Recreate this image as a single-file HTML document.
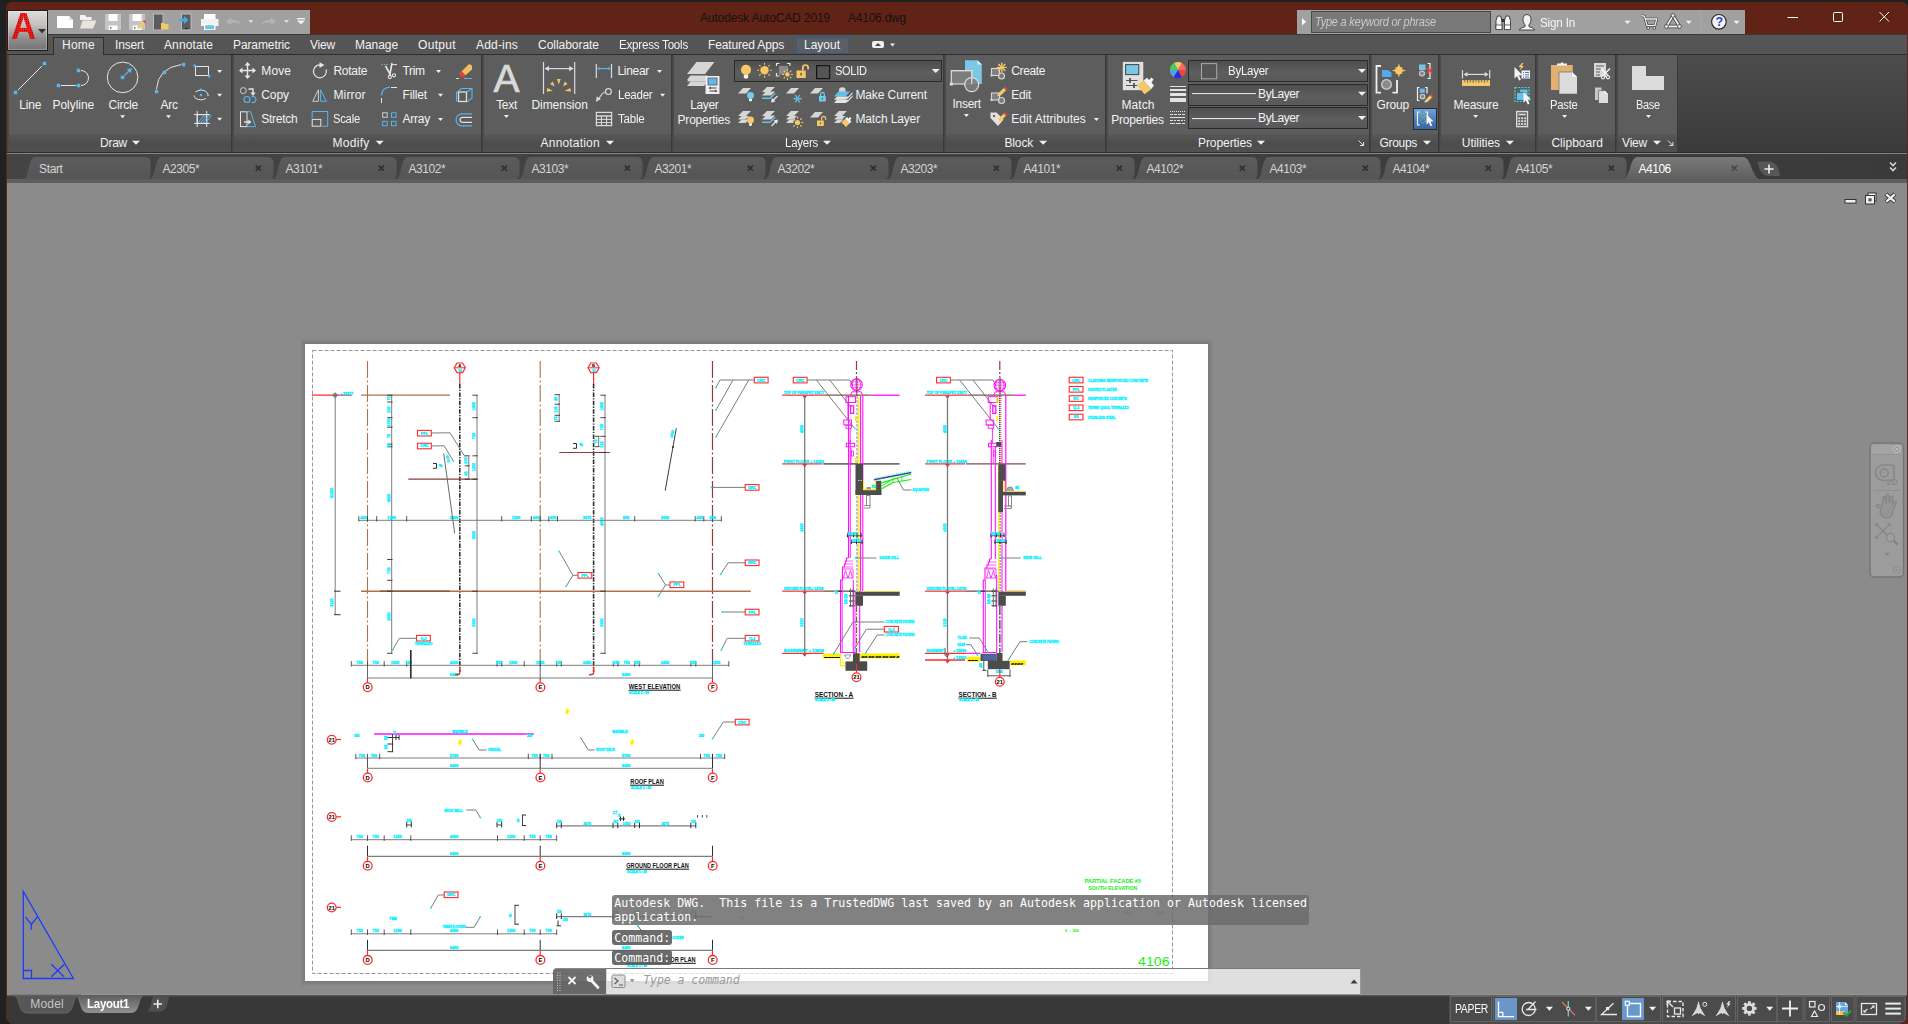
<!DOCTYPE html>
<html lang="en"><head><meta charset="utf-8"><title>Autodesk AutoCAD 2019 - A4106.dwg</title>
<style>
html,body{margin:0;padding:0;background:#1f2020;overflow:hidden}
body{width:1908px;height:1024px;position:relative;font-family:"Liberation Sans",sans-serif}
.b{position:absolute;box-sizing:border-box}
.t{position:absolute;white-space:pre;display:block}
svg{position:absolute;left:0;top:0;overflow:visible}
</style></head><body>
<div id="window" class="b" style="left:6px;top:2px;width:1902px;height:1022px;background:#622317;border-radius:6px 6px 0 0"></div>
<div class="b menurow" style="left:7px;top:34px;width:1900px;height:21px;background:#555555;border-top:1px solid #3a3a3a;"></div>
<div class="b ribbon" style="left:7px;top:54px;width:1900px;height:100px;background:#444444;border-top:1px solid #2e2e2e;border-bottom:1px solid #858585"></div>
<div class="b doctabs" style="left:7px;top:154px;width:1900px;height:25px;background:linear-gradient(90deg,#444 0%,#404040 50%,#3a3a3a 100%);"></div>
<div class="b " style="left:7px;top:179px;width:1900px;height:4px;background:#5e5e5e;"></div>
<div class="b canvas" style="left:7px;top:183px;width:1900px;height:812px;background:#8b8b8b;border-bottom:1px solid #939393"></div>
<div class="b statusbar" style="left:7px;top:995px;width:1900px;height:29px;background:#383838;"></div>
<div class="b" style="left:7px;top:10px;width:41px;height:41px;border:1px solid #1c1c1c;background:linear-gradient(#dcdcdc 0%,#c4c2c0 35%,#8e8e8e 70%,#747474 100%);box-shadow:inset 0 0 0 1px rgba(255,255,255,.25)"></div>
<div class="b qat" style="left:48px;top:10px;width:262px;height:24px;background:#a0a0a0;"></div>
<div class="b infocenter" style="left:1297px;top:10px;width:448px;height:24px;background:#a0a0a0;"></div>
<div class="b " style="left:1311px;top:11px;width:180px;height:22px;background:#787878;border:1px solid #4a4a4a"></div>
<div class="b" style="left:53px;top:37px;width:51px;height:18px;background:linear-gradient(#636363,#5d5d5d);border:1px solid #2e2e2e;border-bottom:none"></div>
<div class="b" style="left:796px;top:37px;width:53px;height:17px;background:#5a5f66;border:1px solid #3c5a80"></div>
<div class="b panel" style="left:8px;top:55px;width:224px;height:98px;background:#5d5d5d;border-left:1px solid #4c4c4c;border-right:1px solid #3a3a3a"></div>
<div class="b" style="left:9px;top:134px;width:222px;height:18px;background:linear-gradient(#585858,#4c4c4c 55%,#505050)"></div>
<div class="b panel" style="left:233px;top:55px;width:249px;height:98px;background:#5d5d5d;border-left:1px solid #4c4c4c;border-right:1px solid #3a3a3a"></div>
<div class="b" style="left:234px;top:134px;width:247px;height:18px;background:linear-gradient(#585858,#4c4c4c 55%,#505050)"></div>
<div class="b panel" style="left:483px;top:55px;width:189px;height:98px;background:#5d5d5d;border-left:1px solid #4c4c4c;border-right:1px solid #3a3a3a"></div>
<div class="b" style="left:484px;top:134px;width:187px;height:18px;background:linear-gradient(#585858,#4c4c4c 55%,#505050)"></div>
<div class="b panel" style="left:673px;top:55px;width:271px;height:98px;background:#5d5d5d;border-left:1px solid #4c4c4c;border-right:1px solid #3a3a3a"></div>
<div class="b" style="left:674px;top:134px;width:269px;height:18px;background:linear-gradient(#585858,#4c4c4c 55%,#505050)"></div>
<div class="b panel" style="left:945px;top:55px;width:161px;height:98px;background:#5d5d5d;border-left:1px solid #4c4c4c;border-right:1px solid #3a3a3a"></div>
<div class="b" style="left:946px;top:134px;width:159px;height:18px;background:linear-gradient(#585858,#4c4c4c 55%,#505050)"></div>
<div class="b panel" style="left:1107px;top:55px;width:263px;height:98px;background:#5d5d5d;border-left:1px solid #4c4c4c;border-right:1px solid #3a3a3a"></div>
<div class="b" style="left:1108px;top:134px;width:261px;height:18px;background:linear-gradient(#585858,#4c4c4c 55%,#505050)"></div>
<div class="b panel" style="left:1371px;top:55px;width:68px;height:98px;background:#5d5d5d;border-left:1px solid #4c4c4c;border-right:1px solid #3a3a3a"></div>
<div class="b" style="left:1372px;top:134px;width:66px;height:18px;background:linear-gradient(#585858,#4c4c4c 55%,#505050)"></div>
<div class="b panel" style="left:1440px;top:55px;width:96px;height:98px;background:#5d5d5d;border-left:1px solid #4c4c4c;border-right:1px solid #3a3a3a"></div>
<div class="b" style="left:1441px;top:134px;width:94px;height:18px;background:linear-gradient(#585858,#4c4c4c 55%,#505050)"></div>
<div class="b panel" style="left:1537px;top:55px;width:79px;height:98px;background:#5d5d5d;border-left:1px solid #4c4c4c;border-right:1px solid #3a3a3a"></div>
<div class="b" style="left:1538px;top:134px;width:77px;height:18px;background:linear-gradient(#585858,#4c4c4c 55%,#505050)"></div>
<div class="b panel" style="left:1617px;top:55px;width:61px;height:98px;background:#5d5d5d;border-left:1px solid #4c4c4c;border-right:1px solid #3a3a3a"></div>
<div class="b" style="left:1618px;top:134px;width:59px;height:18px;background:linear-gradient(#585858,#4c4c4c 55%,#505050)"></div>
<div class="b" style="left:7px;top:152px;width:1900px;height:1px;background:#2c2c2c"></div>
<div class="b" style="left:734px;top:60px;width:208px;height:22px;border:1px solid #2a2a2a;background:linear-gradient(#4e4e4e,#5e5e5e 60%,#585858)"></div>
<div class="b" style="left:1188px;top:60px;width:180px;height:22px;border:1px solid #2a2a2a;background:linear-gradient(#4e4e4e,#5e5e5e 60%,#585858)"></div>
<div class="b" style="left:1188px;top:83.5px;width:180px;height:22px;border:1px solid #2a2a2a;background:linear-gradient(#4e4e4e,#5e5e5e 60%,#585858)"></div>
<div class="b" style="left:1188px;top:107px;width:180px;height:22px;border:1px solid #2a2a2a;background:linear-gradient(#4e4e4e,#5e5e5e 60%,#585858)"></div>
<div class="b" style="left:1413px;top:108px;width:24px;height:22px;border:1px solid #2a2a2a;background:linear-gradient(#6fa4d8,#4a78b8 60%,#3c66a6)"></div>
<div class="b" style="left:1678px;top:55px;width:229px;height:97px;background:linear-gradient(#4c4c4c,#434343 50%,#3b3b3b)"></div>
<svg width="1908" height="1024" viewBox="0 0 1908 1024"><path d="M1787.5 17.5h10.5" stroke="#fff" stroke-width="1" fill="none"/>
<rect x="1833.5" y="12.5" width="9" height="9" stroke="#fff" stroke-width="1" fill="none" rx="1"/>
<path d="M1879.5 12l9.5 9.500M1889 12l-9.500 9.500" stroke="#fff" stroke-width="1" fill="none"/>
<path d="M38 29h8l-4 4.5z" fill="#333"/>
<rect x="872" y="41" width="12" height="7" rx="2" fill="#f0f0f0"/><path d="M875 46l3-3 3 3z" fill="#444"/>
<path d="M890.0 43.5h5l-2.5 3z" fill="#f0f0f0"/>
<path d="M132.0 140.8h8l-4.0 4z" fill="#f0f0f0"/>
<path d="M375.7 140.8h8l-4.0 4z" fill="#f0f0f0"/>
<path d="M606.0 140.8h8l-4.0 4z" fill="#f0f0f0"/>
<path d="M823.0 140.8h8l-4.0 4z" fill="#f0f0f0"/>
<path d="M1039.1 140.8h8l-4.0 4z" fill="#f0f0f0"/>
<path d="M1257.0 140.8h8l-4.0 4z" fill="#f0f0f0"/>
<path d="M1423.0 140.8h8l-4.0 4z" fill="#f0f0f0"/>
<path d="M1505.9 140.8h8l-4.0 4z" fill="#f0f0f0"/>
<path d="M1653.0 140.8h8l-4.0 4z" fill="#f0f0f0"/>
<path d="M1358.5 140.5l5 5m0-3.5v3.5h-3.5" stroke="#e0e0e0" stroke-width="1" fill="none" />
<path d="M1667.9 140.5l5 5m0-3.5v3.5h-3.5" stroke="#e0e0e0" stroke-width="1" fill="none" />
<line x1="18" y1="90" x2="42" y2="66" stroke="#e6e6e6" stroke-width="1" />
<rect x="13.75" y="90.75" width="3.5" height="3.5" fill="#5ab4ee"/>
<rect x="42.75" y="61.75" width="3.5" height="3.5" fill="#5ab4ee"/>
<line x1="61" y1="85.5" x2="76" y2="85.5" stroke="#e6e6e6" stroke-width="1" />
<path d="M81 70.5a7.5 7.5 0 0 1 0 15" stroke="#e6e6e6" stroke-width="1" fill="none" />
<rect x="56.75" y="83.75" width="3.5" height="3.5" fill="#5ab4ee"/>
<rect x="76.75" y="83.75" width="3.5" height="3.5" fill="#5ab4ee"/>
<rect x="76.75" y="68.75" width="3.5" height="3.5" fill="#5ab4ee"/>
<circle cx="122.6" cy="77.4" r="15.3" stroke="#e6e6e6" stroke-width="1" fill="none" />
<rect x="120.85" y="75.65" width="3.5" height="3.5" fill="#5ab4ee"/>
<line x1="124.5" y1="75.5" x2="130" y2="70" stroke="#5ab4ee" stroke-width="1.2" />
<path d="M132 68l-5.2 1.2 4 4z" fill="#5ab4ee" />
<path d="M156.5 89Q158 68 181 64.6" stroke="#e6e6e6" stroke-width="1" fill="none" />
<rect x="154.75" y="89.75" width="3.5" height="3.5" fill="#5ab4ee"/>
<rect x="162.75" y="70.65" width="3.5" height="3.5" fill="#5ab4ee"/>
<rect x="181.75" y="62.849999999999994" width="3.5" height="3.5" fill="#5ab4ee"/>
<path d="M120.1 115.2h5l-2.5 3z" fill="#f0f0f0"/>
<path d="M166.0 115.2h5l-2.5 3z" fill="#f0f0f0"/>
<rect x="195.5" y="66.5" width="13" height="9" stroke="#e6e6e6" stroke-width="1" fill="none" />
<rect x="193.45" y="64.45" width="2.5" height="2.5" fill="#5ab4ee"/>
<rect x="207.75" y="74.95" width="2.5" height="2.5" fill="#5ab4ee"/>
<path d="M217.1 70.0h5l-2.5 3z" fill="#f0f0f0"/>
<ellipse cx="200.9" cy="95" rx="7" ry="4.8" stroke="#e6e6e6" fill="none" stroke-dasharray="14 4" stroke-dashoffset="-4"/>
<rect x="199.75" y="88.64999999999999" width="2.3" height="2.3" fill="#5ab4ee"/>
<rect x="199.75" y="93.85" width="2.3" height="2.3" fill="#5ab4ee"/>
<rect x="206.85" y="93.85" width="2.3" height="2.3" fill="#5ab4ee"/>
<path d="M217.1 93.8h5l-2.5 3z" fill="#f0f0f0"/>
<rect x="197.2" y="114.6" width="9.5" height="8.8" stroke="#e6e6e6" stroke-width="1" fill="#5d5d5d" />
<line x1="194" y1="114.6" x2="210" y2="114.6" stroke="#e6e6e6" stroke-width="1" />
<line x1="194" y1="123.4" x2="210" y2="123.4" stroke="#e6e6e6" stroke-width="1" />
<line x1="197.2" y1="111" x2="197.2" y2="127" stroke="#e6e6e6" stroke-width="1" />
<line x1="206.7" y1="111" x2="206.7" y2="127" stroke="#e6e6e6" stroke-width="1" />
<line x1="198.0" y1="123" x2="204.0" y2="115" stroke="#5ab4ee" stroke-width="1" clip-path="inset(0)"/>
<line x1="200.5" y1="123" x2="206.5" y2="115" stroke="#5ab4ee" stroke-width="1" clip-path="inset(0)"/>
<line x1="203.0" y1="123" x2="209.0" y2="115" stroke="#5ab4ee" stroke-width="1" clip-path="inset(0)"/>
<line x1="205.5" y1="123" x2="211.5" y2="115" stroke="#5ab4ee" stroke-width="1" clip-path="inset(0)"/>
<path d="M217.1 117.8h5l-2.5 3z" fill="#f0f0f0"/>
<path d="M247.5 63v15M240 70.5h15" stroke="#e6e6e6" stroke-width="1.4" fill="none" />
<path d="M247.5 62l3 3.5h-6zM247.5 79l3-3.5h-6zM239 70.5l3.5-3v6zM256 70.5l-3.5-3v6z" fill="#e6e6e6" />
<circle cx="243.3" cy="90.6" r="3" stroke="#cfcfcf" stroke-width="1" fill="none" />
<path d="M248.5 89h4.5v4" stroke="#e6e6e6" stroke-width="1.3" fill="none" />
<path d="M253 96l-2.6-3.4h5.2z" fill="#e6e6e6" />
<circle cx="247" cy="99.5" r="3" stroke="#5ab4ee" stroke-width="1.2" fill="none" />
<path d="M251.6 96.8a3 3 0 1 1 0 5.4" stroke="#5ab4ee" stroke-width="1.2" fill="none" />
<rect x="240.5" y="111.8" width="6.5" height="14.8" stroke="#e6e6e6" stroke-width="1" fill="none" />
<path d="M247 111.6h3.5l5 15h-8.5" stroke="#5ab4ee" stroke-width="1" fill="none" />
<line x1="244" y1="122" x2="249" y2="122" stroke="#e6e6e6" stroke-width="1.3" />
<path d="M251.5 122l-3.2-2.4v4.8z" fill="#e6e6e6" />
<path d="M322.5 65.4a6.5 6.5 0 1 0 3.6 4" stroke="#e6e6e6" stroke-width="1.2" fill="none" />
<path d="M319.5 62.2l5 2.8-5 3z" fill="#e6e6e6" />
<path d="M312.7 101.3h5.7v-11.5z" stroke="#cfcfcf" stroke-width="1" fill="none" />
<path d="M320.6 89.8v11.5h5.7z" stroke="#5ab4ee" stroke-width="1" fill="none" />
<path d="M312.2 118v-6.5h15.5v14.7h-5.5" stroke="#5ab4ee" stroke-width="1" fill="none" />
<rect x="312.2" y="119.4" width="8.6" height="6.8" stroke="#e6e6e6" stroke-width="1" fill="none" />
<line x1="381.5" y1="64.6" x2="389" y2="64.6" stroke="#5ab4ee" stroke-width="1" stroke-dasharray="1.5 1"/>
<line x1="392" y1="64.6" x2="397" y2="64.6" stroke="#e6e6e6" stroke-width="1" />
<path d="M385.5 66l5 9M392 63l-2.2 12" stroke="#e6e6e6" stroke-width="1.6" fill="none" />
<circle cx="389.8" cy="77" r="1.6" stroke="#e6e6e6" stroke-width="1.1" fill="none" />
<circle cx="394" cy="75.3" r="1.6" stroke="#e6e6e6" stroke-width="1.1" fill="none" />
<path d="M381.5 95.5q0.5-8 8.5-8.3" stroke="#5ab4ee" stroke-width="1.2" fill="none" />
<line x1="381.5" y1="98" x2="381.5" y2="103" stroke="#e6e6e6" stroke-width="1" />
<line x1="391" y1="87.5" x2="397" y2="87.5" stroke="#e6e6e6" stroke-width="1" />
<rect x="382.7" y="112.8" width="4.5" height="4.5" stroke="#cfcfcf" stroke-width="1" fill="none" />
<rect x="391.5" y="112.8" width="4.5" height="4.5" stroke="#5ab4ee" stroke-width="1" fill="none" />
<rect x="382.7" y="121.3" width="4.5" height="4.5" stroke="#5ab4ee" stroke-width="1" fill="none" />
<rect x="391.5" y="121.3" width="4.5" height="4.5" stroke="#5ab4ee" stroke-width="1" fill="none" />
<path d="M436.0 69.9h5l-2.5 3z" fill="#f0f0f0"/>
<path d="M438.0 93.8h5l-2.5 3z" fill="#f0f0f0"/>
<path d="M438.0 118.0h5l-2.5 3z" fill="#f0f0f0"/>
<path d="M459.5 73.5l9.5-9.5 3 1.5v4l-8.5 7.5z" fill="#f0c060" />
<path d="M459.5 73.5l2.2-2.2 4 4-2.2 2.2q-3 0.5-4-4z" fill="#e63c3c" />
<line x1="456" y1="78.5" x2="459" y2="78.5" stroke="#ddd" stroke-width="1" />
<line x1="464" y1="78.5" x2="472" y2="78.5" stroke="#5ab4ee" stroke-width="1" />
<rect x="458.5" y="92" width="8" height="9.5" stroke="#e0e0e0" stroke-width="1.3" fill="none" />
<path d="M456.5 101.5v-9l5-4h10.5v9.5l-5 4M461.5 88.5l5 0M472 88.5l-5.5 3.7" stroke="#5ab4ee" stroke-width="1.1" fill="none" />
<path d="M472 113.8h-10a6 6 0 0 0 0 12h10" stroke="#5ab4ee" stroke-width="1.2" fill="none" />
<path d="M472 117.3h-9.5a2.5 2.5 0 0 0 0 5h9.5" stroke="#e0e0e0" stroke-width="1.2" fill="none" />
<path d="M503.9 115.1h5l-2.5 3z" fill="#f0f0f0"/>
<line x1="543.5" y1="62" x2="543.5" y2="94" stroke="#dcdcdc" stroke-width="1.2" />
<line x1="574.7" y1="62" x2="574.7" y2="94" stroke="#dcdcdc" stroke-width="1.2" />
<line x1="546" y1="68.6" x2="572" y2="68.6" stroke="#dcdcdc" stroke-width="1.2" />
<path d="M544.5 68.6l4.5-2.6v5.2zM573.7 68.6l-4.5-2.6v5.2z" fill="#dcdcdc" />
<path d="M558.8 84.5L560.7 79.0L556.9 79.0z" fill="#f5c562" />
<path d="M563.0 86.5L567.6 83.9L564.7 81.5z" fill="#f5c562" />
<path d="M554.6 86.5L552.9 81.5L550.0 83.9z" fill="#f5c562" />
<path d="M564.7 90.7L570.9 91.7L570.4 87.9z" fill="#f5c562" />
<path d="M552.9 90.7L547.2 87.9L546.7 91.7z" fill="#f5c562" />
<line x1="596.3" y1="64" x2="596.3" y2="78" stroke="#dcdcdc" stroke-width="1.2" />
<line x1="611.5" y1="64" x2="611.5" y2="78" stroke="#dcdcdc" stroke-width="1.2" />
<line x1="598" y1="68.6" x2="610" y2="68.6" stroke="#5ab4ee" stroke-width="1.2" />
<path d="M597 68.6l2.5-1.6v3.2zM610.8 68.6l-2.5-1.6v3.2z" fill="#5ab4ee" />
<circle cx="608.4" cy="91.6" r="2.9" stroke="#dcdcdc" stroke-width="1.2" fill="none" />
<path d="M605.4 92q-3.5 0.5-6.8 7.5" stroke="#dcdcdc" stroke-width="1.2" fill="none" />
<path d="M595.8 102l1-5.5 4 2.5z" fill="#dcdcdc" />
<rect x="596.4" y="112.4" width="15.2" height="13.2" stroke="#dcdcdc" stroke-width="1.2" fill="none" />
<line x1="596" y1="116" x2="612" y2="116" stroke="#dcdcdc" stroke-width="1.4" />
<line x1="596" y1="119.4" x2="612" y2="119.4" stroke="#dcdcdc" stroke-width="1" />
<line x1="596" y1="122.6" x2="612" y2="122.6" stroke="#dcdcdc" stroke-width="1" />
<line x1="601.4" y1="116" x2="601.4" y2="126" stroke="#dcdcdc" stroke-width="1" />
<line x1="606.6" y1="116" x2="606.6" y2="126" stroke="#dcdcdc" stroke-width="1" />
<path d="M657.0 69.9h5l-2.5 3z" fill="#f0f0f0"/>
<path d="M660.1 93.8h5l-2.5 3z" fill="#f0f0f0"/>
<path d="M687 74l9.5 -12h18l-9.5 12z" fill="#d6d6d6" />
<path d="M687 81.5l3.2 -4h18l-3.2 4z" fill="#d6d6d6" />
<path d="M687 74l0 0h9l0 0z" fill="#d6d6d6" />
<path d="M687 86l3.5-4.5h17l-3.5 4.5z" fill="#d6d6d6" />
<path d="M687 80l3.5-4.5h17l-3.5 4.5z" fill="#d6d6d6" />
<path d="M705.5 76h14v18h-14z" fill="#efefef" />
<path d="M708 78h9v7h-9z" fill="#62b8ea" />
<rect x="708" y="78" width="9" height="7" fill="none" stroke="#555" stroke-width=".8"/>
<path d="M709.5 88h7M709.5 91h7" stroke="#444" stroke-width="1" fill="none" />
<path d="M708.7 88l2-1.5v3zM717.3 91l-2-1.5v3z" fill="#444" />
<circle cx="746" cy="69.85" r="5.06" stroke="#f8c866" stroke-width="0" fill="#f8c866" />
<path d="M743.8 74.8h4.4v2.8600000000000003q-2.2 2.2 -4.4 0z" fill="#f2f2f2" />
<circle cx="764.5" cy="70.3" r="4.2" stroke="#f8c866" stroke-width="0" fill="#f8c866" />
<line x1="770.0" y1="70.3" x2="771.9" y2="70.3" stroke="#f8c866" stroke-width="1.1" />
<line x1="768.389087296526" y1="74.18908729652601" x2="769.7325901807804" y2="75.53259018078045" stroke="#f8c866" stroke-width="1.1" />
<line x1="764.5" y1="75.8" x2="764.5" y2="77.7" stroke="#f8c866" stroke-width="1.1" />
<line x1="760.610912703474" y1="74.18908729652601" x2="759.2674098192196" y2="75.53259018078045" stroke="#f8c866" stroke-width="1.1" />
<line x1="759.0" y1="70.3" x2="757.1" y2="70.3" stroke="#f8c866" stroke-width="1.1" />
<line x1="760.610912703474" y1="66.41091270347398" x2="759.2674098192196" y2="65.06740981921955" stroke="#f8c866" stroke-width="1.1" />
<line x1="764.5" y1="64.8" x2="764.5" y2="62.9" stroke="#f8c866" stroke-width="1.1" />
<line x1="768.389087296526" y1="66.41091270347398" x2="769.7325901807804" y2="65.06740981921955" stroke="#f8c866" stroke-width="1.1" />
<path d="M776.5 66v-2.5h3M787 63.5h3v2.5M776.5 73v3h3" stroke="#e4e4e4" stroke-width="1.2" fill="none" />
<path d="M779 66h9v8.5h-9z" fill="#8a8a8a" />
<circle cx="787.5" cy="74.5" r="2.2" stroke="#f8c866" stroke-width="0" fill="#f8c866" />
<line x1="791.0" y1="74.5" x2="792.9" y2="74.5" stroke="#f8c866" stroke-width="1.1" />
<line x1="789.9748737341529" y1="76.97487373415292" x2="791.3183766184073" y2="78.31837661840736" stroke="#f8c866" stroke-width="1.1" />
<line x1="787.5" y1="78.0" x2="787.5" y2="79.9" stroke="#f8c866" stroke-width="1.1" />
<line x1="785.0251262658471" y1="76.97487373415292" x2="783.6816233815927" y2="78.31837661840736" stroke="#f8c866" stroke-width="1.1" />
<line x1="784.0" y1="74.5" x2="782.1" y2="74.5" stroke="#f8c866" stroke-width="1.1" />
<line x1="785.0251262658471" y1="72.02512626584708" x2="783.6816233815927" y2="70.68162338159264" stroke="#f8c866" stroke-width="1.1" />
<line x1="787.5" y1="71.0" x2="787.5" y2="69.1" stroke="#f8c866" stroke-width="1.1" />
<line x1="789.9748737341529" y1="72.02512626584708" x2="791.3183766184073" y2="70.68162338159264" stroke="#f8c866" stroke-width="1.1" />
<path d="M796.5 70.5h9.2v7.475h-9.2z" fill="#f8c866" />
<path d="M802.825 70.5v-2.875a2.6449999999999996 2.6449999999999996 0 0 1 5.289999999999999 0v1.7249999999999999" stroke="#f8c866" stroke-width="1.7249999999999999" fill="none" />
<rect x="800.41" y="72.8" width="1.38" height="2.76" fill="#555"/>
<rect x="816.6" y="65.6" width="13" height="13" fill="#555" stroke="#141414" stroke-width="1.2"/>
<path d="M931.7 68.9h8l-4.0 4z" fill="#f0f0f0"/>
<path d="M738 93.5l5 -5.5h8l-5 5.5z" fill="#d6d6d6" />
<circle cx="750.5" cy="95.375" r="3.4499999999999997" stroke="#6fcdea" stroke-width="0" fill="#6fcdea" />
<path d="M749.0 98.75h3.0v1.9500000000000002q-1.5 1.5 -3.0 0z" fill="#f2f2f2" />
<path d="M762 92l5 -5h8l-5 5z" fill="#d6d6d6" />
<path d="M762 95.5l4-4h9l-4 4z" fill="#d6d6d6" />
<path d="M762 98.2h8l5-5" stroke="#62c0ea" stroke-width="1.4" fill="none" />
<line x1="777.5" y1="96" x2="772.5" y2="101" stroke="#e8e8e8" stroke-width="1.3" />
<path d="M771 102.5l1-4.5 3.5 3.5z" fill="#e8e8e8" />
<path d="M786 93.5l5 -5.5h8l-5 5.5z" fill="#d6d6d6" />
<line x1="801.8" y1="98.7" x2="793.2" y2="98.7" stroke="#62c0ea" stroke-width="1.3" />
<line x1="799.65" y1="102.42390923627309" x2="795.35" y2="94.97609076372692" stroke="#62c0ea" stroke-width="1.3" />
<line x1="795.35" y1="102.42390923627309" x2="799.65" y2="94.97609076372692" stroke="#62c0ea" stroke-width="1.3" />
<path d="M810 93.5l5 -5.5h8l-5 5.5z" fill="#d6d6d6" />
<path d="M819 96h6.8v5.5249999999999995h-6.8z" fill="#6fcdea" />
<path d="M820.53 96v-1.7a1.87 1.87 0 0 1 3.74 0v1.7" stroke="#6fcdea" stroke-width="1.275" fill="none" />
<rect x="821.89" y="97.7" width="1.02" height="2.04" fill="#555"/>
<path d="M738 116l5 -5h8l-5 5z" fill="#d6d6d6" />
<path d="M738 119.5l3.5-3.5h7.5l-3.5 3.5z" fill="#d6d6d6" />
<path d="M738 123l3.5-3.5h7.5l-3.5 3.5z" fill="#d6d6d6" />
<circle cx="750.5" cy="119.875" r="3.4499999999999997" stroke="#f8c866" stroke-width="0" fill="#f8c866" />
<path d="M749.0 123.25h3.0v1.9500000000000002q-1.5 1.5 -3.0 0z" fill="#f2f2f2" />
<path d="M762 116l5 -5h8l-5 5z" fill="#d6d6d6" />
<path d="M762 119.5l4-4h9l-4 4z" fill="#d6d6d6" />
<path d="M762 122.2h8l5-5" stroke="#62c0ea" stroke-width="1.4" fill="none" />
<line x1="771.5" y1="126" x2="776.5" y2="121" stroke="#e8e8e8" stroke-width="1.3" />
<path d="M778 119.5l-1 4.5-3.5-3.5z" fill="#e8e8e8" />
<path d="M786 116l5 -5h8l-5 5z" fill="#d6d6d6" />
<path d="M786 119.5l3.5-3.5h7.5l-3.5 3.5z" fill="#d6d6d6" />
<path d="M786 123l3.5-3.5h6l-3.5 3.5z" fill="#d6d6d6" />
<circle cx="797.5" cy="122.5" r="2.6" stroke="#f8c866" stroke-width="0" fill="#f8c866" />
<line x1="801.4" y1="122.5" x2="803.3" y2="122.5" stroke="#f8c866" stroke-width="1.1" />
<line x1="800.2577164466276" y1="125.25771644662754" x2="801.601219330882" y2="126.60121933088197" stroke="#f8c866" stroke-width="1.1" />
<line x1="797.5" y1="126.4" x2="797.5" y2="128.3" stroke="#f8c866" stroke-width="1.1" />
<line x1="794.7422835533724" y1="125.25771644662754" x2="793.398780669118" y2="126.60121933088197" stroke="#f8c866" stroke-width="1.1" />
<line x1="793.6" y1="122.5" x2="791.7" y2="122.5" stroke="#f8c866" stroke-width="1.1" />
<line x1="794.7422835533724" y1="119.74228355337246" x2="793.398780669118" y2="118.39878066911803" stroke="#f8c866" stroke-width="1.1" />
<line x1="797.5" y1="118.6" x2="797.5" y2="116.7" stroke="#f8c866" stroke-width="1.1" />
<line x1="800.2577164466276" y1="119.74228355337246" x2="801.601219330882" y2="118.39878066911803" stroke="#f8c866" stroke-width="1.1" />
<path d="M810 117.5l5 -5.5h8l-5 5.5z" fill="#d6d6d6" />
<path d="M817 120.5h6.8v5.5249999999999995h-6.8z" fill="#f8c866" />
<path d="M821.675 120.5v-2.125a1.9549999999999998 1.9549999999999998 0 0 1 3.9099999999999997 0v1.275" stroke="#f8c866" stroke-width="1.275" fill="none" />
<rect x="819.89" y="122.2" width="1.02" height="2.04" fill="#555"/>
<circle cx="842.3" cy="90.5" r="3.3" stroke="#d6d6d6" stroke-width="0" fill="#d6d6d6" />
<path d="M834 96.5l4.5-5h11.5l-4.5 5z" fill="#62c0ea" />
<path d="M834 99.8l3-3.3h11.5l4-4.4v1.6l-4 4.4-3 1.7z" fill="#e4e4e4" />
<path d="M834 103l3-3.3h11.5l4-4.4v1.6l-4 4.4-3 1.7z" fill="#e4e4e4" />
<path d="M834 116l5 -5h8l-5 5z" fill="#d6d6d6" />
<path d="M834 119.5l3.5-3.5h8l-3.5 3.5z" fill="#d6d6d6" />
<path d="M834 123l3.5-3.5h6l-3.5 3.5z" fill="#d6d6d6" />
<path d="M841.5 122.5l3.5-3.5 4.5 4.5-3.5 3.5z" fill="#f8c866" />
<path d="M845 119l2-2 1.5 1.5 1.5-1.5 1.5 1.5-1.5 1.5 1.5 1.5-2 2z" fill="#f2f2f2" />
<path d="M965 60.2h12.5l4.3 4.3v19.4h-16.8z" fill="#7cc6e6" />
<path d="M977.5 60.2v4.3h4.3z" fill="#e8f4fa" />
<rect x="951.3" y="70.6" width="20.4" height="13.4" fill="#7c7c7c" stroke="#dcdcdc" stroke-width="1.2"/>
<circle cx="971.7" cy="84.6" r="7" stroke="#dcdcdc" stroke-width="1.2" fill="rgba(124,124,124,.85)" />
<path d="M951.3 70.6h20.4v13.4" stroke="#dcdcdc" stroke-width="1.2" fill="none" />
<rect x="949.8" y="82.6" width="3" height="3" fill="#dcdcdc"/>
<path d="M963.9 114.0h5l-2.5 3z" fill="#f0f0f0"/>
<rect x="991.5" y="68.5" width="8" height="7" fill="#808080" stroke="#d8d8d8" stroke-width="1.1"/>
<circle cx="1001.5" cy="76.0" r="3" stroke="#d8d8d8" stroke-width="1.1" fill="rgba(128,128,128,.8)" />
<rect x="990.5" y="74.5" width="2" height="2" fill="#d8d8d8"/>
<circle cx="1001.8" cy="67.5" r="1.8" stroke="#f8c866" stroke-width="0" fill="#f8c866" />
<line x1="1004.9" y1="67.5" x2="1006.8" y2="67.5" stroke="#f8c866" stroke-width="1.1" />
<line x1="1003.9920310216783" y1="69.6920310216783" x2="1005.3355339059327" y2="71.03553390593274" stroke="#f8c866" stroke-width="1.1" />
<line x1="1001.8" y1="70.6" x2="1001.8" y2="72.5" stroke="#f8c866" stroke-width="1.1" />
<line x1="999.6079689783217" y1="69.6920310216783" x2="998.2644660940672" y2="71.03553390593274" stroke="#f8c866" stroke-width="1.1" />
<line x1="998.6999999999999" y1="67.5" x2="996.8" y2="67.5" stroke="#f8c866" stroke-width="1.1" />
<line x1="999.6079689783217" y1="65.3079689783217" x2="998.2644660940672" y2="63.96446609406726" stroke="#f8c866" stroke-width="1.1" />
<line x1="1001.8" y1="64.4" x2="1001.8" y2="62.5" stroke="#f8c866" stroke-width="1.1" />
<line x1="1003.9920310216783" y1="65.3079689783217" x2="1005.3355339059327" y2="63.96446609406726" stroke="#f8c866" stroke-width="1.1" />
<line x1="1001.8" y1="67.5" x2="1006.0" y2="67.5" stroke="#f8c866" stroke-width="1.2" />
<line x1="1001.8" y1="67.5" x2="1004.7698484809835" y2="70.4698484809835" stroke="#f8c866" stroke-width="1.2" />
<line x1="1001.8" y1="67.5" x2="1001.8" y2="71.7" stroke="#f8c866" stroke-width="1.2" />
<line x1="1001.8" y1="67.5" x2="998.8301515190165" y2="70.4698484809835" stroke="#f8c866" stroke-width="1.2" />
<line x1="1001.8" y1="67.5" x2="997.5999999999999" y2="67.5" stroke="#f8c866" stroke-width="1.2" />
<line x1="1001.8" y1="67.5" x2="998.8301515190165" y2="64.5301515190165" stroke="#f8c866" stroke-width="1.2" />
<line x1="1001.8" y1="67.5" x2="1001.8" y2="63.3" stroke="#f8c866" stroke-width="1.2" />
<line x1="1001.8" y1="67.5" x2="1004.7698484809835" y2="64.5301515190165" stroke="#f8c866" stroke-width="1.2" />
<rect x="991.5" y="93" width="8" height="7" fill="#808080" stroke="#d8d8d8" stroke-width="1.1"/>
<circle cx="1001.5" cy="100.5" r="3" stroke="#d8d8d8" stroke-width="1.1" fill="rgba(128,128,128,.8)" />
<rect x="990.5" y="99" width="2" height="2" fill="#d8d8d8"/>
<path d="M997.5 96l0.95 -2.8499999999999996 5.225 -5.225 2.375 2.375 -5.225 5.225z" fill="#f8c866" />
<path d="M1003.675 87.925l1.4249999999999998 -1.4249999999999998 2.375 2.375 -1.4249999999999998 1.4249999999999998z" fill="#f04040" />
<path d="M997.5 96l0.57 -1.71 1.14 1.14z" fill="#eee" />
<path d="M990.5 112.5h6l7 7-5.5 6.5-7.5-8z" fill="#e6e0dc" />
<path d="M993 115h2v2h-2z" fill="#5d5d5d" />
<path d="M997.5 121.5l0.95 -2.8499999999999996 5.225 -5.225 2.375 2.375 -5.225 5.225z" fill="#f8c866" />
<path d="M1003.675 113.425l1.4249999999999998 -1.4249999999999998 2.375 2.375 -1.4249999999999998 1.4249999999999998z" fill="#f04040" />
<path d="M997.5 121.5l0.57 -1.71 1.14 1.14z" fill="#eee" />
<path d="M1093.9 118.0h5l-2.5 3z" fill="#f0f0f0"/>
<path d="M1122.8 61.9h20.5v28.3h-20.5z" fill="#e0e0e0" />
<rect x="1125.6" y="64.6" width="13.2" height="10" fill="#7cc6e6" stroke="#444" stroke-width="1"/>
<path d="M1126 80.5h11.5M1126 85.5h11.5" stroke="#555" stroke-width="1" fill="none" />
<path d="M1130 78v5M1134 83v5" stroke="#444" stroke-width="1.6" fill="none" />
<path d="M1137 85l6.5-4.5 7.5 9-6.5 4.8z" fill="#f8c866" />
<path d="M1143.5 80.5l3.5-2.8 2 2.2 2.5-2.5 2 2-2 3 2.5 3-3 3.8z" fill="#f4f4f4" />
<path d="M1177.9 70.1L1174.06 63.08A8 8 0 0 1 1182.06 63.27z" fill="#f8c866" />
<path d="M1177.9 70.1L1182.06 63.27A8 8 0 0 1 1185.90 70.29z" fill="#f86a5a" />
<path d="M1177.9 70.1L1185.90 70.29A8 8 0 0 1 1181.74 77.12z" fill="#f04838" />
<path d="M1177.9 70.1L1181.74 77.12A8 8 0 0 1 1173.74 76.93z" fill="#2828e8" />
<path d="M1177.9 70.1L1173.74 76.93A8 8 0 0 1 1169.90 69.91z" fill="#5aa0e0" />
<path d="M1177.9 70.1L1169.90 69.91A8 8 0 0 1 1174.06 63.08z" fill="#40d060" />
<path d="M1170 86h16v1h-16z" fill="#e2e2e2" />
<path d="M1170 89h16v2h-16z" fill="#e2e2e2" />
<path d="M1170 93h16v3h-16z" fill="#e2e2e2" />
<path d="M1170 98h16v4h-16z" fill="#e2e2e2" />
<line x1="1170" y1="111.5" x2="1185" y2="111.5" stroke="#e2e2e2" stroke-width="1" stroke-dasharray="1 1"/>
<line x1="1170" y1="114.5" x2="1185" y2="114.5" stroke="#e2e2e2" stroke-width="1" stroke-dasharray="3 1"/>
<line x1="1170" y1="117.5" x2="1185" y2="117.5" stroke="#e2e2e2" stroke-width="1" />
<line x1="1170" y1="120.5" x2="1185" y2="120.5" stroke="#e2e2e2" stroke-width="1" stroke-dasharray="3 1 2 1"/>
<line x1="1170" y1="123.5" x2="1185" y2="123.5" stroke="#e2e2e2" stroke-width="1" stroke-dasharray="5 1"/>
<rect x="1201.5" y="63.6" width="15.2" height="15.2" fill="#555" stroke="#a8a8a8" stroke-width="1"/>
<line x1="1192" y1="93.6" x2="1256" y2="93.6" stroke="#f0f0f0" stroke-width="1" />
<line x1="1192" y1="118.6" x2="1256" y2="118.6" stroke="#f0f0f0" stroke-width="1" />
<path d="M1358.0 68.9h8l-4.0 4z" fill="#f0f0f0"/>
<path d="M1358.0 91.7h8l-4.0 4z" fill="#f0f0f0"/>
<path d="M1358.0 115.9h8l-4.0 4z" fill="#f0f0f0"/>
<path d="M1381.0 66h-4.5v26.599999999999994h4.5" stroke="#f0f0f0" stroke-width="1.8" fill="none" />
<path d="M1397 80v12.599999999999994h-4.5" stroke="#f0f0f0" stroke-width="1.8" fill="none" />
<path d="M1382 70h6l3.5 2.5v4.5h-9.5z" fill="#58a8e8" />
<circle cx="1386.5" cy="84.4" r="4.8" stroke="#d0d0d0" stroke-width="1.3" fill="#8a8a8a" />
<path d="M1406.1 70.4L1401.0 71.9L1401.0 68.9z" fill="#f8c866" />
<path d="M1402.4 73.9L1399.4 73.0L1401.5 70.9z" fill="#f8c866" />
<path d="M1398.9 77.6L1397.4 72.5L1400.4 72.5z" fill="#f8c866" />
<path d="M1395.4 73.9L1396.3 70.9L1398.4 73.0z" fill="#f8c866" />
<path d="M1391.7 70.4L1396.8 68.9L1396.8 71.9z" fill="#f8c866" />
<path d="M1395.4 66.9L1398.4 67.8L1396.3 69.9z" fill="#f8c866" />
<path d="M1398.9 63.2L1400.4 68.3L1397.4 68.3z" fill="#f8c866" />
<path d="M1402.4 66.9L1401.5 69.9L1399.4 67.8z" fill="#f8c866" />
<circle cx="1398.9" cy="70.4" r="3.6" stroke="#f8c866" stroke-width="0" fill="#f8c866" />
<rect x="1419.5" y="65" width="5.5" height="4.5" fill="#8ab8d8" stroke="#6fcdea" stroke-width="1"/>
<circle cx="1422" cy="73.5" r="2.5" stroke="#d0d0d0" stroke-width="1.1" fill="#888" />
<path d="M1427.5 63.5h2.5v15h-2.5" stroke="#f0f0f0" stroke-width="1.2" fill="none" />
<path d="M1427 68l5 5M1432 68l-5 5" stroke="#f04040" stroke-width="1.6" fill="none" />
<path d="M1419.5 87.5h-2v13h2M1425 87.5h2v6" stroke="#f0f0f0" stroke-width="1.2" fill="none" />
<rect x="1420" y="89" width="4.5" height="3.5" fill="#8ab8d8" stroke="#58a8e8" stroke-width="1"/>
<circle cx="1422.5" cy="96.5" r="2.3" stroke="#d0d0d0" stroke-width="1.1" fill="#888" />
<path d="M1424.5 102.5l0.85 -2.55 4.675 -4.675 2.125 2.125 -4.675 4.675z" fill="#f8c866" />
<path d="M1430.025 95.275l1.275 -1.275 2.125 2.125 -1.275 1.275z" fill="#f04040" />
<path d="M1424.5 102.5l0.51 -1.53 1.02 1.02z" fill="#eee" />
<path d="M1420 112h-2.5v13h2.5M1425 112h2.5v4" stroke="#f0f0f0" stroke-width="1.2" fill="none" />
<rect x="1421" y="113.5" width="4" height="3.5" fill="none" stroke="#60e060" stroke-width="1" stroke-dasharray="1 1"/>
<circle cx="1423" cy="121" r="2.2" stroke="#60e060" stroke-width="1" fill="none" stroke-dasharray="1 1"/>
<path d="M1426.5 114.5v10l2.3-2.2 1.8 4 1.6-.7-1.8-4h3.2z" fill="#f8f8f8" />
<line x1="1462.5" y1="70" x2="1462.5" y2="78.5" stroke="#dcdcdc" stroke-width="1.2" />
<line x1="1489.7" y1="70" x2="1489.7" y2="78.5" stroke="#dcdcdc" stroke-width="1.2" />
<line x1="1465" y1="74.4" x2="1487" y2="74.4" stroke="#dcdcdc" stroke-width="1.2" />
<path d="M1463.5 74.4l4-2.4v4.8zM1488.7 74.4l-4-2.4v4.8z" fill="#dcdcdc" />
<path d="M1462 80.2h28v5.8h-28z" fill="#f5c868" />
<line x1="1464.8" y1="80.2" x2="1464.8" y2="82.2" stroke="#5d5d5d" stroke-width="0.9" />
<line x1="1467.6" y1="80.2" x2="1467.6" y2="83" stroke="#5d5d5d" stroke-width="0.9" />
<line x1="1470.4" y1="80.2" x2="1470.4" y2="82.2" stroke="#5d5d5d" stroke-width="0.9" />
<line x1="1473.2" y1="80.2" x2="1473.2" y2="83" stroke="#5d5d5d" stroke-width="0.9" />
<line x1="1476.0" y1="80.2" x2="1476.0" y2="82.2" stroke="#5d5d5d" stroke-width="0.9" />
<line x1="1478.8" y1="80.2" x2="1478.8" y2="83" stroke="#5d5d5d" stroke-width="0.9" />
<line x1="1481.6" y1="80.2" x2="1481.6" y2="82.2" stroke="#5d5d5d" stroke-width="0.9" />
<line x1="1484.4" y1="80.2" x2="1484.4" y2="83" stroke="#5d5d5d" stroke-width="0.9" />
<line x1="1487.2" y1="80.2" x2="1487.2" y2="82.2" stroke="#5d5d5d" stroke-width="0.9" />
<path d="M1473.1 115.1h5l-2.5 3z" fill="#f0f0f0"/>
<path d="M1514.5 67v11.5l2.6-2.5 2 4.5 1.8-.8-2-4.5h3.6z" fill="#f4f4f4" />
<path d="M1521.5 70.5h8.5v8h-8.5z" fill="#f4f4f4" />
<path d="M1523 72.5h1M1525 72.5h4M1523 74.8h1M1525 74.8h4M1523 77h1M1525 77h4" stroke="#3a70c0" stroke-width="0.9" fill="none" />
<path d="M1522 63l-3.5 4h2.5l-1.5 3.5 4.5-4.5h-2.5l2-3z" fill="#f8c866" />
<rect x="1515" y="87.5" width="14" height="14" fill="none" stroke="#40d8d0" stroke-width="1.2" stroke-dasharray="2 1.2"/>
<path d="M1520 89.5h7.5v7.5h-7.5z" fill="#62c0ea" />
<path d="M1517 92.5h7.5v7.5h-7.5z" fill="#62c0ea" />
<path d="M1517 92.5h7.5v7.5" stroke="#5d5d5d" stroke-width="0.8" fill="none" />
<path d="M1523.5 92v10.5l2.4-2.3 1.9 4.2 1.7-.7-1.9-4.2h3.4z" fill="#f8f8f8" />
<rect x="1516.7" y="111.6" width="10.8" height="15" fill="none" stroke="#dcdcdc" stroke-width="1.4"/>
<line x1="1518.5" y1="114.5" x2="1525.7" y2="114.5" stroke="#dcdcdc" stroke-width="1.6" />
<rect x="1518.3" y="117.3" width="1.9" height="1.9" fill="#dcdcdc"/>
<rect x="1521.2" y="117.3" width="1.9" height="1.9" fill="#dcdcdc"/>
<rect x="1524.1" y="117.3" width="1.9" height="1.9" fill="#dcdcdc"/>
<rect x="1518.3" y="120.2" width="1.9" height="1.9" fill="#dcdcdc"/>
<rect x="1521.2" y="120.2" width="1.9" height="1.9" fill="#dcdcdc"/>
<rect x="1524.1" y="120.2" width="1.9" height="1.9" fill="#dcdcdc"/>
<rect x="1518.3" y="123.1" width="1.9" height="1.9" fill="#dcdcdc"/>
<rect x="1521.2" y="123.1" width="1.9" height="1.9" fill="#dcdcdc"/>
<rect x="1524.1" y="123.1" width="1.9" height="1.9" fill="#dcdcdc"/>
<path d="M1551 65h21.8v25h-21.8z" fill="#e2b070" />
<path d="M1557 65.5v-2h3.5q1.5-2.5 3 0h3.5v2z" fill="#f4f4f4" />
<path d="M1559 72h13l5 5v16.8h-18z" fill="#dcdcdc" />
<path d="M1572 72v5h5z" fill="#f8f8f8" />
<path d="M1559 93.8v-21.8h13" stroke="#5d5d5d" stroke-width="0.6" fill="none" />
<path d="M1562.1 115.1h5l-2.5 3z" fill="#f0f0f0"/>
<path d="M1594 63h12v14h-12z" fill="#d8d8d8" />
<path d="M1596 66h8M1596 69h5M1596 72h4M1596 75h4" stroke="#5d5d5d" stroke-width="1.1" fill="none" />
<path d="M1601 68.5l7.5 7.5M1610 68.5l-7.5 7.5" stroke="#f4f4f4" stroke-width="1.5" fill="none" />
<circle cx="1603" cy="77.3" r="1.6" stroke="#f4f4f4" stroke-width="1.1" fill="#5d5d5d" />
<circle cx="1608" cy="77.3" r="1.6" stroke="#f4f4f4" stroke-width="1.1" fill="#5d5d5d" />
<path d="M1595 87.5h6.5v12.5h-6.5z" fill="#c8c8c8" />
<path d="M1598.5 90.5h6l3.5 3.5v9h-9.5z" fill="#dcdcdc" />
<path d="M1598.5 103v-12.5h6" stroke="#5d5d5d" stroke-width="0.7" fill="none" />
<path d="M1604.5 90.5v3.5h3.5z" fill="#f4f4f4" />
<path d="M1632 66h14v10h18v14h-32z" fill="#dcdcdc" />
<path d="M1646.0 115.1h5l-2.5 3z" fill="#f0f0f0"/>
<path d="M57 16h12l4 4v8h-16z" fill="#ffffff" />
<path d="M69 16v4h4z" fill="#e0e0e0" />
<path d="M80 15h5l1.5 2h5v3h-11.5z" fill="#f4f2ee" />
<path d="M82.5 20.5h14l-3.5 8h-13z" fill="#e8e4de" />
<path d="M105 14h16v16h-16z" fill="#c4c4c4" />
<path d="M108.5 14h9v7h-9z" fill="#ffffff" />
<path d="M108.5 25.5h9v4.5h-9z" fill="#ffffff" />
<path d="M110 27h1.5v2h-1.5z" fill="#888" />
<path d="M129 14h16v16h-16z" fill="#c4c4c4" />
<path d="M132.5 14h9v7h-9z" fill="#ffffff" />
<path d="M132.5 25.5h9v4.5h-9z" fill="#ffffff" />
<path d="M134 27h1.5v2h-1.5z" fill="#888" />
<path d="M137 29l0.9 -2.7 4.95 -4.95 2.25 2.25 -4.95 4.95z" fill="#f8c866" />
<path d="M142.85 21.35l1.35 -1.35 2.25 2.25 -1.35 1.35z" fill="#f04040" />
<path d="M137 29l0.54 -1.62 1.08 1.08z" fill="#eee" />
<path d="M153.5 14h9.5v16h-9.5z" fill="#5c5c5c" />
<rect x="153.5" y="14" width="9.5" height="16" fill="none" stroke="#bbb" stroke-width="1"/>
<path d="M161 23h3l1 1h3.5v5.5h-7.5z" fill="#f5c868" />
<path d="M181.5 14h9.5v16h-9.5z" fill="#5c5c5c" />
<rect x="181.5" y="14" width="9.5" height="16" fill="none" stroke="#bbb" stroke-width="1"/>
<path d="M179 18.5h5v-2.5l4.5 4-4.5 4v-2.5h-5z" fill="#4aa8ea" />
<line x1="185" y1="28.5" x2="187.5" y2="28.5" stroke="#222" stroke-width="1" />
<path d="M204 14h11.5v5h-11.5z" fill="#ffffff" />
<path d="M201 19h17.5v7h-17.5z" fill="#f2f2f2" />
<path d="M204 24h11.5v6h-11.5z" fill="#ffffff" />
<path d="M205.2 25.2h9v4h-9z" fill="#6cc4e0" />
<path d="M225.5 21.5l6-4v2.5q6-.5 9.5 4-4-2-9.5-1.5v2.5z" fill="#b4b4b4" />
<path d="M248.3 20.0h5l-2.5 3z" fill="#dedede"/>
<path d="M276.5 21.5l-6-4v2.5q-6-.5-9.5 4 4-2 9.5-1.5v2.5z" fill="#b4b4b4" />
<path d="M284.0 20.0h5l-2.5 3z" fill="#dedede"/>
<path d="M297 18h8v1.3h-8z" fill="#f4f4f4" />
<path d="M297.0 20.5h8l-4.0 4z" fill="#f4f4f4"/>
<path d="M1302 18l4.2 3.7-4.2 3.7z" fill="#f8f8f8" />
<path d="M1496 20.5l1.5-4.5h3l1.5 4.5v9h-6z" fill="#f4f4f4" stroke="#333" stroke-width=".9"/>
<rect x="1496" y="25.0" width="6" height="4.5" fill="#fff" stroke="#333" stroke-width=".7"/>
<path d="M1504.5 20.5l1.5-4.5h3l1.5 4.5v9h-6z" fill="#f4f4f4" stroke="#333" stroke-width=".9"/>
<rect x="1504.5" y="25.0" width="6" height="4.5" fill="#fff" stroke="#333" stroke-width=".7"/>
<rect x="1501.3" y="19.0" width="3.4" height="3" fill="#333"/>
<path d="M1527 14.5c-3 0-4 2.5-4 5 0 2.500 1.200 4.500 2.200 5.500l-.4 1.800c-2.500.6-5 1.700-5.500 3.200h15.400c-.5-1.500-3-2.600-5.500-3.200l-.4-1.800c1-1 2.200-3 2.200-5.500 0-2.500-1-5-4-5z" fill="#f2f2f2" stroke="#333" stroke-width=".9"/>
<path d="M1624.5 20.7h6l-3.0 3.2z" fill="#f0f0f0"/>
<path d="M1641.500 15.500l3 .8 2.500 9h8l1.800-6.300h-11" fill="none" stroke="#333" stroke-width="2.600" stroke-linejoin="round"/><path d="M1641.500 15.500l3 .8 2.500 9h8l1.800-6.300h-11" fill="none" stroke="#f2f2f2" stroke-width="1.300"/>
<circle cx="1648.2" cy="28" r="1.4" stroke="#333" stroke-width="0.8" fill="#f2f2f2" />
<circle cx="1654.2" cy="28" r="1.4" stroke="#333" stroke-width="0.8" fill="#f2f2f2" />
<path d="M1673 15.500l6.500 11h-13z" fill="none" stroke="#333" stroke-width="3.400" stroke-linejoin="round"/><path d="M1673 15.500l6.500 11h-13z" fill="none" stroke="#f2f2f2" stroke-width="1.800" stroke-linejoin="round"/>
<circle cx="1673" cy="15.5" r="1.9" stroke="#333" stroke-width="0.8" fill="#f2f2f2" />
<circle cx="1666.5" cy="26.5" r="1.9" stroke="#333" stroke-width="0.8" fill="#f2f2f2" />
<circle cx="1679.5" cy="26.5" r="1.9" stroke="#333" stroke-width="0.8" fill="#f2f2f2" />
<path d="M1685.8 20.7h6l-3.0 3.2z" fill="#f0f0f0"/>
<circle cx="1718.9" cy="21.8" r="7.3" stroke="#2a2a2a" stroke-width="1.2" fill="#f4f4f4" />
<path d="M1733.5 20.7h6l-3.0 3.2z" fill="#f0f0f0"/>
<rect x="1700.5" y="11" width="1" height="22" fill="#a8a8a8"/></svg>
<span class="t" style="left:700.00px;top:9.84px;font-size:12px;line-height:16px;color:#151110;font-family:'Liberation Sans',sans-serif;letter-spacing:-0.131px;">Autodesk AutoCAD 2019</span>
<span class="t" style="left:848.00px;top:9.84px;font-size:12px;line-height:16px;color:#151110;font-family:'Liberation Sans',sans-serif;letter-spacing:-0.227px;">A4106.dwg</span>
<span class="t" style="left:11.30px;top:2.85px;font-size:36.5px;line-height:47px;color:transparent;font-family:'Liberation Sans',sans-serif;font-weight:bold;letter-spacing:-1.054px;transform:scaleX(0.9484);transform-origin:0 50%;background:radial-gradient(circle,#4a0a06 38%,rgba(74,10,6,0) 46%) 0 0/2.2px 2.2px,linear-gradient(100deg,#a01410 0%,#ff1c1c 45%,#ff1c1c 70%,#c01612 100%);-webkit-background-clip:text;background-clip:text;">A</span>
<span class="t" style="left:1315.00px;top:13.84px;font-size:12px;line-height:16px;color:#cacaca;font-family:'Liberation Sans',sans-serif;font-style:italic;letter-spacing:-0.230px;transform:scaleX(0.9130);transform-origin:0 50%;">Type a keyword or phrase</span>
<span class="t" style="left:1540.20px;top:14.67px;font-size:12.5px;line-height:16px;color:#f4f8f8;font-family:'Liberation Sans',sans-serif;letter-spacing:-0.222px;transform:scaleX(0.9369);transform-origin:0 50%;">Sign In</span>
<span class="t" style="left:62.00px;top:36.84px;font-size:12px;line-height:16px;color:#f2f2f2;font-family:'Liberation Sans',sans-serif;letter-spacing:0.248px;">Home</span>
<span class="t" style="left:115.00px;top:36.84px;font-size:12px;line-height:16px;color:#f2f2f2;font-family:'Liberation Sans',sans-serif;letter-spacing:-0.168px;">Insert</span>
<span class="t" style="left:164.00px;top:36.84px;font-size:12px;line-height:16px;color:#f2f2f2;font-family:'Liberation Sans',sans-serif;letter-spacing:0.120px;">Annotate</span>
<span class="t" style="left:233.00px;top:36.84px;font-size:12px;line-height:16px;color:#f2f2f2;font-family:'Liberation Sans',sans-serif;letter-spacing:-0.101px;">Parametric</span>
<span class="t" style="left:310.00px;top:36.84px;font-size:12px;line-height:16px;color:#f2f2f2;font-family:'Liberation Sans',sans-serif;letter-spacing:-0.198px;">View</span>
<span class="t" style="left:355.00px;top:36.84px;font-size:12px;line-height:16px;color:#f2f2f2;font-family:'Liberation Sans',sans-serif;letter-spacing:-0.060px;">Manage</span>
<span class="t" style="left:418.00px;top:36.84px;font-size:12px;line-height:16px;color:#f2f2f2;font-family:'Liberation Sans',sans-serif;letter-spacing:0.330px;">Output</span>
<span class="t" style="left:476.00px;top:36.84px;font-size:12px;line-height:16px;color:#f2f2f2;font-family:'Liberation Sans',sans-serif;letter-spacing:0.188px;">Add-ins</span>
<span class="t" style="left:538.00px;top:36.84px;font-size:12px;line-height:16px;color:#f2f2f2;font-family:'Liberation Sans',sans-serif;letter-spacing:-0.033px;">Collaborate</span>
<span class="t" style="left:619.00px;top:36.84px;font-size:12px;line-height:16px;color:#f2f2f2;font-family:'Liberation Sans',sans-serif;letter-spacing:-0.229px;transform:scaleX(0.9651);transform-origin:0 50%;">Express Tools</span>
<span class="t" style="left:708.00px;top:36.84px;font-size:12px;line-height:16px;color:#f2f2f2;font-family:'Liberation Sans',sans-serif;letter-spacing:-0.157px;">Featured Apps</span>
<span class="t" style="left:804.00px;top:36.84px;font-size:12px;line-height:16px;color:#f2f2f2;font-family:'Liberation Sans',sans-serif;letter-spacing:-0.004px;">Layout</span>
<span class="t" style="left:100.00px;top:134.84px;font-size:12px;line-height:16px;color:#f2f2f2;font-family:'Liberation Sans',sans-serif;letter-spacing:-0.250px;">Draw</span>
<span class="t" style="left:332.40px;top:134.84px;font-size:12px;line-height:16px;color:#f2f2f2;font-family:'Liberation Sans',sans-serif;letter-spacing:0.326px;">Modify</span>
<span class="t" style="left:540.60px;top:134.84px;font-size:12px;line-height:16px;color:#f2f2f2;font-family:'Liberation Sans',sans-serif;letter-spacing:0.182px;">Annotation</span>
<span class="t" style="left:785.00px;top:134.84px;font-size:12px;line-height:16px;color:#f2f2f2;font-family:'Liberation Sans',sans-serif;letter-spacing:-0.240px;transform:scaleX(0.9545);transform-origin:0 50%;">Layers</span>
<span class="t" style="left:1004.50px;top:134.84px;font-size:12px;line-height:16px;color:#f2f2f2;font-family:'Liberation Sans',sans-serif;letter-spacing:-0.149px;">Block</span>
<span class="t" style="left:1198.00px;top:134.84px;font-size:12px;line-height:16px;color:#f2f2f2;font-family:'Liberation Sans',sans-serif;letter-spacing:-0.069px;">Properties</span>
<span class="t" style="left:1379.40px;top:134.84px;font-size:12px;line-height:16px;color:#f2f2f2;font-family:'Liberation Sans',sans-serif;letter-spacing:-0.291px;">Groups</span>
<span class="t" style="left:1461.80px;top:134.84px;font-size:12px;line-height:16px;color:#f2f2f2;font-family:'Liberation Sans',sans-serif;letter-spacing:-0.052px;">Utilities</span>
<span class="t" style="left:1551.40px;top:134.84px;font-size:12px;line-height:16px;color:#f2f2f2;font-family:'Liberation Sans',sans-serif;letter-spacing:0.016px;">Clipboard</span>
<span class="t" style="left:1622.10px;top:134.84px;font-size:12px;line-height:16px;color:#f2f2f2;font-family:'Liberation Sans',sans-serif;letter-spacing:-0.223px;">View</span>
<span class="t" style="left:19.30px;top:96.84px;font-size:12px;line-height:16px;color:#f2f2f2;font-family:'Liberation Sans',sans-serif;letter-spacing:-0.171px;">Line</span>
<span class="t" style="left:52.50px;top:96.84px;font-size:12px;line-height:16px;color:#f2f2f2;font-family:'Liberation Sans',sans-serif;letter-spacing:-0.040px;">Polyline</span>
<span class="t" style="left:108.50px;top:96.84px;font-size:12px;line-height:16px;color:#f2f2f2;font-family:'Liberation Sans',sans-serif;letter-spacing:-0.178px;">Circle</span>
<span class="t" style="left:160.50px;top:96.84px;font-size:12px;line-height:16px;color:#f2f2f2;font-family:'Liberation Sans',sans-serif;letter-spacing:-0.233px;">Arc</span>
<span class="t" style="left:261.30px;top:62.84px;font-size:12px;line-height:16px;color:#f2f2f2;font-family:'Liberation Sans',sans-serif;letter-spacing:0.115px;">Move</span>
<span class="t" style="left:261.30px;top:86.84px;font-size:12px;line-height:16px;color:#f2f2f2;font-family:'Liberation Sans',sans-serif;letter-spacing:-0.128px;">Copy</span>
<span class="t" style="left:261.30px;top:110.84px;font-size:12px;line-height:16px;color:#f2f2f2;font-family:'Liberation Sans',sans-serif;letter-spacing:-0.273px;">Stretch</span>
<span class="t" style="left:333.40px;top:62.84px;font-size:12px;line-height:16px;color:#f2f2f2;font-family:'Liberation Sans',sans-serif;letter-spacing:-0.242px;">Rotate</span>
<span class="t" style="left:333.40px;top:86.84px;font-size:12px;line-height:16px;color:#f2f2f2;font-family:'Liberation Sans',sans-serif;letter-spacing:0.180px;">Mirror</span>
<span class="t" style="left:333.40px;top:110.84px;font-size:12px;line-height:16px;color:#f2f2f2;font-family:'Liberation Sans',sans-serif;letter-spacing:-0.240px;transform:scaleX(0.9335);transform-origin:0 50%;">Scale</span>
<span class="t" style="left:402.60px;top:62.84px;font-size:12px;line-height:16px;color:#f2f2f2;font-family:'Liberation Sans',sans-serif;letter-spacing:-0.411px;">Trim</span>
<span class="t" style="left:402.60px;top:86.84px;font-size:12px;line-height:16px;color:#f2f2f2;font-family:'Liberation Sans',sans-serif;letter-spacing:-0.156px;">Fillet</span>
<span class="t" style="left:402.60px;top:110.84px;font-size:12px;line-height:16px;color:#f2f2f2;font-family:'Liberation Sans',sans-serif;letter-spacing:-0.254px;">Array</span>
<span class="t" style="left:493.60px;top:52.99px;font-size:39px;line-height:51px;color:#d9d9d9;font-family:'Liberation Sans',sans-serif;letter-spacing:0.186px;-webkit-text-stroke:.7px #d9d9d9;">A</span>
<span class="t" style="left:496.20px;top:96.84px;font-size:12px;line-height:16px;color:#f2f2f2;font-family:'Liberation Sans',sans-serif;letter-spacing:-0.327px;">Text</span>
<span class="t" style="left:531.40px;top:96.84px;font-size:12px;line-height:16px;color:#f2f2f2;font-family:'Liberation Sans',sans-serif;letter-spacing:-0.032px;">Dimension</span>
<span class="t" style="left:617.50px;top:62.84px;font-size:12px;line-height:16px;color:#f2f2f2;font-family:'Liberation Sans',sans-serif;letter-spacing:-0.309px;">Linear</span>
<span class="t" style="left:617.50px;top:86.84px;font-size:12px;line-height:16px;color:#f2f2f2;font-family:'Liberation Sans',sans-serif;letter-spacing:-0.249px;transform:scaleX(0.9591);transform-origin:0 50%;">Leader</span>
<span class="t" style="left:617.50px;top:110.84px;font-size:12px;line-height:16px;color:#f2f2f2;font-family:'Liberation Sans',sans-serif;letter-spacing:-0.229px;transform:scaleX(0.9623);transform-origin:0 50%;">Table</span>
<span class="t" style="left:690.20px;top:96.84px;font-size:12px;line-height:16px;color:#f2f2f2;font-family:'Liberation Sans',sans-serif;letter-spacing:-0.383px;">Layer</span>
<span class="t" style="left:677.60px;top:111.84px;font-size:12px;line-height:16px;color:#f2f2f2;font-family:'Liberation Sans',sans-serif;letter-spacing:-0.229px;">Properties</span>
<span class="t" style="left:835.00px;top:62.84px;font-size:12px;line-height:16px;color:#f2f2f2;font-family:'Liberation Sans',sans-serif;letter-spacing:-0.288px;transform:scaleX(0.9170);transform-origin:0 50%;">SOLID</span>
<span class="t" style="left:855.40px;top:86.84px;font-size:12px;line-height:16px;color:#f2f2f2;font-family:'Liberation Sans',sans-serif;letter-spacing:-0.099px;">Make Current</span>
<span class="t" style="left:855.40px;top:110.84px;font-size:12px;line-height:16px;color:#f2f2f2;font-family:'Liberation Sans',sans-serif;letter-spacing:-0.129px;">Match Layer</span>
<span class="t" style="left:952.50px;top:96.34px;font-size:12px;line-height:16px;color:#f2f2f2;font-family:'Liberation Sans',sans-serif;letter-spacing:-0.285px;">Insert</span>
<span class="t" style="left:1011.20px;top:62.84px;font-size:12px;line-height:16px;color:#f2f2f2;font-family:'Liberation Sans',sans-serif;letter-spacing:-0.353px;">Create</span>
<span class="t" style="left:1011.20px;top:86.84px;font-size:12px;line-height:16px;color:#f2f2f2;font-family:'Liberation Sans',sans-serif;letter-spacing:-0.194px;">Edit</span>
<span class="t" style="left:1011.20px;top:110.84px;font-size:12px;line-height:16px;color:#f2f2f2;font-family:'Liberation Sans',sans-serif;letter-spacing:0.044px;">Edit Attributes</span>
<span class="t" style="left:1121.40px;top:96.84px;font-size:12px;line-height:16px;color:#f2f2f2;font-family:'Liberation Sans',sans-serif;letter-spacing:0.105px;">Match</span>
<span class="t" style="left:1111.30px;top:111.84px;font-size:12px;line-height:16px;color:#f2f2f2;font-family:'Liberation Sans',sans-serif;letter-spacing:-0.219px;">Properties</span>
<span class="t" style="left:1227.70px;top:62.84px;font-size:12px;line-height:16px;color:#f2f2f2;font-family:'Liberation Sans',sans-serif;letter-spacing:-0.252px;transform:scaleX(0.9560);transform-origin:0 50%;">ByLayer</span>
<span class="t" style="left:1258.10px;top:85.84px;font-size:12px;line-height:16px;color:#f2f2f2;font-family:'Liberation Sans',sans-serif;letter-spacing:-0.431px;">ByLayer</span>
<span class="t" style="left:1258.10px;top:109.84px;font-size:12px;line-height:16px;color:#f2f2f2;font-family:'Liberation Sans',sans-serif;letter-spacing:-0.431px;">ByLayer</span>
<span class="t" style="left:1376.50px;top:96.84px;font-size:12px;line-height:16px;color:#f2f2f2;font-family:'Liberation Sans',sans-serif;letter-spacing:-0.170px;">Group</span>
<span class="t" style="left:1453.50px;top:96.84px;font-size:12px;line-height:16px;color:#f2f2f2;font-family:'Liberation Sans',sans-serif;letter-spacing:-0.269px;">Measure</span>
<span class="t" style="left:1550.40px;top:96.84px;font-size:12px;line-height:16px;color:#f2f2f2;font-family:'Liberation Sans',sans-serif;letter-spacing:-0.245px;transform:scaleX(0.9370);transform-origin:0 50%;">Paste</span>
<span class="t" style="left:1636.40px;top:96.84px;font-size:12px;line-height:16px;color:#f2f2f2;font-family:'Liberation Sans',sans-serif;letter-spacing:-0.274px;transform:scaleX(0.9102);transform-origin:0 50%;">Base</span>
<span class="t" style="left:1715.40px;top:13.97px;font-size:12.5px;line-height:16px;color:#2840c8;font-family:'Liberation Sans',sans-serif;font-weight:bold;">?</span>
<svg width="1908" height="1024" viewBox="0 0 1908 1024"><defs><linearGradient id="tabA" x1="0" y1="0" x2="0" y2="1"><stop offset="0" stop-color="#7a7a7a"/><stop offset="1" stop-color="#5e5e5e"/></linearGradient><linearGradient id="tabI" x1="0" y1="0" x2="0" y2="1"><stop offset="0" stop-color="#5c5c5c"/><stop offset="1" stop-color="#555555"/></linearGradient></defs>
<path d="M23 179.2C29.5 179.2 28 157 35 157L145 157Q150.5 157 150.5 163L150.5 173.2Q150.5 179.2 146 179.2z" fill="url(#tabI)"/>
<path d="M149.5 179.2C156.0 179.2 154.5 157 161.5 157L268.0 157Q273.5 157 273.5 163L273.5 173.2Q273.5 179.2 269.0 179.2z" fill="url(#tabI)"/>
<path d="M255.70000000000002 165.6l5.2 5.2M260.90000000000003 165.6l-5.2 5.2" stroke="#2e2e2e" stroke-width="1.6"/>
<path d="M272.5 179.2C279.0 179.2 277.5 157 284.5 157L391.0 157Q396.5 157 396.5 163L396.5 173.2Q396.5 179.2 392.0 179.2z" fill="url(#tabI)"/>
<path d="M378.7 165.6l5.2 5.2M383.90000000000003 165.6l-5.2 5.2" stroke="#2e2e2e" stroke-width="1.6"/>
<path d="M395.5 179.2C402.0 179.2 400.5 157 407.5 157L514.0 157Q519.5 157 519.5 163L519.5 173.2Q519.5 179.2 515.0 179.2z" fill="url(#tabI)"/>
<path d="M501.7 165.6l5.2 5.2M506.90000000000003 165.6l-5.2 5.2" stroke="#2e2e2e" stroke-width="1.6"/>
<path d="M518.5 179.2C525.0 179.2 523.5 157 530.5 157L637.0 157Q642.5 157 642.5 163L642.5 173.2Q642.5 179.2 638.0 179.2z" fill="url(#tabI)"/>
<path d="M624.6999999999999 165.6l5.2 5.2M629.9 165.6l-5.2 5.2" stroke="#2e2e2e" stroke-width="1.6"/>
<path d="M641.5 179.2C648.0 179.2 646.5 157 653.5 157L760.0 157Q765.5 157 765.5 163L765.5 173.2Q765.5 179.2 761.0 179.2z" fill="url(#tabI)"/>
<path d="M747.6999999999999 165.6l5.2 5.2M752.9 165.6l-5.2 5.2" stroke="#2e2e2e" stroke-width="1.6"/>
<path d="M764.5 179.2C771.0 179.2 769.5 157 776.5 157L883.0 157Q888.5 157 888.5 163L888.5 173.2Q888.5 179.2 884.0 179.2z" fill="url(#tabI)"/>
<path d="M870.6999999999999 165.6l5.2 5.2M875.9 165.6l-5.2 5.2" stroke="#2e2e2e" stroke-width="1.6"/>
<path d="M887.5 179.2C894.0 179.2 892.5 157 899.5 157L1006.0 157Q1011.5 157 1011.5 163L1011.5 173.2Q1011.5 179.2 1007.0 179.2z" fill="url(#tabI)"/>
<path d="M993.6999999999999 165.6l5.2 5.2M998.9 165.6l-5.2 5.2" stroke="#2e2e2e" stroke-width="1.6"/>
<path d="M1010.5 179.2C1017.0 179.2 1015.5 157 1022.5 157L1129.0 157Q1134.5 157 1134.5 163L1134.5 173.2Q1134.5 179.2 1130.0 179.2z" fill="url(#tabI)"/>
<path d="M1116.7 165.6l5.2 5.2M1121.8999999999999 165.6l-5.2 5.2" stroke="#2e2e2e" stroke-width="1.6"/>
<path d="M1133.5 179.2C1140.0 179.2 1138.5 157 1145.5 157L1252.0 157Q1257.5 157 1257.5 163L1257.5 173.2Q1257.5 179.2 1253.0 179.2z" fill="url(#tabI)"/>
<path d="M1239.7 165.6l5.2 5.2M1244.8999999999999 165.6l-5.2 5.2" stroke="#2e2e2e" stroke-width="1.6"/>
<path d="M1256.5 179.2C1263.0 179.2 1261.5 157 1268.5 157L1375.0 157Q1380.5 157 1380.5 163L1380.5 173.2Q1380.5 179.2 1376.0 179.2z" fill="url(#tabI)"/>
<path d="M1362.7 165.6l5.2 5.2M1367.8999999999999 165.6l-5.2 5.2" stroke="#2e2e2e" stroke-width="1.6"/>
<path d="M1379.5 179.2C1386.0 179.2 1384.5 157 1391.5 157L1498.0 157Q1503.5 157 1503.5 163L1503.5 173.2Q1503.5 179.2 1499.0 179.2z" fill="url(#tabI)"/>
<path d="M1485.7 165.6l5.2 5.2M1490.8999999999999 165.6l-5.2 5.2" stroke="#2e2e2e" stroke-width="1.6"/>
<path d="M1502.5 179.2C1509.0 179.2 1507.5 157 1514.5 157L1621.0 157Q1626.5 157 1626.5 163L1626.5 173.2Q1626.5 179.2 1622.0 179.2z" fill="url(#tabI)"/>
<path d="M1608.7 165.6l5.2 5.2M1613.8999999999999 165.6l-5.2 5.2" stroke="#2e2e2e" stroke-width="1.6"/>
<path d="M1622.5 180C1630.5 179 1629.5 157 1637.5 157L1743.0 157C1752.0 157 1751.0 179 1762.0 180z" fill="url(#tabA)"/>
<path d="M1731.7 165.6l5.2 5.2M1736.8999999999999 165.6l-5.2 5.2" stroke="#484848" stroke-width="1.6"/>
<path d="M1757.5 161.5h12c8 0 10 10 10.500 14.500h-12c-7 0-9.500-9-10.500-14.500z" fill="#575757"/>
<path d="M1764.5 169h9M1769 164.500v9" stroke="#f0f0f0" stroke-width="1.600"/>
<path d="M1890 162.500l3 3 3-3M1890 167.500l3 3 3-3" stroke="#d4d4d4" stroke-width="1.600" fill="none"/></svg>
<span class="t" style="left:39.00px;top:160.84px;font-size:12px;line-height:16px;color:#d4d4d4;font-family:'Liberation Sans',sans-serif;letter-spacing:-0.355px;">Start</span>
<span class="t" style="left:162.50px;top:160.84px;font-size:12px;line-height:16px;color:#d4d4d4;font-family:'Liberation Sans',sans-serif;letter-spacing:-0.459px;">A2305*</span>
<span class="t" style="left:285.50px;top:160.84px;font-size:12px;line-height:16px;color:#d4d4d4;font-family:'Liberation Sans',sans-serif;letter-spacing:-0.459px;">A3101*</span>
<span class="t" style="left:408.50px;top:160.84px;font-size:12px;line-height:16px;color:#d4d4d4;font-family:'Liberation Sans',sans-serif;letter-spacing:-0.459px;">A3102*</span>
<span class="t" style="left:531.50px;top:160.84px;font-size:12px;line-height:16px;color:#d4d4d4;font-family:'Liberation Sans',sans-serif;letter-spacing:-0.459px;">A3103*</span>
<span class="t" style="left:654.50px;top:160.84px;font-size:12px;line-height:16px;color:#d4d4d4;font-family:'Liberation Sans',sans-serif;letter-spacing:-0.459px;">A3201*</span>
<span class="t" style="left:777.50px;top:160.84px;font-size:12px;line-height:16px;color:#d4d4d4;font-family:'Liberation Sans',sans-serif;letter-spacing:-0.459px;">A3202*</span>
<span class="t" style="left:900.50px;top:160.84px;font-size:12px;line-height:16px;color:#d4d4d4;font-family:'Liberation Sans',sans-serif;letter-spacing:-0.459px;">A3203*</span>
<span class="t" style="left:1023.50px;top:160.84px;font-size:12px;line-height:16px;color:#d4d4d4;font-family:'Liberation Sans',sans-serif;letter-spacing:-0.459px;">A4101*</span>
<span class="t" style="left:1146.50px;top:160.84px;font-size:12px;line-height:16px;color:#d4d4d4;font-family:'Liberation Sans',sans-serif;letter-spacing:-0.459px;">A4102*</span>
<span class="t" style="left:1269.50px;top:160.84px;font-size:12px;line-height:16px;color:#d4d4d4;font-family:'Liberation Sans',sans-serif;letter-spacing:-0.459px;">A4103*</span>
<span class="t" style="left:1392.50px;top:160.84px;font-size:12px;line-height:16px;color:#d4d4d4;font-family:'Liberation Sans',sans-serif;letter-spacing:-0.459px;">A4104*</span>
<span class="t" style="left:1515.50px;top:160.84px;font-size:12px;line-height:16px;color:#d4d4d4;font-family:'Liberation Sans',sans-serif;letter-spacing:-0.459px;">A4105*</span>
<span class="t" style="left:1638.50px;top:160.84px;font-size:12px;line-height:16px;color:#ffffff;font-family:'Liberation Sans',sans-serif;letter-spacing:-0.486px;">A4106</span>
<div class="b paper" style="left:305px;top:344px;width:903px;height:637px;background:#fff;box-shadow:0 0 0 1px #7b7b7b,0 0 0 2px #7e7e7e,0 0 0 3px #818181,0 0 0 4px #858585,0 0 0 5px #888888,5px 3px 0 0 #7d7d7d"></div>
<svg class="dwg" width="1908" height="1024" viewBox="0 0 1908 1024" font-family="'Liberation Sans',sans-serif"><rect x="312.5" y="350.5" width="860" height="623" fill="none" stroke="#979797" stroke-width="1" stroke-dasharray="4 2"/>
<line x1="367.5" y1="361" x2="367.5" y2="661" stroke="#b0714c" stroke-width="1.1" stroke-dasharray="17 2.5 2 2.5"/>
<line x1="540.2" y1="361" x2="540.2" y2="661" stroke="#b0714c" stroke-width="1.1" stroke-dasharray="17 2.5 2 2.5"/>
<line x1="712.5" y1="361" x2="712.5" y2="661" stroke="#8e3d3d" stroke-width="1.2" stroke-dasharray="17 2.5 2 2.5"/>
<line x1="459.8" y1="384" x2="459.8" y2="672" stroke="#303030" stroke-width="1.6" stroke-dasharray="4.5 1.3 1.3 1.3"/>
<line x1="459.8" y1="373" x2="459.8" y2="384" stroke="#ff2a2a" stroke-width="1.2" />
<polygon points="465.4,367.8 462.6,372.6 457.0,372.6 454.2,367.8 457.0,363.0 462.6,363.0" fill="#fff" stroke="#ff2a2a" stroke-width="1.2"/>
<line x1="454.40000000000003" y1="367.8" x2="465.2" y2="367.8" stroke="#ff2a2a" stroke-width="1" />
<text x="459.8" y="366.8" font-size="4.2" fill="#000" text-anchor="middle" font-weight="bold" >A</text>
<text x="459.8" y="371.6" font-size="3" fill="#00f0ff" text-anchor="middle" font-weight="bold"  stroke="#00f0ff" stroke-width=".32">14</text>
<line x1="593.6" y1="384" x2="593.6" y2="672" stroke="#303030" stroke-width="1.6" stroke-dasharray="4.5 1.3 1.3 1.3"/>
<line x1="593.6" y1="373" x2="593.6" y2="384" stroke="#ff2a2a" stroke-width="1.2" />
<polygon points="599.2,367.8 596.4,372.6 590.8,372.6 588.0,367.8 590.8,363.0 596.4,363.0" fill="#fff" stroke="#ff2a2a" stroke-width="1.2"/>
<line x1="588.2" y1="367.8" x2="599.0" y2="367.8" stroke="#ff2a2a" stroke-width="1" />
<text x="593.6" y="366.8" font-size="4.2" fill="#000" text-anchor="middle" font-weight="bold" >B</text>
<text x="593.6" y="371.6" font-size="3" fill="#00f0ff" text-anchor="middle" font-weight="bold"  stroke="#00f0ff" stroke-width=".32">14</text>
<line x1="312" y1="395.2" x2="352" y2="395.2" stroke="#ff2a2a" stroke-width="1.2" />
<path d="M335.2 392.2l3 3-3 3-3-3z" fill="#7a7a7a"/>
<text x="340" y="394.6" font-size="3.6" fill="#00f0ff" text-anchor="start" font-weight="bold"  stroke="#00f0ff" stroke-width=".32">+ 23877</text>
<line x1="335.2" y1="398" x2="335.2" y2="614.7" stroke="#7c7c7c" stroke-width="1" />
<text x="333.2" y="493" font-size="3.8" fill="#00f0ff" text-anchor="middle" font-weight="bold" transform="rotate(-90 333.2 493)"  stroke="#00f0ff" stroke-width=".32">31350</text>
<text x="333.2" y="602.5" font-size="3.8" fill="#00f0ff" text-anchor="middle" font-weight="bold" transform="rotate(-90 333.2 602.5)"  stroke="#00f0ff" stroke-width=".32">3150</text>
<line x1="334" y1="591.2" x2="340.5" y2="591.2" stroke="#303030" stroke-width="1" />
<line x1="334" y1="614.7" x2="340.5" y2="614.7" stroke="#303030" stroke-width="1" />
<line x1="361" y1="395.2" x2="450" y2="395.2" stroke="#b0714c" stroke-width="1.3" />
<line x1="408.3" y1="479.2" x2="477.5" y2="479.2" stroke="#8e3d3d" stroke-width="1.2" />
<line x1="559.2" y1="452.5" x2="610" y2="452.5" stroke="#8e3d3d" stroke-width="1.2" />
<line x1="361" y1="591.2" x2="750.8" y2="591.2" stroke="#b0714c" stroke-width="1.5" />
<line x1="380" y1="591.2" x2="450" y2="591.2" stroke="#8a5a40" stroke-width="1.6" />
<line x1="391.7" y1="395" x2="391.7" y2="653.3" stroke="#7c7c7c" stroke-width="1" />
<line x1="387.09999999999997" y1="395.2" x2="392.5" y2="395.2" stroke="#303030" stroke-width="0.9" />
<line x1="387.09999999999997" y1="402" x2="392.5" y2="402" stroke="#303030" stroke-width="0.9" />
<line x1="387.09999999999997" y1="417.7" x2="392.5" y2="417.7" stroke="#303030" stroke-width="0.9" />
<line x1="387.09999999999997" y1="427.2" x2="392.5" y2="427.2" stroke="#303030" stroke-width="0.9" />
<line x1="387.09999999999997" y1="444.2" x2="392.5" y2="444.2" stroke="#303030" stroke-width="0.9" />
<line x1="387.09999999999997" y1="446.7" x2="392.5" y2="446.7" stroke="#303030" stroke-width="0.9" />
<line x1="387.09999999999997" y1="559.5" x2="392.5" y2="559.5" stroke="#303030" stroke-width="0.9" />
<line x1="387.09999999999997" y1="580.3" x2="392.5" y2="580.3" stroke="#303030" stroke-width="0.9" />
<line x1="387.09999999999997" y1="591.2" x2="392.5" y2="591.2" stroke="#303030" stroke-width="0.9" />
<line x1="387.09999999999997" y1="653.3" x2="392.5" y2="653.3" stroke="#303030" stroke-width="0.9" />
<text x="389.7" y="398.5" font-size="3.8" fill="#00f0ff" text-anchor="middle" font-weight="bold" transform="rotate(-90 389.7 398.5)"  stroke="#00f0ff" stroke-width=".32">75</text>
<text x="389.7" y="409.5" font-size="3.8" fill="#00f0ff" text-anchor="middle" font-weight="bold" transform="rotate(-90 389.7 409.5)"  stroke="#00f0ff" stroke-width=".32">250</text>
<text x="389.7" y="422.5" font-size="3.8" fill="#00f0ff" text-anchor="middle" font-weight="bold" transform="rotate(-90 389.7 422.5)"  stroke="#00f0ff" stroke-width=".32">1050</text>
<text x="389.7" y="436" font-size="3.8" fill="#00f0ff" text-anchor="middle" font-weight="bold" transform="rotate(-90 389.7 436)"  stroke="#00f0ff" stroke-width=".32">75</text>
<text x="389.7" y="445.5" font-size="3.8" fill="#00f0ff" text-anchor="middle" font-weight="bold" transform="rotate(-90 389.7 445.5)"  stroke="#00f0ff" stroke-width=".32">50</text>
<text x="389.7" y="498" font-size="3.8" fill="#00f0ff" text-anchor="middle" font-weight="bold" transform="rotate(-90 389.7 498)"  stroke="#00f0ff" stroke-width=".32">4650</text>
<text x="389.7" y="570.5" font-size="3.8" fill="#00f0ff" text-anchor="middle" font-weight="bold" transform="rotate(-90 389.7 570.5)"  stroke="#00f0ff" stroke-width=".32">750</text>
<text x="389.7" y="616.5" font-size="3.8" fill="#00f0ff" text-anchor="middle" font-weight="bold" transform="rotate(-90 389.7 616.5)"  stroke="#00f0ff" stroke-width=".32">4850</text>
<line x1="477" y1="395" x2="477" y2="653.3" stroke="#7c7c7c" stroke-width="1" />
<line x1="472.4" y1="395.2" x2="477.8" y2="395.2" stroke="#303030" stroke-width="0.9" />
<line x1="472.4" y1="417.7" x2="477.8" y2="417.7" stroke="#303030" stroke-width="0.9" />
<line x1="472.4" y1="455.8" x2="477.8" y2="455.8" stroke="#303030" stroke-width="0.9" />
<line x1="472.4" y1="479.2" x2="477.8" y2="479.2" stroke="#303030" stroke-width="0.9" />
<line x1="472.4" y1="591.2" x2="477.8" y2="591.2" stroke="#303030" stroke-width="0.9" />
<line x1="472.4" y1="653.3" x2="477.8" y2="653.3" stroke="#303030" stroke-width="0.9" />
<text x="475" y="406" font-size="3.8" fill="#00f0ff" text-anchor="middle" font-weight="bold" transform="rotate(-90 475 406)"  stroke="#00f0ff" stroke-width=".32">1300</text>
<text x="475" y="436" font-size="3.8" fill="#00f0ff" text-anchor="middle" font-weight="bold" transform="rotate(-90 475 436)"  stroke="#00f0ff" stroke-width=".32">750</text>
<text x="475" y="467" font-size="3.8" fill="#00f0ff" text-anchor="middle" font-weight="bold" transform="rotate(-90 475 467)"  stroke="#00f0ff" stroke-width=".32">1250</text>
<text x="475" y="535" font-size="3.8" fill="#00f0ff" text-anchor="middle" font-weight="bold" transform="rotate(-90 475 535)"  stroke="#00f0ff" stroke-width=".32">3550</text>
<text x="475" y="622.5" font-size="3.8" fill="#00f0ff" text-anchor="middle" font-weight="bold" transform="rotate(-90 475 622.5)"  stroke="#00f0ff" stroke-width=".32">3050</text>
<line x1="468.8" y1="455.8" x2="468.8" y2="479.2" stroke="#7c7c7c" stroke-width="1" />
<line x1="464.7" y1="455.8" x2="469.6" y2="455.8" stroke="#303030" stroke-width="0.9" />
<line x1="464.7" y1="465.8" x2="469.6" y2="465.8" stroke="#303030" stroke-width="0.9" />
<line x1="464.7" y1="479.2" x2="469.6" y2="479.2" stroke="#303030" stroke-width="0.9" />
<text x="466.8" y="460.5" font-size="3.8" fill="#00f0ff" text-anchor="middle" font-weight="bold" transform="rotate(-90 466.8 460.5)"  stroke="#00f0ff" stroke-width=".32">200</text>
<text x="466.8" y="473.5" font-size="3.8" fill="#00f0ff" text-anchor="middle" font-weight="bold" transform="rotate(-90 466.8 473.5)"  stroke="#00f0ff" stroke-width=".32">45</text>
<line x1="559.2" y1="394.7" x2="559.2" y2="421.3" stroke="#7c7c7c" stroke-width="1" />
<line x1="554.6" y1="394.7" x2="560.0" y2="394.7" stroke="#303030" stroke-width="0.9" />
<line x1="554.6" y1="404.2" x2="560.0" y2="404.2" stroke="#303030" stroke-width="0.9" />
<line x1="554.6" y1="415.3" x2="560.0" y2="415.3" stroke="#303030" stroke-width="0.9" />
<line x1="554.6" y1="421.3" x2="560.0" y2="421.3" stroke="#303030" stroke-width="0.9" />
<text x="557.2" y="399" font-size="3.8" fill="#00f0ff" text-anchor="middle" font-weight="bold" transform="rotate(-90 557.2 399)"  stroke="#00f0ff" stroke-width=".32">40</text>
<text x="557.2" y="409.5" font-size="3.8" fill="#00f0ff" text-anchor="middle" font-weight="bold" transform="rotate(-90 557.2 409.5)"  stroke="#00f0ff" stroke-width=".32">125</text>
<text x="557.2" y="418.5" font-size="3.8" fill="#00f0ff" text-anchor="middle" font-weight="bold" transform="rotate(-90 557.2 418.5)"  stroke="#00f0ff" stroke-width=".32">75</text>
<line x1="605" y1="395" x2="605" y2="653.3" stroke="#7c7c7c" stroke-width="1" />
<line x1="600.4" y1="395.2" x2="605.8" y2="395.2" stroke="#303030" stroke-width="0.9" />
<line x1="600.4" y1="417.7" x2="605.8" y2="417.7" stroke="#303030" stroke-width="0.9" />
<line x1="600.4" y1="436.3" x2="605.8" y2="436.3" stroke="#303030" stroke-width="0.9" />
<line x1="600.4" y1="452.5" x2="605.8" y2="452.5" stroke="#303030" stroke-width="0.9" />
<line x1="600.4" y1="591.2" x2="605.8" y2="591.2" stroke="#303030" stroke-width="0.9" />
<line x1="600.4" y1="653.3" x2="605.8" y2="653.3" stroke="#303030" stroke-width="0.9" />
<text x="603" y="406" font-size="3.8" fill="#00f0ff" text-anchor="middle" font-weight="bold" transform="rotate(-90 603 406)"  stroke="#00f0ff" stroke-width=".32">1300</text>
<text x="603" y="427" font-size="3.8" fill="#00f0ff" text-anchor="middle" font-weight="bold" transform="rotate(-90 603 427)"  stroke="#00f0ff" stroke-width=".32">750</text>
<text x="603" y="444.5" font-size="3.8" fill="#00f0ff" text-anchor="middle" font-weight="bold" transform="rotate(-90 603 444.5)"  stroke="#00f0ff" stroke-width=".32">125</text>
<text x="603" y="521.7" font-size="3.8" fill="#00f0ff" text-anchor="middle" font-weight="bold" transform="rotate(-90 603 521.7)"  stroke="#00f0ff" stroke-width=".32">4050</text>
<text x="603" y="622.5" font-size="3.8" fill="#00f0ff" text-anchor="middle" font-weight="bold" transform="rotate(-90 603 622.5)"  stroke="#00f0ff" stroke-width=".32">3050</text>
<line x1="598.7" y1="436.3" x2="598.7" y2="446.7" stroke="#7c7c7c" stroke-width="1" />
<line x1="595.1" y1="436.3" x2="599.5" y2="436.3" stroke="#303030" stroke-width="0.9" />
<line x1="595.1" y1="446.7" x2="599.5" y2="446.7" stroke="#303030" stroke-width="0.9" />
<text x="596.7" y="441.5" font-size="3.8" fill="#00f0ff" text-anchor="middle" font-weight="bold" transform="rotate(-90 596.7 441.5)"  stroke="#00f0ff" stroke-width=".32">75</text>
<line x1="358.8" y1="520.3" x2="721.3" y2="520.3" stroke="#7c7c7c" stroke-width="1" />
<line x1="358.8" y1="516.0999999999999" x2="358.8" y2="521.5" stroke="#3a3a3a" stroke-width="0.85" />
<line x1="367.5" y1="516.0999999999999" x2="367.5" y2="521.5" stroke="#3a3a3a" stroke-width="0.85" />
<line x1="376.7" y1="516.0999999999999" x2="376.7" y2="521.5" stroke="#3a3a3a" stroke-width="0.85" />
<line x1="406.7" y1="516.0999999999999" x2="406.7" y2="521.5" stroke="#3a3a3a" stroke-width="0.85" />
<line x1="501.7" y1="516.0999999999999" x2="501.7" y2="521.5" stroke="#3a3a3a" stroke-width="0.85" />
<line x1="531.3" y1="516.0999999999999" x2="531.3" y2="521.5" stroke="#3a3a3a" stroke-width="0.85" />
<line x1="540.2" y1="516.0999999999999" x2="540.2" y2="521.5" stroke="#3a3a3a" stroke-width="0.85" />
<line x1="548.8" y1="516.0999999999999" x2="548.8" y2="521.5" stroke="#3a3a3a" stroke-width="0.85" />
<line x1="557.5" y1="516.0999999999999" x2="557.5" y2="521.5" stroke="#3a3a3a" stroke-width="0.85" />
<line x1="634.7" y1="516.0999999999999" x2="634.7" y2="521.5" stroke="#3a3a3a" stroke-width="0.85" />
<line x1="695.2" y1="516.0999999999999" x2="695.2" y2="521.5" stroke="#3a3a3a" stroke-width="0.85" />
<line x1="703.8" y1="516.0999999999999" x2="703.8" y2="521.5" stroke="#3a3a3a" stroke-width="0.85" />
<line x1="712.5" y1="516.0999999999999" x2="712.5" y2="521.5" stroke="#3a3a3a" stroke-width="0.85" />
<line x1="721.3" y1="516.0999999999999" x2="721.3" y2="521.5" stroke="#3a3a3a" stroke-width="0.85" />
<text x="363.3" y="518.8" font-size="3.8" fill="#00f0ff" text-anchor="middle" font-weight="bold"  stroke="#00f0ff" stroke-width=".32">400</text>
<text x="391.5" y="518.8" font-size="3.8" fill="#00f0ff" text-anchor="middle" font-weight="bold"  stroke="#00f0ff" stroke-width=".32">1200</text>
<text x="454" y="518.8" font-size="3.8" fill="#00f0ff" text-anchor="middle" font-weight="bold"  stroke="#00f0ff" stroke-width=".32">3800</text>
<text x="516" y="518.8" font-size="3.8" fill="#00f0ff" text-anchor="middle" font-weight="bold"  stroke="#00f0ff" stroke-width=".32">1200</text>
<text x="536" y="518.8" font-size="3.8" fill="#00f0ff" text-anchor="middle" font-weight="bold"  stroke="#00f0ff" stroke-width=".32">400</text>
<text x="553" y="518.8" font-size="3.8" fill="#00f0ff" text-anchor="middle" font-weight="bold"  stroke="#00f0ff" stroke-width=".32">400</text>
<text x="587" y="518.8" font-size="3.8" fill="#00f0ff" text-anchor="middle" font-weight="bold"  stroke="#00f0ff" stroke-width=".32">3075</text>
<text x="626" y="518.8" font-size="3.8" fill="#00f0ff" text-anchor="middle" font-weight="bold"  stroke="#00f0ff" stroke-width=".32">800</text>
<text x="665" y="518.8" font-size="3.8" fill="#00f0ff" text-anchor="middle" font-weight="bold"  stroke="#00f0ff" stroke-width=".32">3650</text>
<text x="699.5" y="518.8" font-size="3.8" fill="#00f0ff" text-anchor="middle" font-weight="bold"  stroke="#00f0ff" stroke-width=".32">400</text>
<text x="712.5" y="518.8" font-size="3.8" fill="#00f0ff" text-anchor="middle" font-weight="bold"  stroke="#00f0ff" stroke-width=".32">500</text>
<line x1="351.3" y1="665.3" x2="728.8" y2="665.3" stroke="#7c7c7c" stroke-width="1" />
<line x1="351.3" y1="661.0999999999999" x2="351.3" y2="666.5" stroke="#3a3a3a" stroke-width="0.85" />
<line x1="367.5" y1="661.0999999999999" x2="367.5" y2="666.5" stroke="#3a3a3a" stroke-width="0.85" />
<line x1="384.2" y1="661.0999999999999" x2="384.2" y2="666.5" stroke="#3a3a3a" stroke-width="0.85" />
<line x1="406.7" y1="661.0999999999999" x2="406.7" y2="666.5" stroke="#3a3a3a" stroke-width="0.85" />
<line x1="497" y1="661.0999999999999" x2="497" y2="666.5" stroke="#3a3a3a" stroke-width="0.85" />
<line x1="501.7" y1="661.0999999999999" x2="501.7" y2="666.5" stroke="#3a3a3a" stroke-width="0.85" />
<line x1="524.2" y1="661.0999999999999" x2="524.2" y2="666.5" stroke="#3a3a3a" stroke-width="0.85" />
<line x1="540.2" y1="661.0999999999999" x2="540.2" y2="666.5" stroke="#3a3a3a" stroke-width="0.85" />
<line x1="556.7" y1="661.0999999999999" x2="556.7" y2="666.5" stroke="#3a3a3a" stroke-width="0.85" />
<line x1="561.3" y1="661.0999999999999" x2="561.3" y2="666.5" stroke="#3a3a3a" stroke-width="0.85" />
<line x1="613.3" y1="661.0999999999999" x2="613.3" y2="666.5" stroke="#3a3a3a" stroke-width="0.85" />
<line x1="618" y1="661.0999999999999" x2="618" y2="666.5" stroke="#3a3a3a" stroke-width="0.85" />
<line x1="634.7" y1="661.0999999999999" x2="634.7" y2="666.5" stroke="#3a3a3a" stroke-width="0.85" />
<line x1="639.3" y1="661.0999999999999" x2="639.3" y2="666.5" stroke="#3a3a3a" stroke-width="0.85" />
<line x1="690.8" y1="661.0999999999999" x2="690.8" y2="666.5" stroke="#3a3a3a" stroke-width="0.85" />
<line x1="695.8" y1="661.0999999999999" x2="695.8" y2="666.5" stroke="#3a3a3a" stroke-width="0.85" />
<line x1="728.8" y1="661.0999999999999" x2="728.8" y2="666.5" stroke="#3a3a3a" stroke-width="0.85" />
<text x="359.5" y="663.8" font-size="3.8" fill="#00f0ff" text-anchor="middle" font-weight="bold"  stroke="#00f0ff" stroke-width=".32">750</text>
<text x="375.5" y="663.8" font-size="3.8" fill="#00f0ff" text-anchor="middle" font-weight="bold"  stroke="#00f0ff" stroke-width=".32">750</text>
<text x="395" y="663.8" font-size="3.8" fill="#00f0ff" text-anchor="middle" font-weight="bold"  stroke="#00f0ff" stroke-width=".32">1000</text>
<text x="408.5" y="663.8" font-size="3.8" fill="#00f0ff" text-anchor="middle" font-weight="bold"  stroke="#00f0ff" stroke-width=".32">150</text>
<text x="454" y="663.8" font-size="3.8" fill="#00f0ff" text-anchor="middle" font-weight="bold"  stroke="#00f0ff" stroke-width=".32">4000</text>
<text x="499" y="663.8" font-size="3.8" fill="#00f0ff" text-anchor="middle" font-weight="bold"  stroke="#00f0ff" stroke-width=".32">150</text>
<text x="513" y="663.8" font-size="3.8" fill="#00f0ff" text-anchor="middle" font-weight="bold"  stroke="#00f0ff" stroke-width=".32">1000</text>
<text x="540" y="663.8" font-size="3.8" fill="#00f0ff" text-anchor="middle" font-weight="bold"  stroke="#00f0ff" stroke-width=".32">1500</text>
<text x="558.5" y="663.8" font-size="3.8" fill="#00f0ff" text-anchor="middle" font-weight="bold"  stroke="#00f0ff" stroke-width=".32">150</text>
<text x="587" y="663.8" font-size="3.8" fill="#00f0ff" text-anchor="middle" font-weight="bold"  stroke="#00f0ff" stroke-width=".32">2450</text>
<text x="616" y="663.8" font-size="3.8" fill="#00f0ff" text-anchor="middle" font-weight="bold"  stroke="#00f0ff" stroke-width=".32">150</text>
<text x="626.5" y="663.8" font-size="3.8" fill="#00f0ff" text-anchor="middle" font-weight="bold"  stroke="#00f0ff" stroke-width=".32">750</text>
<text x="637" y="663.8" font-size="3.8" fill="#00f0ff" text-anchor="middle" font-weight="bold"  stroke="#00f0ff" stroke-width=".32">150</text>
<text x="665" y="663.8" font-size="3.8" fill="#00f0ff" text-anchor="middle" font-weight="bold"  stroke="#00f0ff" stroke-width=".32">2450</text>
<text x="693" y="663.8" font-size="3.8" fill="#00f0ff" text-anchor="middle" font-weight="bold"  stroke="#00f0ff" stroke-width=".32">150</text>
<text x="716" y="663.8" font-size="3.8" fill="#00f0ff" text-anchor="middle" font-weight="bold"  stroke="#00f0ff" stroke-width=".32">1500</text>
<line x1="367.5" y1="678" x2="712.5" y2="678" stroke="#7c7c7c" stroke-width="1" />
<text x="454" y="676.2" font-size="3.8" fill="#00f0ff" text-anchor="middle" font-weight="bold"  stroke="#00f0ff" stroke-width=".32">6400</text>
<text x="626" y="676.2" font-size="3.8" fill="#00f0ff" text-anchor="middle" font-weight="bold"  stroke="#00f0ff" stroke-width=".32">6400</text>
<line x1="367.5" y1="661" x2="367.5" y2="680" stroke="#555" stroke-width="0.9" />
<line x1="540.2" y1="661" x2="540.2" y2="680" stroke="#555" stroke-width="0.9" />
<line x1="712.5" y1="661" x2="712.5" y2="680" stroke="#555" stroke-width="0.9" />
<line x1="410.8" y1="650" x2="410.8" y2="678.3" stroke="#303030" stroke-width="1.7" />
<line x1="459.8" y1="666.5" x2="459.8" y2="674" stroke="#ff2a2a" stroke-width="1.3" />
<line x1="459.8" y1="674" x2="455.3" y2="675" stroke="#a05030" stroke-width="1.4" />
<line x1="593.6" y1="666.5" x2="593.6" y2="674" stroke="#ff2a2a" stroke-width="1.3" />
<line x1="593.6" y1="674" x2="589.1" y2="675" stroke="#a05030" stroke-width="1.4" />
<line x1="367.5" y1="679" x2="367.5" y2="683" stroke="#ff2a2a" stroke-width="1.2" />
<circle cx="367.7" cy="687.2" r="4.4" stroke="#ff2a2a" stroke-width="1.3" fill="#fff"/>
<text x="367.7" y="689.3000000000001" font-size="5.8" fill="#000" text-anchor="middle" font-weight="bold" >D</text>
<line x1="540.2" y1="679" x2="540.2" y2="683" stroke="#ff2a2a" stroke-width="1.2" />
<circle cx="540.4000000000001" cy="687.2" r="4.4" stroke="#ff2a2a" stroke-width="1.3" fill="#fff"/>
<text x="540.4000000000001" y="689.3000000000001" font-size="5.8" fill="#000" text-anchor="middle" font-weight="bold" >E</text>
<line x1="712.5" y1="679" x2="712.5" y2="683" stroke="#ff2a2a" stroke-width="1.2" />
<circle cx="712.7" cy="687.2" r="4.4" stroke="#ff2a2a" stroke-width="1.3" fill="#fff"/>
<text x="712.7" y="689.3000000000001" font-size="5.8" fill="#000" text-anchor="middle" font-weight="bold" >F</text>
<rect x="417.5" y="430.4" width="13.80" height="5.60" stroke="#ff2a2a" stroke-width="1.1" fill="none"/>
<text x="424.4" y="434.6" font-size="3.8" fill="#00f0ff" text-anchor="middle" font-weight="bold"  stroke="#00f0ff" stroke-width=".32">PPL</text>
<polyline points="431.3,433 450,432.8 465,456.7" stroke="#7c7c7c" stroke-width="1" fill="none" />
<rect x="417.5" y="443.2" width="13.80" height="5.60" stroke="#ff2a2a" stroke-width="1.1" fill="none"/>
<text x="424.4" y="447.40000000000003" font-size="3.8" fill="#00f0ff" text-anchor="middle" font-weight="bold"  stroke="#00f0ff" stroke-width=".32">CRC</text>
<polyline points="431.3,446 444.2,445.8 453.3,460.8" stroke="#7c7c7c" stroke-width="1" fill="none" />
<circle cx="453.5" cy="461" r="0.9" fill="#00f0ff"/>
<polyline points="443.7,453.3 454.7,533.3" stroke="#6a6a6a" stroke-width="1" fill="none" />
<text x="446.5" y="459" font-size="3.4" fill="#00f0ff" text-anchor="middle" font-weight="bold" transform="rotate(82 446.5 459)"  stroke="#00f0ff" stroke-width=".32">4075</text>
<polyline points="433,463.5 436.5,463.5 436.5,468.3 433,468.3" stroke="#303030" stroke-width="1" fill="none" />
<text x="440.5" y="466.5" font-size="4" fill="#00f0ff" text-anchor="middle" font-weight="bold"  stroke="#00f0ff" stroke-width=".32">%</text>
<polyline points="573,443.5 576.5,443.5 576.5,448.3 573,448.3" stroke="#303030" stroke-width="1" fill="none" />
<text x="581" y="446" font-size="4" fill="#00f0ff" text-anchor="middle" font-weight="bold"  stroke="#00f0ff" stroke-width=".32">%</text>
<rect x="754.3" y="377.3" width="13.80" height="5.60" stroke="#ff2a2a" stroke-width="1.1" fill="none"/>
<text x="761.1999999999999" y="381.50000000000006" font-size="3.8" fill="#00f0ff" text-anchor="middle" font-weight="bold"  stroke="#00f0ff" stroke-width=".32">CRC</text>
<polyline points="754.3,380 720,380 716,387.5" stroke="#7c7c7c" stroke-width="1" fill="none" />
<polyline points="733,380 716,410" stroke="#7c7c7c" stroke-width="1" fill="none" />
<polyline points="748.8,380 716,436.7" stroke="#7c7c7c" stroke-width="1" fill="none" />
<circle cx="716" cy="387.5" r="0.9" fill="#00f0ff"/>
<circle cx="716" cy="410" r="0.9" fill="#00f0ff"/>
<circle cx="716" cy="436.7" r="0.9" fill="#00f0ff"/>
<line x1="676.3" y1="428.3" x2="665.2" y2="490.5" stroke="#3c3c3c" stroke-width="1" />
<text x="673.2" y="434" font-size="3.4" fill="#00f0ff" text-anchor="middle" font-weight="bold" transform="rotate(-80 673.2 434)"  stroke="#00f0ff" stroke-width=".32">5840</text>
<circle cx="673" cy="447" r=".9" fill="#222"/>
<rect x="745.2" y="484.6" width="13.80" height="5.60" stroke="#ff2a2a" stroke-width="1.1" fill="none"/>
<text x="752.1" y="488.80000000000007" font-size="3.8" fill="#00f0ff" text-anchor="middle" font-weight="bold"  stroke="#00f0ff" stroke-width=".32">GRC</text>
<line x1="745.2" y1="487.4" x2="711.5" y2="487.4" stroke="#7c7c7c" stroke-width="1" />
<circle cx="711.3" cy="487.4" r="0.9" fill="#00f0ff"/>
<rect x="578" y="572.5" width="13.80" height="5.60" stroke="#ff2a2a" stroke-width="1.1" fill="none"/>
<text x="584.9" y="576.7" font-size="3.8" fill="#00f0ff" text-anchor="middle" font-weight="bold"  stroke="#00f0ff" stroke-width=".32">PPL</text>
<polyline points="578,575.3 572.8,575.3 559.2,551.3" stroke="#7c7c7c" stroke-width="1" fill="none" />
<line x1="572.8" y1="575.3" x2="566.2" y2="586.3" stroke="#7c7c7c" stroke-width="1" />
<circle cx="559.2" cy="551.3" r="0.9" fill="#00f0ff"/>
<circle cx="566.2" cy="586.3" r="0.9" fill="#00f0ff"/>
<rect x="670" y="582" width="13.80" height="5.60" stroke="#ff2a2a" stroke-width="1.1" fill="none"/>
<text x="676.9" y="586.2" font-size="3.8" fill="#00f0ff" text-anchor="middle" font-weight="bold"  stroke="#00f0ff" stroke-width=".32">PPL</text>
<polyline points="670,585 665.5,585 658.5,573.7" stroke="#7c7c7c" stroke-width="1" fill="none" />
<line x1="665.5" y1="585" x2="658.5" y2="596.2" stroke="#7c7c7c" stroke-width="1" />
<circle cx="658.5" cy="573.7" r="0.9" fill="#00f0ff"/>
<circle cx="658.5" cy="596.2" r="0.9" fill="#00f0ff"/>
<rect x="745.2" y="560" width="13.80" height="5.60" stroke="#ff2a2a" stroke-width="1.1" fill="none"/>
<text x="752.1" y="564.2" font-size="3.8" fill="#00f0ff" text-anchor="middle" font-weight="bold"  stroke="#00f0ff" stroke-width=".32">RRC</text>
<polyline points="745.2,562.8 728,562.8 720.8,574.2" stroke="#7c7c7c" stroke-width="1" fill="none" />
<circle cx="720.8" cy="574.2" r="0.9" fill="#00f0ff"/>
<rect x="745.2" y="609.3" width="13.80" height="5.60" stroke="#ff2a2a" stroke-width="1.1" fill="none"/>
<text x="752.1" y="613.5" font-size="3.8" fill="#00f0ff" text-anchor="middle" font-weight="bold"  stroke="#00f0ff" stroke-width=".32">PPL</text>
<line x1="745.2" y1="612" x2="722.2" y2="612" stroke="#7c7c7c" stroke-width="1" />
<circle cx="722.2" cy="612" r="0.9" fill="#00f0ff"/>
<rect x="745.2" y="635.4" width="13.80" height="5.60" stroke="#ff2a2a" stroke-width="1.1" fill="none"/>
<text x="752.1" y="639.6" font-size="3.8" fill="#00f0ff" text-anchor="middle" font-weight="bold"  stroke="#00f0ff" stroke-width=".32">Q-1</text>
<polyline points="745.2,638.3 727.2,638.3 721.3,650" stroke="#7c7c7c" stroke-width="1" fill="none" />
<circle cx="721.3" cy="650" r="0.9" fill="#00f0ff"/>
<text x="752" y="645.3" font-size="3.2" fill="#00f0ff" text-anchor="middle" font-weight="bold"  stroke="#00f0ff" stroke-width=".32">TERRAZZO</text>
<rect x="416.5" y="635.4" width="13.80" height="5.60" stroke="#ff2a2a" stroke-width="1.1" fill="none"/>
<text x="423.4" y="639.6" font-size="3.8" fill="#00f0ff" text-anchor="middle" font-weight="bold"  stroke="#00f0ff" stroke-width=".32">Q-1</text>
<polyline points="416.5,638.3 399.5,638.3 392.5,650" stroke="#7c7c7c" stroke-width="1" fill="none" />
<circle cx="392.7" cy="650" r="0.9" fill="#00f0ff"/>
<text x="423.5" y="645.3" font-size="3.2" fill="#00f0ff" text-anchor="middle" font-weight="bold"  stroke="#00f0ff" stroke-width=".32">TERRAZZO</text>
<text x="628.8" y="689.2" font-size="6.6" fill="#111" text-anchor="start" font-weight="bold" textLength="51.5" lengthAdjust="spacingAndGlyphs">WEST ELEVATION</text>
<line x1="628.5" y1="690.2" x2="680.7" y2="690.2" stroke="#111" stroke-width="1" />
<text x="629" y="693.6" font-size="3.2" fill="#00f0ff" text-anchor="start" font-weight="bold"  stroke="#00f0ff" stroke-width=".32">SCALE  1 : 50</text>
<rect x="793.3" y="377.3" width="13.80" height="5.60" stroke="#ff2a2a" stroke-width="1.1" fill="none"/>
<text x="800.1999999999999" y="381.50000000000006" font-size="3.8" fill="#00f0ff" text-anchor="middle" font-weight="bold"  stroke="#00f0ff" stroke-width=".32">CRC</text>
<polyline points="807.0,380 849.7,380 853.0,386" stroke="#7c7c7c" stroke-width="1" fill="none" />
<line x1="816.3" y1="380" x2="854.7" y2="428.3" stroke="#7c7c7c" stroke-width="1" />
<line x1="829.7" y1="380" x2="850.5" y2="406.7" stroke="#7c7c7c" stroke-width="1" />
<circle cx="850.5" cy="406.7" r="0.9" fill="#00f0ff"/>
<circle cx="854.7" cy="428.6" r="0.9" fill="#00f0ff"/>
<line x1="856.5" y1="361" x2="856.5" y2="377" stroke="#8e3d3d" stroke-width="1.2" stroke-dasharray="9 2 2 2"/>
<line x1="782.2" y1="395.2" x2="824.7" y2="395.2" stroke="#ff2a2a" stroke-width="1.3" />
<line x1="824.7" y1="395.2" x2="870.5" y2="395.2" stroke="#7a5a4a" stroke-width="1.3" />
<line x1="870.5" y1="395.2" x2="899.5" y2="395.2" stroke="#ff10ff" stroke-width="1.3" />
<text x="783.8000000000001" y="393.9" font-size="3.7" fill="#00f0ff" text-anchor="start" font-weight="bold" textLength="40" lengthAdjust="spacingAndGlyphs" stroke="#00f0ff" stroke-width=".32">TOP OF PARAPET 23877</text>
<line x1="782.2" y1="463.9" x2="822.2" y2="463.9" stroke="#ff2a2a" stroke-width="1.3" />
<line x1="823.2" y1="463.9" x2="899.5" y2="463.9" stroke="#7c6c68" stroke-width="1.7" />
<text x="783.8000000000001" y="462.6" font-size="3.7" fill="#00f0ff" text-anchor="start" font-weight="bold" textLength="40" lengthAdjust="spacingAndGlyphs" stroke="#00f0ff" stroke-width=".32">FIRST FLOOR  + 19350</text>
<line x1="782.2" y1="591.2" x2="823.2" y2="591.2" stroke="#ff2a2a" stroke-width="1.3" />
<line x1="823.2" y1="591.2" x2="855.5" y2="591.2" stroke="#6a4a44" stroke-width="1.2" />
<text x="783.8000000000001" y="589.9" font-size="3.7" fill="#00f0ff" text-anchor="start" font-weight="bold" textLength="39.5" lengthAdjust="spacingAndGlyphs" stroke="#00f0ff" stroke-width=".32">GROUND FLOOR+ 14700</text>
<line x1="782.2" y1="653.3" x2="823.7" y2="653.3" stroke="#ff2a2a" stroke-width="1.3" />
<text x="783.8000000000001" y="652" font-size="3.7" fill="#00f0ff" text-anchor="start" font-weight="bold" textLength="40" lengthAdjust="spacingAndGlyphs" stroke="#00f0ff" stroke-width=".32">BASEMENT   + 13600</text>
<line x1="804.7" y1="397" x2="804.7" y2="653.3" stroke="#7c7c7c" stroke-width="1.3" />
<path d="M802.1 395.4h5.2l-2.6 3.2z" fill="#d04040"/>
<path d="M802.1 464.09999999999997h5.2l-2.6 3.2z" fill="#d04040"/>
<path d="M802.1 591.4000000000001h5.2l-2.6 3.2z" fill="#d04040"/>
<path d="M802.1 653.5h5.2l-2.6 3.2z" fill="#d04040"/>
<text x="802.7" y="429" font-size="3.8" fill="#00f0ff" text-anchor="middle" font-weight="bold" transform="rotate(-90 802.7 429)"  stroke="#00f0ff" stroke-width=".32">4500</text>
<text x="802.7" y="527.5" font-size="3.8" fill="#00f0ff" text-anchor="middle" font-weight="bold" transform="rotate(-90 802.7 527.5)"  stroke="#00f0ff" stroke-width=".32">4650</text>
<text x="802.7" y="622.5" font-size="3.8" fill="#00f0ff" text-anchor="middle" font-weight="bold" transform="rotate(-90 802.7 622.5)"  stroke="#00f0ff" stroke-width=".32">3100</text>
<rect x="936.5999999999999" y="377.3" width="13.80" height="5.60" stroke="#ff2a2a" stroke-width="1.1" fill="none"/>
<text x="943.4999999999999" y="381.50000000000006" font-size="3.8" fill="#00f0ff" text-anchor="middle" font-weight="bold"  stroke="#00f0ff" stroke-width=".32">CRC</text>
<polyline points="950.3,380 993.0,380 996.3,386" stroke="#7c7c7c" stroke-width="1" fill="none" />
<line x1="959.5999999999999" y1="380" x2="998.0" y2="428.3" stroke="#7c7c7c" stroke-width="1" />
<line x1="973.0" y1="380" x2="993.8" y2="406.7" stroke="#7c7c7c" stroke-width="1" />
<circle cx="993.8" cy="406.7" r="0.9" fill="#00f0ff"/>
<circle cx="998.0" cy="428.6" r="0.9" fill="#00f0ff"/>
<line x1="999.8" y1="361" x2="999.8" y2="377" stroke="#8e3d3d" stroke-width="1.2" stroke-dasharray="9 2 2 2"/>
<line x1="925" y1="395.2" x2="967.5" y2="395.2" stroke="#ff2a2a" stroke-width="1.3" />
<line x1="967.5" y1="395.2" x2="1013.8" y2="395.2" stroke="#7a5a4a" stroke-width="1.3" />
<line x1="1013.8" y1="395.2" x2="1025.8" y2="395.2" stroke="#ff10ff" stroke-width="1.3" />
<text x="926.6" y="393.9" font-size="3.7" fill="#00f0ff" text-anchor="start" font-weight="bold" textLength="40" lengthAdjust="spacingAndGlyphs" stroke="#00f0ff" stroke-width=".32">TOP OF PARAPET 23877</text>
<line x1="925" y1="463.9" x2="965" y2="463.9" stroke="#ff2a2a" stroke-width="1.3" />
<line x1="966" y1="463.9" x2="1025.8" y2="463.9" stroke="#7a5048" stroke-width="1.4" />
<text x="926.6" y="462.6" font-size="3.7" fill="#00f0ff" text-anchor="start" font-weight="bold" textLength="40" lengthAdjust="spacingAndGlyphs" stroke="#00f0ff" stroke-width=".32">FIRST FLOOR  + 19350</text>
<line x1="925" y1="591.2" x2="966" y2="591.2" stroke="#ff2a2a" stroke-width="1.3" />
<line x1="966" y1="591.2" x2="998.8" y2="591.2" stroke="#6a4a44" stroke-width="1.2" />
<text x="926.6" y="589.9" font-size="3.7" fill="#00f0ff" text-anchor="start" font-weight="bold" textLength="39.5" lengthAdjust="spacingAndGlyphs" stroke="#00f0ff" stroke-width=".32">GROUND FLOOR+ 14700</text>
<line x1="925" y1="653.3" x2="966.5" y2="653.3" stroke="#ff2a2a" stroke-width="1.3" />
<text x="926.6" y="652" font-size="3.7" fill="#00f0ff" text-anchor="start" font-weight="bold" textLength="17" lengthAdjust="spacingAndGlyphs" stroke="#00f0ff" stroke-width=".32">BASEMENT</text>
<line x1="947.5" y1="397" x2="947.5" y2="660" stroke="#7c7c7c" stroke-width="1.3" />
<path d="M944.9 395.4h5.2l-2.6 3.2z" fill="#d04040"/>
<path d="M944.9 464.09999999999997h5.2l-2.6 3.2z" fill="#d04040"/>
<path d="M944.9 591.4000000000001h5.2l-2.6 3.2z" fill="#d04040"/>
<path d="M944.9 653.5h5.2l-2.6 3.2z" fill="#d04040"/>
<path d="M944.9 660.2h5.2l-2.6 3.2z" fill="#d04040"/>
<text x="945.5" y="429" font-size="3.8" fill="#00f0ff" text-anchor="middle" font-weight="bold" transform="rotate(-90 945.5 429)"  stroke="#00f0ff" stroke-width=".32">4500</text>
<text x="945.5" y="527.5" font-size="3.8" fill="#00f0ff" text-anchor="middle" font-weight="bold" transform="rotate(-90 945.5 527.5)"  stroke="#00f0ff" stroke-width=".32">4650</text>
<text x="945.5" y="622.5" font-size="3.8" fill="#00f0ff" text-anchor="middle" font-weight="bold" transform="rotate(-90 945.5 622.5)"  stroke="#00f0ff" stroke-width=".32">3100</text>
<circle cx="856.5" cy="384.7" r="5.8" fill="none" stroke="#ff10ff" stroke-width="1.1"/>
<ellipse cx="856.5" cy="384.7" rx="4.2" ry="5.8" fill="none" stroke="#ff10ff" stroke-width=".5"/>
<ellipse cx="856.5" cy="384.7" rx="1.2" ry="5.8" fill="none" stroke="#ff10ff" stroke-width=".5"/>
<ellipse cx="856.5" cy="384.7" rx="4.2" ry="5.8" fill="none" stroke="#ff10ff" stroke-width=".5"/>
<line x1="850.7" y1="384.7" x2="862.3" y2="384.7" stroke="#ff10ff" stroke-width="0.5" />
<line x1="851.5" y1="381.9" x2="861.5" y2="381.9" stroke="#ff10ff" stroke-width="0.5" />
<line x1="851.5" y1="387.5" x2="861.5" y2="387.5" stroke="#ff10ff" stroke-width="0.5" />
<polyline points="850.5,395 852.0,391.8 861.0,391.8 862.5,395" stroke="#ff10ff" stroke-width="1" fill="none" />
<line x1="856.8" y1="377" x2="856.8" y2="396" stroke="#8e3d3d" stroke-width="1.1" />
<line x1="848.5" y1="396" x2="848.5" y2="558" stroke="#ff10ff" stroke-width="1.1" />
<line x1="850.2" y1="440" x2="850.2" y2="558" stroke="#ff10ff" stroke-width="1" />
<line x1="860.6" y1="396" x2="860.6" y2="591" stroke="#ff10ff" stroke-width="1.1" />
<line x1="862.8" y1="396" x2="862.8" y2="591" stroke="#ff10ff" stroke-width="1.1" />
<line x1="858.8" y1="397" x2="858.8" y2="591" stroke="#ffee00" stroke-width="1.2" />
<line x1="857" y1="396" x2="857" y2="591" stroke="#8a7a72" stroke-width="0.9" stroke-dasharray="3 1"/>
<rect x="846" y="396.7" width="9.50" height="5.80" stroke="#ff10ff" stroke-width="1" fill="none"/>
<line x1="848" y1="402.5" x2="848" y2="419.5" stroke="#ff10ff" stroke-width="1" />
<rect x="850.6" y="405.8" width="3.00" height="7.50" stroke="#ff10ff" stroke-width="1.3" fill="none"/>
<rect x="843.8" y="420" width="7.70" height="5.00" stroke="#ff10ff" stroke-width="1" fill="none"/>
<rect x="846" y="425" width="5.50" height="3.30" stroke="#ff10ff" stroke-width="0.9" fill="none"/>
<line x1="850.2" y1="428.3" x2="850.2" y2="443.3" stroke="#ff10ff" stroke-width="0.9" />
<rect x="846.3" y="443.3" width="8.40" height="3.50" stroke="#ff10ff" stroke-width="1" fill="none"/>
<rect x="851.5" y="451" width="2.00" height="5.00" stroke="#ff10ff" stroke-width="0.8" fill="none"/>
<line x1="851" y1="448" x2="851" y2="463" stroke="#ff10ff" stroke-width="0.8" />
<rect x="855" y="416" width="1.80" height="5.50" fill="#ffee00"/>
<rect x="855" y="458" width="1.80" height="5.00" fill="#ffee00"/>
<rect x="855.5" y="463.9" width="7.50" height="30.30" fill="#4c4c4c"/>
<rect x="855.5" y="490" width="25.80" height="5.00" fill="#4c4c4c"/>
<rect x="876" y="480.8" width="5.30" height="14.20" fill="#4c4c4c"/>
<polyline points="858,480.5 863.5,480.5" stroke="#ddd" stroke-width="0.8" fill="none" stroke-dasharray="1.5 1"/>
<polyline points="863.6,481 863.6,489.6 875.6,489.6 875.6,481" stroke="#ffee00" stroke-width="1.1" fill="none" />
<rect x="866.5" y="487" width="4.50" height="2.30" fill="#9a9a9a"/>
<text x="873.5" y="488" font-size="2.6" fill="#00f0ff" text-anchor="middle" font-weight="bold"  stroke="#00f0ff" stroke-width=".32">RD</text>
<rect x="866.5" y="495.5" width="3.50" height="10.00" stroke="#8a8a8a" stroke-width="1" fill="none"/>
<polyline points="864,505.5 870,505.5 870,508 864,508" stroke="#8a8a8a" stroke-width="1" fill="none" />
<polyline points="881.3,482.8 911.3,474" stroke="#10f010" stroke-width="1.3" fill="none" />
<polyline points="881.3,489 893,482.5 911.3,479.5" stroke="#10f010" stroke-width="1.2" fill="none" />
<polyline points="881.3,486 890,481" stroke="#10f010" stroke-width="1" fill="none" />
<polyline points="874,479.8 911.3,472.5" stroke="#3a4a9a" stroke-width="1.6" fill="none" />
<polyline points="874.5,478.3 911.3,471" stroke="#00f0ff" stroke-width="0.8" fill="none" stroke-dasharray="1 1"/>
<line x1="893" y1="476" x2="893" y2="482.5" stroke="#10f010" stroke-width="0.8" />
<line x1="902" y1="474.5" x2="902" y2="481" stroke="#10f010" stroke-width="0.8" />
<polyline points="897,478 903.5,490 911.5,490" stroke="#7c7c7c" stroke-width="1" fill="none" />
<text x="912.2" y="491.3" font-size="3.8" fill="#00f0ff" text-anchor="start" font-weight="bold" textLength="16.5" lengthAdjust="spacingAndGlyphs" stroke="#00f0ff" stroke-width=".32">AQUAPAN</text>
<line x1="846.5" y1="535.8" x2="862" y2="535.8" stroke="#555" stroke-width="1" />
<line x1="847.5" y1="532.8" x2="847.5" y2="537.3" stroke="#303030" stroke-width="1" />
<line x1="853.5" y1="532.8" x2="853.5" y2="537.3" stroke="#303030" stroke-width="1" />
<line x1="857" y1="532.8" x2="857" y2="537.3" stroke="#303030" stroke-width="1" />
<line x1="861" y1="532.8" x2="861" y2="537.3" stroke="#303030" stroke-width="1" />
<line x1="850.5" y1="542.5" x2="863" y2="542.5" stroke="#555" stroke-width="1" />
<line x1="851.5" y1="539.5" x2="851.5" y2="544.0" stroke="#303030" stroke-width="1" />
<line x1="856.5" y1="539.5" x2="856.5" y2="544.0" stroke="#303030" stroke-width="1" />
<line x1="862" y1="539.5" x2="862" y2="544.0" stroke="#303030" stroke-width="1" />
<text x="852" y="535" font-size="3" fill="#00f0ff" text-anchor="middle" font-weight="bold"  stroke="#00f0ff" stroke-width=".32">100 90</text>
<text x="856" y="541.8" font-size="3" fill="#00f0ff" text-anchor="middle" font-weight="bold"  stroke="#00f0ff" stroke-width=".32">160  50</text>
<polyline points="855.5,558 876.3,558" stroke="#7c7c7c" stroke-width="1" fill="none" />
<circle cx="855.8" cy="558" r="0.9" fill="#00f0ff"/>
<text x="879.3" y="559.3" font-size="3.9" fill="#00f0ff" text-anchor="start" font-weight="bold" textLength="19.5" lengthAdjust="spacingAndGlyphs" stroke="#00f0ff" stroke-width=".32">SAIDE SILL</text>
<polyline points="848.5,558 846.5,558 846.5,561 845.5,561 845.5,564 844.5,564 844.5,567 842.5,567 842.5,580 840.5,580 840.5,652.5 856,652.5" stroke="#ff10ff" stroke-width="1.1" fill="none" />
<line x1="842.2" y1="580" x2="842.2" y2="652" stroke="#ff10ff" stroke-width="0.9" />
<line x1="853.3" y1="580" x2="853.3" y2="652" stroke="#ff10ff" stroke-width="1" />
<line x1="855" y1="591" x2="855" y2="652" stroke="#ff10ff" stroke-width="0.9" />
<polyline points="843,569 853,569 853,578 843,578" stroke="#ff10ff" stroke-width="0.8" fill="none" />
<polyline points="843.5,578 845.5,570.5 848,578 850.5,570.5 852.5,578" stroke="#ff10ff" stroke-width="0.8" fill="none" />
<line x1="846.5" y1="561" x2="853" y2="561" stroke="#ff10ff" stroke-width="0.7" />
<line x1="845.5" y1="564" x2="853" y2="564" stroke="#ff10ff" stroke-width="0.7" />
<line x1="844.5" y1="567" x2="853" y2="567" stroke="#ff10ff" stroke-width="0.7" />
<line x1="859.7" y1="591" x2="859.7" y2="652" stroke="#ff10ff" stroke-width="1.1" />
<line x1="856.6" y1="606" x2="856.6" y2="660" stroke="#8e3d3d" stroke-width="1" stroke-dasharray="6 1.5 1.5 1.5"/>
<rect x="855.5" y="591.6" width="44.20" height="4.20" fill="#4c4c4c"/>
<rect x="855.5" y="595.8" width="7.50" height="10.00" fill="#4c4c4c"/>
<line x1="863" y1="591.2" x2="899.7" y2="591.2" stroke="#ffee00" stroke-width="1" stroke-dasharray="1.5 .8"/>
<line x1="849" y1="591.2" x2="854.5" y2="591.2" stroke="#303030" stroke-width="1" />
<line x1="849" y1="595.8" x2="854.5" y2="595.8" stroke="#303030" stroke-width="1" />
<line x1="849" y1="601" x2="854.5" y2="601" stroke="#303030" stroke-width="1" />
<line x1="849" y1="605.8" x2="854.5" y2="605.8" stroke="#303030" stroke-width="1" />
<line x1="850.5" y1="588.5" x2="850.5" y2="607" stroke="#666" stroke-width="1" />
<line x1="853.3" y1="588.5" x2="853.3" y2="607" stroke="#666" stroke-width="1" />
<text x="846.5" y="599" font-size="2.8" fill="#00f0ff" text-anchor="middle" font-weight="bold" transform="rotate(-90 846.5 599)"  stroke="#00f0ff" stroke-width=".32">150 250</text>
<text x="836" y="594" font-size="2.8" fill="#00f0ff" text-anchor="middle" font-weight="bold"  stroke="#00f0ff" stroke-width=".32">75</text>
<line x1="838" y1="591.2" x2="842" y2="591.2" stroke="#303030" stroke-width="1" />
<rect x="823" y="653.5" width="17.50" height="4.80" fill="#ffee00"/>
<rect x="859.7" y="653.5" width="40.00" height="4.80" fill="#ffee00"/>
<text x="824" y="657.6" font-size="3.4" fill="#111" text-anchor="start" font-weight="bold" >▬▬▬▬▬</text>
<text x="861" y="657.7" font-size="3.6" fill="#111" text-anchor="start" font-weight="bold" textLength="38" lengthAdjust="spacingAndGlyphs">▰▰▰▰▰▰▰▰▰▰▰</text>
<polyline points="840.5,653.5 840.5,665.8 854.7,665.8 854.7,661" stroke="#ffee00" stroke-width="1.2" fill="none" />
<polyline points="843.2,658 843.2,663 852,663 852,658" stroke="#ffee00" stroke-width="1" fill="none" />
<rect x="845.5" y="661.3" width="21.70" height="9.50" fill="#4c4c4c"/>
<rect x="853" y="653.3" width="6.70" height="12.70" fill="#4c4c4c"/>
<rect x="843.2" y="658.2" width="8.80" height="3.00" fill="#ffffff"/>
<polyline points="844.5,655 851,655 848.5,658.5 846.5,658.5 844.5,655" stroke="#888" stroke-width="0.8" fill="none" />
<line x1="856.5" y1="664" x2="856.5" y2="673" stroke="#ff2a2a" stroke-width="1.1" />
<circle cx="856.5" cy="677.2" r="4.4" stroke="#ff2a2a" stroke-width="1.3" fill="#fff"/>
<text x="856.5" y="679.3000000000001" font-size="5.8" fill="#000" text-anchor="middle" font-weight="bold" >21</text>
<text x="885.5" y="623.4" font-size="3.9" fill="#00f0ff" text-anchor="start" font-weight="bold" textLength="29" lengthAdjust="spacingAndGlyphs" stroke="#00f0ff" stroke-width=".32">CONCRETE PAVERS</text>
<polyline points="884.5,622 853,622 833.8,653.7" stroke="#7c7c7c" stroke-width="1" fill="none" />
<circle cx="834" cy="653.5" r="0.9" fill="#00f0ff"/>
<rect x="884.3" y="626.4" width="14.20" height="5.60" stroke="#ff2a2a" stroke-width="1.1" fill="none"/>
<text x="891.4" y="630.6" font-size="3.8" fill="#00f0ff" text-anchor="middle" font-weight="bold"  stroke="#00f0ff" stroke-width=".32">Q-1</text>
<polyline points="884.3,629.2 866.3,629.2 854.7,648.3" stroke="#7c7c7c" stroke-width="1" fill="none" />
<circle cx="854.8" cy="648.3" r="0.9" fill="#00f0ff"/>
<text x="885.5" y="636.4" font-size="3.9" fill="#00f0ff" text-anchor="start" font-weight="bold" textLength="29" lengthAdjust="spacingAndGlyphs" stroke="#00f0ff" stroke-width=".32">CONCRETE PAVERS</text>
<polyline points="884.5,635 877.2,635 865.5,653" stroke="#7c7c7c" stroke-width="1" fill="none" />
<circle cx="865.6" cy="653" r="0.9" fill="#00f0ff"/>
<text x="814.7" y="697.2" font-size="6.4" fill="#111" text-anchor="start" font-weight="bold" textLength="38.5" lengthAdjust="spacingAndGlyphs">SECTION - A</text>
<line x1="814.5" y1="698.2" x2="853.5" y2="698.2" stroke="#111" stroke-width="1" />
<text x="815" y="701.4" font-size="3.2" fill="#00f0ff" text-anchor="start" font-weight="bold"  stroke="#00f0ff" stroke-width=".32">SCALE  1 : 20</text>
<circle cx="999.8" cy="385.3" r="5.8" fill="none" stroke="#ff10ff" stroke-width="1.1"/>
<ellipse cx="999.8" cy="385.3" rx="4.2" ry="5.8" fill="none" stroke="#ff10ff" stroke-width=".5"/>
<ellipse cx="999.8" cy="385.3" rx="1.2" ry="5.8" fill="none" stroke="#ff10ff" stroke-width=".5"/>
<ellipse cx="999.8" cy="385.3" rx="4.2" ry="5.8" fill="none" stroke="#ff10ff" stroke-width=".5"/>
<line x1="994.0" y1="385.3" x2="1005.5999999999999" y2="385.3" stroke="#ff10ff" stroke-width="0.5" />
<line x1="994.8" y1="382.5" x2="1004.8" y2="382.5" stroke="#ff10ff" stroke-width="0.5" />
<line x1="994.8" y1="388.1" x2="1004.8" y2="388.1" stroke="#ff10ff" stroke-width="0.5" />
<polyline points="993.8,395 995.3,391.8 1004.3,391.8 1005.8,395" stroke="#ff10ff" stroke-width="1" fill="none" />
<line x1="1000.0" y1="377" x2="1000.0" y2="396" stroke="#8e3d3d" stroke-width="1.1" />
<line x1="1005.8" y1="396" x2="1005.8" y2="591" stroke="#ff10ff" stroke-width="1.2" />
<line x1="1002" y1="440" x2="1002" y2="591" stroke="#ff10ff" stroke-width="1" />
<line x1="991.3" y1="440" x2="991.3" y2="559" stroke="#ff10ff" stroke-width="1.1" />
<line x1="995.3" y1="446" x2="995.3" y2="559" stroke="#ff10ff" stroke-width="1.1" />
<line x1="999.8" y1="396" x2="999.8" y2="464" stroke="#3a2a2a" stroke-width="1.3" stroke-dasharray="1.2 .8"/>
<line x1="1001.0" y1="396" x2="1001.0" y2="464" stroke="#e05030" stroke-width="0.8" stroke-dasharray="1 1"/>
<line x1="998.7" y1="464" x2="998.7" y2="591" stroke="#ffee00" stroke-width="1.2" />
<line x1="1000.0999999999999" y1="464" x2="1000.0999999999999" y2="591" stroke="#7a6a60" stroke-width="1" stroke-dasharray="2 1"/>
<rect x="988.2" y="396.7" width="9.50" height="5.80" stroke="#ff10ff" stroke-width="1" fill="none"/>
<line x1="990.2" y1="402.5" x2="990.2" y2="419.5" stroke="#ff10ff" stroke-width="1" />
<rect x="992.8" y="405.8" width="3.00" height="7.50" stroke="#ff10ff" stroke-width="1.3" fill="none"/>
<rect x="986.0" y="420" width="7.70" height="5.00" stroke="#ff10ff" stroke-width="1" fill="none"/>
<rect x="988.2" y="425" width="5.50" height="3.30" stroke="#ff10ff" stroke-width="0.9" fill="none"/>
<line x1="992.4000000000001" y1="428.3" x2="992.4000000000001" y2="443.3" stroke="#ff10ff" stroke-width="0.9" />
<rect x="988.5" y="443.3" width="8.40" height="3.50" stroke="#ff10ff" stroke-width="1" fill="none"/>
<rect x="993.7" y="451" width="2.00" height="5.00" stroke="#ff10ff" stroke-width="0.8" fill="none"/>
<line x1="993.2" y1="448" x2="993.2" y2="463" stroke="#ff10ff" stroke-width="0.8" />
<rect x="996" y="397" width="1.60" height="6.00" fill="#ffee00"/>
<rect x="996.3" y="416" width="1.50" height="5.50" fill="#ffee00"/>
<rect x="996.3" y="442" width="4.90" height="4.70" fill="#4c4c4c"/>
<rect x="998.3" y="464.2" width="7.20" height="16.60" fill="#4c4c4c"/>
<rect x="998.3" y="480.8" width="4.70" height="31.20" fill="#4c4c4c"/>
<rect x="1003" y="491.7" width="22.80" height="3.70" fill="#4c4c4c"/>
<line x1="1005.5" y1="491.2" x2="1025.8" y2="491.2" stroke="#ffee00" stroke-width="1" stroke-dasharray="1.5 .8"/>
<rect x="1003.5" y="481" width="1.50" height="10.00" fill="#ffee00"/>
<polyline points="1006.5,491 1008,487.3 1012,487.3 1013.5,491" stroke="#888" stroke-width="1" fill="#aaa" />
<text x="1017" y="488.5" font-size="2.6" fill="#00f0ff" text-anchor="middle" font-weight="bold"  stroke="#00f0ff" stroke-width=".32">RD</text>
<rect x="1008.5" y="495.8" width="3.00" height="10.20" stroke="#8a8a8a" stroke-width="1" fill="none"/>
<polyline points="1004,506 1011.5,506 1011.5,508.5 1004,508.5" stroke="#8a8a8a" stroke-width="1" fill="none" />
<line x1="990" y1="535.8" x2="1005" y2="535.8" stroke="#555" stroke-width="1" />
<line x1="991" y1="532.8" x2="991" y2="537.3" stroke="#303030" stroke-width="1" />
<line x1="996.5" y1="532.8" x2="996.5" y2="537.3" stroke="#303030" stroke-width="1" />
<line x1="1000.5" y1="532.8" x2="1000.5" y2="537.3" stroke="#303030" stroke-width="1" />
<line x1="1004" y1="532.8" x2="1004" y2="537.3" stroke="#303030" stroke-width="1" />
<line x1="994" y1="542.5" x2="1007" y2="542.5" stroke="#555" stroke-width="1" />
<line x1="995" y1="539.5" x2="995" y2="544.0" stroke="#303030" stroke-width="1" />
<line x1="1000" y1="539.5" x2="1000" y2="544.0" stroke="#303030" stroke-width="1" />
<line x1="1006" y1="539.5" x2="1006" y2="544.0" stroke="#303030" stroke-width="1" />
<text x="995.5" y="535" font-size="3" fill="#00f0ff" text-anchor="middle" font-weight="bold"  stroke="#00f0ff" stroke-width=".32">100 90</text>
<text x="1000.5" y="541.8" font-size="3" fill="#00f0ff" text-anchor="middle" font-weight="bold"  stroke="#00f0ff" stroke-width=".32">160  50</text>
<polyline points="1000,558 1020.8,558" stroke="#7c7c7c" stroke-width="1" fill="none" />
<circle cx="1000" cy="558" r="0.9" fill="#00f0ff"/>
<text x="1023" y="559.3" font-size="3.9" fill="#00f0ff" text-anchor="start" font-weight="bold" textLength="18.7" lengthAdjust="spacingAndGlyphs" stroke="#00f0ff" stroke-width=".32">SIDE SILL</text>
<polyline points="991.3,559 989.5,559 989.5,562 988.3,562 988.3,565 987,565 987,568 985,568 985,580 983.3,580 983.3,652.5 997,652.5" stroke="#ff10ff" stroke-width="1.1" fill="none" />
<line x1="985.3" y1="580" x2="985.3" y2="652" stroke="#ff10ff" stroke-width="0.9" />
<line x1="996.7" y1="575" x2="996.7" y2="652" stroke="#ff10ff" stroke-width="1.1" />
<polyline points="986,569 996,569 996,578 986,578" stroke="#ff10ff" stroke-width="0.8" fill="none" />
<polyline points="986.5,578 988.5,570.5 991,578 993.5,570.5 995.5,578" stroke="#ff10ff" stroke-width="0.8" fill="none" />
<line x1="989.5" y1="562" x2="996.5" y2="562" stroke="#ff10ff" stroke-width="0.7" />
<line x1="988.3" y1="565" x2="996.5" y2="565" stroke="#ff10ff" stroke-width="0.7" />
<line x1="987" y1="568" x2="996.5" y2="568" stroke="#ff10ff" stroke-width="0.7" />
<line x1="1002" y1="591" x2="1002" y2="652" stroke="#ff10ff" stroke-width="1.1" />
<rect x="998.3" y="591.6" width="27.50" height="4.20" fill="#4c4c4c"/>
<rect x="998.3" y="595.8" width="7.50" height="10.00" fill="#4c4c4c"/>
<line x1="1005.8" y1="591.1" x2="1025.8" y2="591.1" stroke="#f0b030" stroke-width="1.2" />
<line x1="991.5" y1="591.2" x2="997" y2="591.2" stroke="#303030" stroke-width="1" />
<line x1="991.5" y1="595.8" x2="997" y2="595.8" stroke="#303030" stroke-width="1" />
<line x1="991.5" y1="601" x2="997" y2="601" stroke="#303030" stroke-width="1" />
<line x1="991.5" y1="605.8" x2="997" y2="605.8" stroke="#303030" stroke-width="1" />
<line x1="993.3" y1="588.5" x2="993.3" y2="607" stroke="#666" stroke-width="1" />
<line x1="996" y1="588.5" x2="996" y2="607" stroke="#666" stroke-width="1" />
<text x="989.5" y="599" font-size="2.8" fill="#00f0ff" text-anchor="middle" font-weight="bold" transform="rotate(-90 989.5 599)"  stroke="#00f0ff" stroke-width=".32">150 250</text>
<text x="979" y="594" font-size="2.8" fill="#00f0ff" text-anchor="middle" font-weight="bold"  stroke="#00f0ff" stroke-width=".32">75</text>
<line x1="981" y1="591.2" x2="985" y2="591.2" stroke="#303030" stroke-width="1" />
<line x1="999.8" y1="606" x2="999.8" y2="653" stroke="#6a6a6a" stroke-width="1.7" stroke-dasharray="9 1.5 2 1.5"/>
<line x1="966.7" y1="653.3" x2="980" y2="653.3" stroke="#ff10ff" stroke-width="1.2" />
<line x1="925" y1="660" x2="965" y2="660" stroke="#ff2a2a" stroke-width="1.3" />
<text x="953" y="658.8" font-size="3.6" fill="#00f0ff" text-anchor="start" font-weight="bold"  stroke="#00f0ff" stroke-width=".32">+ 12900</text>
<text x="953" y="652" font-size="3.6" fill="#00f0ff" text-anchor="start" font-weight="bold"  stroke="#00f0ff" stroke-width=".32">+ 13600</text>
<line x1="945" y1="648" x2="945" y2="655.5" stroke="#555" stroke-width="1" />
<line x1="945" y1="655.5" x2="948" y2="657" stroke="#555" stroke-width="1" />
<rect x="967.2" y="656.7" width="13.30" height="5.00" fill="#ffee00"/>
<text x="968" y="660.8" font-size="3.2" fill="#111" text-anchor="start" font-weight="bold" >▬▬▬</text>
<rect x="1010" y="660.5" width="15.80" height="4.70" fill="#ffee00"/>
<text x="1011" y="664.5" font-size="3.6" fill="#111" text-anchor="start" font-weight="bold" >▰▰▰▰</text>
<defs><pattern id="bh" width="2" height="2" patternUnits="userSpaceOnUse"><rect width="2" height="2" fill="#5a6a8a"/><path d="M0 2L2 0" stroke="#3a60c0" stroke-width=".7"/></pattern></defs>
<rect x="980.5" y="653.7" width="16.20" height="7.30" fill="#555"/>
<rect x="983" y="654.5" width="13" height="6" fill="url(#bh)"/>
<rect x="996.7" y="653" width="5.80" height="9.00" fill="#4c4c4c"/>
<rect x="987.8" y="660.8" width="21.90" height="8.40" fill="#4c4c4c"/>
<line x1="987.8" y1="675.8" x2="1010.3" y2="675.8" stroke="#555" stroke-width="1" />
<line x1="987.8" y1="669.5" x2="987.8" y2="677" stroke="#555" stroke-width="1" />
<line x1="1010" y1="669.5" x2="1010" y2="677" stroke="#555" stroke-width="1" />
<text x="999" y="673.4" font-size="3.2" fill="#00f0ff" text-anchor="middle" font-weight="bold"  stroke="#00f0ff" stroke-width=".32">1000</text>
<line x1="983.8" y1="660" x2="983.8" y2="670.5" stroke="#555" stroke-width="1" />
<line x1="982.5" y1="670.3" x2="986" y2="670.3" stroke="#303030" stroke-width="1" />
<text x="981.5" y="665.5" font-size="2.8" fill="#00f0ff" text-anchor="middle" font-weight="bold" transform="rotate(-90 981.5 665.5)"  stroke="#00f0ff" stroke-width=".32">450</text>
<text x="957.5" y="639.4" font-size="3.9" fill="#00f0ff" text-anchor="start" font-weight="bold" textLength="9.2" lengthAdjust="spacingAndGlyphs" stroke="#00f0ff" stroke-width=".32">TILING</text>
<polyline points="969.2,638 979.2,638 987.8,651.7" stroke="#7c7c7c" stroke-width="1" fill="none" />
<circle cx="987.8" cy="651.8" r="0.9" fill="#00f0ff"/>
<text x="957.5" y="646" font-size="3.9" fill="#00f0ff" text-anchor="start" font-weight="bold" textLength="7.5" lengthAdjust="spacingAndGlyphs" stroke="#00f0ff" stroke-width=".32">BASE</text>
<polyline points="966.2,644.7 970.8,644.7 977.5,655" stroke="#7c7c7c" stroke-width="1" fill="none" />
<circle cx="977.5" cy="655" r="0.9" fill="#00f0ff"/>
<text x="1029.2" y="643" font-size="3.9" fill="#00f0ff" text-anchor="start" font-weight="bold" textLength="29.6" lengthAdjust="spacingAndGlyphs" stroke="#00f0ff" stroke-width=".32">CONCRETE PAVERS</text>
<polyline points="1027.5,641.7 1020,641.7 1008.3,660" stroke="#7c7c7c" stroke-width="1" fill="none" />
<circle cx="1008.4" cy="659.8" r="0.9" fill="#00f0ff"/>
<line x1="999.8" y1="669" x2="999.8" y2="677.3" stroke="#ff2a2a" stroke-width="1.1" />
<circle cx="999.8" cy="681.7" r="4.4" stroke="#ff2a2a" stroke-width="1.3" fill="#fff"/>
<text x="999.8" y="683.8000000000001" font-size="5.8" fill="#000" text-anchor="middle" font-weight="bold" >21</text>
<text x="958.5" y="697.2" font-size="6.4" fill="#111" text-anchor="start" font-weight="bold" textLength="38" lengthAdjust="spacingAndGlyphs">SECTION - B</text>
<line x1="958.3" y1="698.2" x2="996.8" y2="698.2" stroke="#111" stroke-width="1" />
<text x="959" y="701.4" font-size="3.2" fill="#00f0ff" text-anchor="start" font-weight="bold"  stroke="#00f0ff" stroke-width=".32">SCALE  1 : 20</text>
<rect x="1069.2" y="377.3" width="13.80" height="5.60" stroke="#ff2a2a" stroke-width="1.1" fill="none"/>
<text x="1076.1000000000001" y="381.50000000000006" font-size="3.8" fill="#00f0ff" text-anchor="middle" font-weight="bold"  stroke="#00f0ff" stroke-width=".32">CRC</text>
<text x="1088" y="381.8" font-size="4" fill="#00f0ff" text-anchor="start" font-weight="bold" textLength="60" lengthAdjust="spacingAndGlyphs" stroke="#00f0ff" stroke-width=".32">CLADDING REINFORCED CONCRETE</text>
<rect x="1069.2" y="386.53000000000003" width="13.80" height="5.60" stroke="#ff2a2a" stroke-width="1.1" fill="none"/>
<text x="1076.1000000000001" y="390.7300000000001" font-size="3.8" fill="#00f0ff" text-anchor="middle" font-weight="bold"  stroke="#00f0ff" stroke-width=".32">PPL</text>
<text x="1088" y="391.03000000000003" font-size="4" fill="#00f0ff" text-anchor="start" font-weight="bold" textLength="28.7" lengthAdjust="spacingAndGlyphs" stroke="#00f0ff" stroke-width=".32">PAINTED PLASTER</text>
<rect x="1069.2" y="395.76" width="13.80" height="5.60" stroke="#ff2a2a" stroke-width="1.1" fill="none"/>
<text x="1076.1000000000001" y="399.96000000000004" font-size="3.8" fill="#00f0ff" text-anchor="middle" font-weight="bold"  stroke="#00f0ff" stroke-width=".32">RC</text>
<text x="1088" y="400.26" font-size="4" fill="#00f0ff" text-anchor="start" font-weight="bold" textLength="38.7" lengthAdjust="spacingAndGlyphs" stroke="#00f0ff" stroke-width=".32">REINFORCED CONCRETE</text>
<rect x="1069.2" y="404.99" width="13.80" height="5.60" stroke="#ff2a2a" stroke-width="1.1" fill="none"/>
<text x="1076.1000000000001" y="409.19000000000005" font-size="3.8" fill="#00f0ff" text-anchor="middle" font-weight="bold"  stroke="#00f0ff" stroke-width=".32">Q-1</text>
<text x="1088" y="409.49" font-size="4" fill="#00f0ff" text-anchor="start" font-weight="bold" textLength="40.7" lengthAdjust="spacingAndGlyphs" stroke="#00f0ff" stroke-width=".32">TERRE QUOIL TERRAZZO</text>
<rect x="1069.2" y="414.22" width="13.80" height="5.60" stroke="#ff2a2a" stroke-width="1.1" fill="none"/>
<text x="1076.1000000000001" y="418.4200000000001" font-size="3.8" fill="#00f0ff" text-anchor="middle" font-weight="bold"  stroke="#00f0ff" stroke-width=".32">SS</text>
<text x="1088" y="418.72" font-size="4" fill="#00f0ff" text-anchor="start" font-weight="bold" textLength="27.5" lengthAdjust="spacingAndGlyphs" stroke="#00f0ff" stroke-width=".32">STAINLESS STEEL</text>
<circle cx="331.7" cy="739.7" r="4.4" stroke="#ff2a2a" stroke-width="1.3" fill="#fff"/>
<text x="331.7" y="741.8000000000001" font-size="5.8" fill="#000" text-anchor="middle" font-weight="bold" >21</text>
<line x1="336.3" y1="739.5" x2="341" y2="739.5" stroke="#ff2a2a" stroke-width="1.2" />
<line x1="374.2" y1="734" x2="533.7" y2="734" stroke="#ff10ff" stroke-width="1.7" />
<text x="356.7" y="736.8" font-size="3.2" fill="#00f0ff" text-anchor="middle" font-weight="bold"  stroke="#00f0ff" stroke-width=".32">300</text>
<text x="460" y="732.8" font-size="3.6" fill="#00f0ff" text-anchor="middle" font-weight="bold"  stroke="#00f0ff" stroke-width=".32">MARBLE</text>
<text x="529.5" y="736.8" font-size="3.2" fill="#00f0ff" text-anchor="middle" font-weight="bold"  stroke="#00f0ff" stroke-width=".32">300</text>
<text x="620" y="732.8" font-size="3.6" fill="#00f0ff" text-anchor="middle" font-weight="bold"  stroke="#00f0ff" stroke-width=".32">MARBLE</text>
<text x="701.5" y="736.8" font-size="3.2" fill="#00f0ff" text-anchor="middle" font-weight="bold"  stroke="#00f0ff" stroke-width=".32">300</text>
<line x1="392.5" y1="734" x2="392.5" y2="751.7" stroke="#444" stroke-width="1" />
<line x1="387.5" y1="737.5" x2="393.3" y2="737.5" stroke="#303030" stroke-width="1" />
<line x1="387.5" y1="744" x2="393.3" y2="744" stroke="#303030" stroke-width="1" />
<line x1="387.5" y1="751.7" x2="393.3" y2="751.7" stroke="#303030" stroke-width="1" />
<line x1="392" y1="737.5" x2="399.5" y2="737.5" stroke="#444" stroke-width="1" />
<line x1="396" y1="735" x2="396" y2="740" stroke="#303030" stroke-width="1" />
<line x1="399" y1="735" x2="399" y2="740" stroke="#303030" stroke-width="1" />
<text x="386.5" y="738" font-size="2.8" fill="#00f0ff" text-anchor="middle" font-weight="bold" transform="rotate(-90 386.5 738)"  stroke="#00f0ff" stroke-width=".32">150</text>
<text x="386.5" y="747" font-size="2.8" fill="#00f0ff" text-anchor="middle" font-weight="bold" transform="rotate(-90 386.5 747)"  stroke="#00f0ff" stroke-width=".32">425</text>
<text x="394.5" y="733.5" font-size="2.6" fill="#00f0ff" text-anchor="middle" font-weight="bold"  stroke="#00f0ff" stroke-width=".32">75</text>
<path d="M458.0 743.7l2-4.5 1.500 1.200-1 1.300 1.800.3-2.800 3.500-.2-1.500z" fill="#ffee00" stroke="#ffee00" stroke-width=".5"/>
<path d="M565.2 712.8l2-4.5 1.500 1.200-1 1.300 1.800.3-2.800 3.500-.2-1.500z" fill="#ffee00" stroke="#ffee00" stroke-width=".5"/>
<path d="M630.2 743.7l2-4.5 1.500 1.200-1 1.300 1.800.3-2.800 3.500-.2-1.500z" fill="#ffee00" stroke="#ffee00" stroke-width=".5"/>
<polyline points="472.5,739.2 479.2,750 486.7,750" stroke="#7c7c7c" stroke-width="1" fill="none" />
<circle cx="472.5" cy="739.2" r="0.9" fill="#00f0ff"/>
<text x="488" y="751.3" font-size="3.8" fill="#00f0ff" text-anchor="start" font-weight="bold" textLength="13" lengthAdjust="spacingAndGlyphs" stroke="#00f0ff" stroke-width=".32">GRAVEL</text>
<polyline points="580.3,737 588.3,750 594.7,750" stroke="#7c7c7c" stroke-width="1" fill="none" />
<text x="596" y="751.3" font-size="3.8" fill="#00f0ff" text-anchor="start" font-weight="bold" textLength="19" lengthAdjust="spacingAndGlyphs" stroke="#00f0ff" stroke-width=".32">ROOF DECK</text>
<rect x="735.3" y="719.3" width="13.80" height="5.60" stroke="#ff2a2a" stroke-width="1.1" fill="none"/>
<text x="742.1999999999999" y="723.5" font-size="3.8" fill="#00f0ff" text-anchor="middle" font-weight="bold"  stroke="#00f0ff" stroke-width=".32">CRC</text>
<polyline points="735.3,722 723.3,722 712.5,738.7" stroke="#7c7c7c" stroke-width="1" fill="none" />
<circle cx="712.6" cy="738.6" r="0.9" fill="#00f0ff"/>
<line x1="355.8" y1="758" x2="724.7" y2="758" stroke="#7c7c7c" stroke-width="1" />
<line x1="355.8" y1="753.8" x2="355.8" y2="759.2" stroke="#3a3a3a" stroke-width="0.85" />
<line x1="367.5" y1="753.8" x2="367.5" y2="759.2" stroke="#3a3a3a" stroke-width="0.85" />
<line x1="379.7" y1="753.8" x2="379.7" y2="759.2" stroke="#3a3a3a" stroke-width="0.85" />
<line x1="528.3" y1="753.8" x2="528.3" y2="759.2" stroke="#3a3a3a" stroke-width="0.85" />
<line x1="540.2" y1="753.8" x2="540.2" y2="759.2" stroke="#3a3a3a" stroke-width="0.85" />
<line x1="552" y1="753.8" x2="552" y2="759.2" stroke="#3a3a3a" stroke-width="0.85" />
<line x1="700.5" y1="753.8" x2="700.5" y2="759.2" stroke="#3a3a3a" stroke-width="0.85" />
<line x1="712.5" y1="753.8" x2="712.5" y2="759.2" stroke="#3a3a3a" stroke-width="0.85" />
<line x1="724.7" y1="753.8" x2="724.7" y2="759.2" stroke="#3a3a3a" stroke-width="0.85" />
<text x="361.7" y="756.5" font-size="3.8" fill="#00f0ff" text-anchor="middle" font-weight="bold"  stroke="#00f0ff" stroke-width=".32">700</text>
<text x="373.6" y="756.5" font-size="3.8" fill="#00f0ff" text-anchor="middle" font-weight="bold"  stroke="#00f0ff" stroke-width=".32">700</text>
<text x="454" y="756.5" font-size="3.8" fill="#00f0ff" text-anchor="middle" font-weight="bold"  stroke="#00f0ff" stroke-width=".32">5700</text>
<text x="534.3" y="756.5" font-size="3.8" fill="#00f0ff" text-anchor="middle" font-weight="bold"  stroke="#00f0ff" stroke-width=".32">700</text>
<text x="546" y="756.5" font-size="3.8" fill="#00f0ff" text-anchor="middle" font-weight="bold"  stroke="#00f0ff" stroke-width=".32">700</text>
<text x="626" y="756.5" font-size="3.8" fill="#00f0ff" text-anchor="middle" font-weight="bold"  stroke="#00f0ff" stroke-width=".32">5700</text>
<text x="706.5" y="756.5" font-size="3.8" fill="#00f0ff" text-anchor="middle" font-weight="bold"  stroke="#00f0ff" stroke-width=".32">700</text>
<text x="718.6" y="756.5" font-size="3.8" fill="#00f0ff" text-anchor="middle" font-weight="bold"  stroke="#00f0ff" stroke-width=".32">700</text>
<line x1="367.5" y1="768.3" x2="712.5" y2="768.3" stroke="#7c7c7c" stroke-width="1" />
<text x="454" y="766.5" font-size="3.8" fill="#00f0ff" text-anchor="middle" font-weight="bold"  stroke="#00f0ff" stroke-width=".32">6400</text>
<text x="626" y="766.5" font-size="3.8" fill="#00f0ff" text-anchor="middle" font-weight="bold"  stroke="#00f0ff" stroke-width=".32">6400</text>
<line x1="367.5" y1="754" x2="367.5" y2="768.5" stroke="#555" stroke-width="1" />
<line x1="367.5" y1="769" x2="367.5" y2="773.5" stroke="#ff2a2a" stroke-width="1.2" />
<circle cx="367.7" cy="777.5" r="4.4" stroke="#ff2a2a" stroke-width="1.3" fill="#fff"/>
<text x="367.7" y="779.6" font-size="5.8" fill="#000" text-anchor="middle" font-weight="bold" >D</text>
<line x1="540.2" y1="754" x2="540.2" y2="768.5" stroke="#303030" stroke-width="1" />
<line x1="540.2" y1="769" x2="540.2" y2="773.5" stroke="#ff2a2a" stroke-width="1.2" />
<circle cx="540.4000000000001" cy="777.5" r="4.4" stroke="#ff2a2a" stroke-width="1.3" fill="#fff"/>
<text x="540.4000000000001" y="779.6" font-size="5.8" fill="#000" text-anchor="middle" font-weight="bold" >E</text>
<line x1="712.5" y1="754" x2="712.5" y2="768.5" stroke="#303030" stroke-width="1" />
<line x1="712.5" y1="769" x2="712.5" y2="773.5" stroke="#ff2a2a" stroke-width="1.2" />
<circle cx="712.7" cy="777.5" r="4.4" stroke="#ff2a2a" stroke-width="1.3" fill="#fff"/>
<text x="712.7" y="779.6" font-size="5.8" fill="#000" text-anchor="middle" font-weight="bold" >F</text>
<text x="630.3" y="784.2" font-size="6.6" fill="#111" text-anchor="start" font-weight="bold" textLength="33.5" lengthAdjust="spacingAndGlyphs">ROOF PLAN</text>
<line x1="630" y1="785.2" x2="664" y2="785.2" stroke="#111" stroke-width="1" />
<text x="631" y="788.6" font-size="3.2" fill="#00f0ff" text-anchor="start" font-weight="bold"  stroke="#00f0ff" stroke-width=".32">SCALE  1 : 50</text>
<circle cx="331.7" cy="817" r="4.4" stroke="#ff2a2a" stroke-width="1.3" fill="#fff"/>
<text x="331.7" y="819.1" font-size="5.8" fill="#000" text-anchor="middle" font-weight="bold" >21</text>
<line x1="336.3" y1="816.8" x2="341" y2="816.8" stroke="#ff2a2a" stroke-width="1.2" />
<line x1="351.3" y1="839.7" x2="556.7" y2="839.7" stroke="#7c7c7c" stroke-width="1" />
<line x1="351.3" y1="835.3000000000001" x2="351.3" y2="840.9000000000001" stroke="#3a3a3a" stroke-width="0.85" />
<line x1="367.5" y1="835.3000000000001" x2="367.5" y2="840.9000000000001" stroke="#3a3a3a" stroke-width="0.85" />
<line x1="384.2" y1="835.3000000000001" x2="384.2" y2="840.9000000000001" stroke="#3a3a3a" stroke-width="0.85" />
<line x1="410.8" y1="835.3000000000001" x2="410.8" y2="840.9000000000001" stroke="#3a3a3a" stroke-width="0.85" />
<line x1="497.5" y1="835.3000000000001" x2="497.5" y2="840.9000000000001" stroke="#3a3a3a" stroke-width="0.85" />
<line x1="524.2" y1="835.3000000000001" x2="524.2" y2="840.9000000000001" stroke="#3a3a3a" stroke-width="0.85" />
<line x1="540.2" y1="835.3000000000001" x2="540.2" y2="840.9000000000001" stroke="#3a3a3a" stroke-width="0.85" />
<line x1="556.7" y1="835.3000000000001" x2="556.7" y2="840.9000000000001" stroke="#3a3a3a" stroke-width="0.85" />
<text x="359.5" y="838.2" font-size="3.8" fill="#00f0ff" text-anchor="middle" font-weight="bold"  stroke="#00f0ff" stroke-width=".32">750</text>
<text x="375.5" y="838.2" font-size="3.8" fill="#00f0ff" text-anchor="middle" font-weight="bold"  stroke="#00f0ff" stroke-width=".32">750</text>
<text x="397.5" y="838.2" font-size="3.8" fill="#00f0ff" text-anchor="middle" font-weight="bold"  stroke="#00f0ff" stroke-width=".32">1200</text>
<text x="454" y="838.2" font-size="3.8" fill="#00f0ff" text-anchor="middle" font-weight="bold"  stroke="#00f0ff" stroke-width=".32">4000</text>
<text x="511" y="838.2" font-size="3.8" fill="#00f0ff" text-anchor="middle" font-weight="bold"  stroke="#00f0ff" stroke-width=".32">1200</text>
<text x="532.2" y="838.2" font-size="3.8" fill="#00f0ff" text-anchor="middle" font-weight="bold"  stroke="#00f0ff" stroke-width=".32">750</text>
<text x="548.5" y="838.2" font-size="3.8" fill="#00f0ff" text-anchor="middle" font-weight="bold"  stroke="#00f0ff" stroke-width=".32">750</text>
<line x1="367.5" y1="845.7" x2="367.5" y2="856.5" stroke="#303030" stroke-width="1" />
<line x1="540.2" y1="845.7" x2="540.2" y2="856.5" stroke="#303030" stroke-width="1" />
<line x1="712.5" y1="845.7" x2="712.5" y2="856.5" stroke="#303030" stroke-width="1" />
<line x1="367.5" y1="856.3000000000001" x2="712.5" y2="856.3000000000001" stroke="#7c7c7c" stroke-width="1.2" />
<text x="454" y="854.5" font-size="3.8" fill="#00f0ff" text-anchor="middle" font-weight="bold"  stroke="#00f0ff" stroke-width=".32">6400</text>
<text x="626" y="854.5" font-size="3.8" fill="#00f0ff" text-anchor="middle" font-weight="bold"  stroke="#00f0ff" stroke-width=".32">6400</text>
<line x1="367.5" y1="856.9000000000001" x2="367.5" y2="861.2" stroke="#ff2a2a" stroke-width="1.2" />
<circle cx="367.7" cy="865.8000000000001" r="4.4" stroke="#ff2a2a" stroke-width="1.3" fill="#fff"/>
<text x="367.7" y="867.9000000000001" font-size="5.8" fill="#000" text-anchor="middle" font-weight="bold" >D</text>
<line x1="540.2" y1="856.9000000000001" x2="540.2" y2="861.2" stroke="#ff2a2a" stroke-width="1.2" />
<circle cx="540.4000000000001" cy="865.8000000000001" r="4.4" stroke="#ff2a2a" stroke-width="1.3" fill="#fff"/>
<text x="540.4000000000001" y="867.9000000000001" font-size="5.8" fill="#000" text-anchor="middle" font-weight="bold" >E</text>
<line x1="712.5" y1="856.9000000000001" x2="712.5" y2="861.2" stroke="#ff2a2a" stroke-width="1.2" />
<circle cx="712.7" cy="865.8000000000001" r="4.4" stroke="#ff2a2a" stroke-width="1.3" fill="#fff"/>
<text x="712.7" y="867.9000000000001" font-size="5.8" fill="#000" text-anchor="middle" font-weight="bold" >F</text>
<text x="626.3" y="868.2" font-size="6.4" fill="#111" text-anchor="start" font-weight="bold" textLength="62.4" lengthAdjust="spacingAndGlyphs">GROUND FLOOR PLAN</text>
<line x1="626" y1="869.2" x2="689.0999999999999" y2="869.2" stroke="#111" stroke-width="1" />
<text x="627" y="872.6" font-size="3.2" fill="#00f0ff" text-anchor="start" font-weight="bold"  stroke="#00f0ff" stroke-width=".32">SCALE  1 : 50</text>
<line x1="406.7" y1="825" x2="411.3" y2="825" stroke="#444" stroke-width="1" />
<line x1="406.7" y1="821.8" x2="406.7" y2="827.4" stroke="#303030" stroke-width="1" />
<line x1="411.3" y1="821.8" x2="411.3" y2="827.4" stroke="#303030" stroke-width="1" />
<text x="409.0" y="821.8" font-size="3" fill="#00f0ff" text-anchor="middle" font-weight="bold"  stroke="#00f0ff" stroke-width=".32">150</text>
<line x1="497" y1="825" x2="501.7" y2="825" stroke="#444" stroke-width="1" />
<line x1="497" y1="821.8" x2="497" y2="827.4" stroke="#303030" stroke-width="1" />
<line x1="501.7" y1="821.8" x2="501.7" y2="827.4" stroke="#303030" stroke-width="1" />
<text x="499.35" y="821.8" font-size="3" fill="#00f0ff" text-anchor="middle" font-weight="bold"  stroke="#00f0ff" stroke-width=".32">150</text>
<text x="444.2" y="811.6" font-size="3.8" fill="#00f0ff" text-anchor="start" font-weight="bold" textLength="18.3" lengthAdjust="spacingAndGlyphs" stroke="#00f0ff" stroke-width=".32">BRICK WALL</text>
<polyline points="466.3,810 475.8,810 480.3,817.5" stroke="#7c7c7c" stroke-width="1" fill="none" />
<circle cx="480.3" cy="817.6" r="0.9" fill="#00f0ff"/>
<line x1="522.5" y1="815" x2="522.5" y2="825.5" stroke="#444" stroke-width="1" />
<line x1="522" y1="815" x2="526" y2="815" stroke="#303030" stroke-width="1" />
<line x1="522" y1="825.5" x2="526" y2="825.5" stroke="#303030" stroke-width="1" />
<text x="518" y="822.4" font-size="4" fill="#00f0ff" text-anchor="middle" font-weight="bold"  stroke="#00f0ff" stroke-width=".32">E</text>
<line x1="556.7" y1="825.8" x2="695.8" y2="825.8" stroke="#7c7c7c" stroke-width="1.2" />
<line x1="556.7" y1="822.6" x2="556.7" y2="828.2" stroke="#303030" stroke-width="1" />
<line x1="561.3" y1="822.6" x2="561.3" y2="828.2" stroke="#303030" stroke-width="1" />
<text x="559.0" y="822.6" font-size="3" fill="#00f0ff" text-anchor="middle" font-weight="bold"  stroke="#00f0ff" stroke-width=".32">150</text>
<line x1="613" y1="822.6" x2="613" y2="828.2" stroke="#303030" stroke-width="1" />
<line x1="617.8" y1="822.6" x2="617.8" y2="828.2" stroke="#303030" stroke-width="1" />
<text x="615.4" y="822.6" font-size="3" fill="#00f0ff" text-anchor="middle" font-weight="bold"  stroke="#00f0ff" stroke-width=".32">150</text>
<line x1="634.7" y1="822.6" x2="634.7" y2="828.2" stroke="#303030" stroke-width="1" />
<line x1="639.5" y1="822.6" x2="639.5" y2="828.2" stroke="#303030" stroke-width="1" />
<text x="637.1" y="822.6" font-size="3" fill="#00f0ff" text-anchor="middle" font-weight="bold"  stroke="#00f0ff" stroke-width=".32">150</text>
<line x1="690.8" y1="822.6" x2="690.8" y2="828.2" stroke="#303030" stroke-width="1" />
<line x1="695.8" y1="822.6" x2="695.8" y2="828.2" stroke="#303030" stroke-width="1" />
<text x="693.3" y="822.6" font-size="3" fill="#00f0ff" text-anchor="middle" font-weight="bold"  stroke="#00f0ff" stroke-width=".32">150</text>
<text x="587" y="824.6" font-size="3.4" fill="#00f0ff" text-anchor="middle" font-weight="bold"  stroke="#00f0ff" stroke-width=".32">3075</text>
<text x="626.3" y="824.6" font-size="3.4" fill="#00f0ff" text-anchor="middle" font-weight="bold"  stroke="#00f0ff" stroke-width=".32">1050</text>
<text x="665" y="824.6" font-size="3.4" fill="#00f0ff" text-anchor="middle" font-weight="bold"  stroke="#00f0ff" stroke-width=".32">3075</text>
<text x="615" y="813.5" font-size="3.4" fill="#00f0ff" text-anchor="middle" font-weight="bold"  stroke="#00f0ff" stroke-width=".32">C7</text>
<line x1="620.5" y1="816.5" x2="620.5" y2="821" stroke="#303030" stroke-width="1" />
<line x1="623.5" y1="816.5" x2="623.5" y2="821" stroke="#303030" stroke-width="1" />
<line x1="619" y1="818.8" x2="625" y2="818.8" stroke="#303030" stroke-width="1" />
<text x="619" y="817" font-size="2.6" fill="#00f0ff" text-anchor="middle" font-weight="bold"  stroke="#00f0ff" stroke-width=".32">75</text>
<line x1="697.5" y1="815" x2="697.5" y2="817.6" stroke="#3040a0" stroke-width="1" />
<line x1="702.3" y1="815" x2="702.3" y2="817.6" stroke="#3040a0" stroke-width="1" />
<line x1="706.8" y1="815" x2="706.8" y2="817.6" stroke="#3040a0" stroke-width="1" />
<circle cx="331.7" cy="907.5" r="4.4" stroke="#ff2a2a" stroke-width="1.3" fill="#fff"/>
<text x="331.7" y="909.6" font-size="5.8" fill="#000" text-anchor="middle" font-weight="bold" >21</text>
<line x1="336.3" y1="907.3" x2="341" y2="907.3" stroke="#ff2a2a" stroke-width="1.2" />
<line x1="351.3" y1="933.8" x2="556.7" y2="933.8" stroke="#7c7c7c" stroke-width="1" />
<line x1="351.3" y1="929.4" x2="351.3" y2="935.0" stroke="#3a3a3a" stroke-width="0.85" />
<line x1="367.5" y1="929.4" x2="367.5" y2="935.0" stroke="#3a3a3a" stroke-width="0.85" />
<line x1="384.2" y1="929.4" x2="384.2" y2="935.0" stroke="#3a3a3a" stroke-width="0.85" />
<line x1="410.8" y1="929.4" x2="410.8" y2="935.0" stroke="#3a3a3a" stroke-width="0.85" />
<line x1="497.5" y1="929.4" x2="497.5" y2="935.0" stroke="#3a3a3a" stroke-width="0.85" />
<line x1="524.2" y1="929.4" x2="524.2" y2="935.0" stroke="#3a3a3a" stroke-width="0.85" />
<line x1="540.2" y1="929.4" x2="540.2" y2="935.0" stroke="#3a3a3a" stroke-width="0.85" />
<line x1="556.7" y1="929.4" x2="556.7" y2="935.0" stroke="#3a3a3a" stroke-width="0.85" />
<text x="359.5" y="932.3" font-size="3.8" fill="#00f0ff" text-anchor="middle" font-weight="bold"  stroke="#00f0ff" stroke-width=".32">750</text>
<text x="375.5" y="932.3" font-size="3.8" fill="#00f0ff" text-anchor="middle" font-weight="bold"  stroke="#00f0ff" stroke-width=".32">750</text>
<text x="397.5" y="932.3" font-size="3.8" fill="#00f0ff" text-anchor="middle" font-weight="bold"  stroke="#00f0ff" stroke-width=".32">1200</text>
<text x="454" y="932.3" font-size="3.8" fill="#00f0ff" text-anchor="middle" font-weight="bold"  stroke="#00f0ff" stroke-width=".32">4000</text>
<text x="511" y="932.3" font-size="3.8" fill="#00f0ff" text-anchor="middle" font-weight="bold"  stroke="#00f0ff" stroke-width=".32">1200</text>
<text x="532.2" y="932.3" font-size="3.8" fill="#00f0ff" text-anchor="middle" font-weight="bold"  stroke="#00f0ff" stroke-width=".32">750</text>
<text x="548.5" y="932.3" font-size="3.8" fill="#00f0ff" text-anchor="middle" font-weight="bold"  stroke="#00f0ff" stroke-width=".32">750</text>
<line x1="367.5" y1="939.8" x2="367.5" y2="950.5999999999999" stroke="#303030" stroke-width="1" />
<line x1="540.2" y1="939.8" x2="540.2" y2="950.5999999999999" stroke="#303030" stroke-width="1" />
<line x1="712.5" y1="939.8" x2="712.5" y2="950.5999999999999" stroke="#303030" stroke-width="1" />
<line x1="367.5" y1="950.4" x2="712.5" y2="950.4" stroke="#7c7c7c" stroke-width="1.2" />
<text x="454" y="948.5999999999999" font-size="3.8" fill="#00f0ff" text-anchor="middle" font-weight="bold"  stroke="#00f0ff" stroke-width=".32">6400</text>
<text x="626" y="948.5999999999999" font-size="3.8" fill="#00f0ff" text-anchor="middle" font-weight="bold"  stroke="#00f0ff" stroke-width=".32">6400</text>
<line x1="367.5" y1="951.0" x2="367.5" y2="955.3" stroke="#ff2a2a" stroke-width="1.2" />
<circle cx="367.7" cy="959.9" r="4.4" stroke="#ff2a2a" stroke-width="1.3" fill="#fff"/>
<text x="367.7" y="962.0" font-size="5.8" fill="#000" text-anchor="middle" font-weight="bold" >D</text>
<line x1="540.2" y1="951.0" x2="540.2" y2="955.3" stroke="#ff2a2a" stroke-width="1.2" />
<circle cx="540.4000000000001" cy="959.9" r="4.4" stroke="#ff2a2a" stroke-width="1.3" fill="#fff"/>
<text x="540.4000000000001" y="962.0" font-size="5.8" fill="#000" text-anchor="middle" font-weight="bold" >E</text>
<line x1="712.5" y1="951.0" x2="712.5" y2="955.3" stroke="#ff2a2a" stroke-width="1.2" />
<circle cx="712.7" cy="959.9" r="4.4" stroke="#ff2a2a" stroke-width="1.3" fill="#fff"/>
<text x="712.7" y="962.0" font-size="5.8" fill="#000" text-anchor="middle" font-weight="bold" >F</text>
<text x="626.3" y="962.3" font-size="6.4" fill="#111" text-anchor="start" font-weight="bold" textLength="69.2" lengthAdjust="spacingAndGlyphs">BASEMENT FLOOR PLAN</text>
<line x1="626" y1="963.3" x2="695.9" y2="963.3" stroke="#111" stroke-width="1" />
<text x="627" y="966.6999999999999" font-size="3.2" fill="#00f0ff" text-anchor="start" font-weight="bold"  stroke="#00f0ff" stroke-width=".32">SCALE  1 : 50</text>
<rect x="444.2" y="892" width="13.80" height="5.60" stroke="#ff2a2a" stroke-width="1.1" fill="none"/>
<text x="451.09999999999997" y="896.2" font-size="3.8" fill="#00f0ff" text-anchor="middle" font-weight="bold"  stroke="#00f0ff" stroke-width=".32">GRC</text>
<polyline points="444.2,895 438.3,895 430.8,908" stroke="#7c7c7c" stroke-width="1" fill="none" />
<circle cx="430.9" cy="907.9" r="0.9" fill="#00f0ff"/>
<text x="393" y="919.6" font-size="3.4" fill="#00f0ff" text-anchor="middle" font-weight="bold"  stroke="#00f0ff" stroke-width=".32">TBM</text>
<text x="442.5" y="928.3" font-size="3.8" fill="#00f0ff" text-anchor="start" font-weight="bold" textLength="23.3" lengthAdjust="spacingAndGlyphs" stroke="#00f0ff" stroke-width=".32">TIMBER FLOORING</text>
<polyline points="465.8,927.3 474.2,927.3 480.3,916.7" stroke="#7c7c7c" stroke-width="1" fill="none" />
<circle cx="480.2" cy="916.8" r="0.9" fill="#00f0ff"/>
<line x1="515" y1="905.3" x2="515" y2="924.2" stroke="#444" stroke-width="1" />
<line x1="514.5" y1="905.3" x2="519" y2="905.3" stroke="#303030" stroke-width="1" />
<line x1="514.5" y1="924.2" x2="519" y2="924.2" stroke="#303030" stroke-width="1" />
<text x="510.3" y="917" font-size="4.4" fill="#00f0ff" text-anchor="middle" font-weight="bold"  stroke="#00f0ff" stroke-width=".32">E</text>
<line x1="556.7" y1="916.7" x2="712" y2="916.7" stroke="#7c7c7c" stroke-width="1.2" />
<line x1="556.7" y1="913.4" x2="556.7" y2="919" stroke="#303030" stroke-width="1" />
<line x1="561.3" y1="913.4" x2="561.3" y2="919" stroke="#303030" stroke-width="1" />
<text x="559.0" y="913.4" font-size="3" fill="#00f0ff" text-anchor="middle" font-weight="bold"  stroke="#00f0ff" stroke-width=".32">150</text>
<line x1="613" y1="913.4" x2="613" y2="919" stroke="#303030" stroke-width="1" />
<line x1="617.8" y1="913.4" x2="617.8" y2="919" stroke="#303030" stroke-width="1" />
<text x="615.4" y="913.4" font-size="3" fill="#00f0ff" text-anchor="middle" font-weight="bold"  stroke="#00f0ff" stroke-width=".32">150</text>
<line x1="634.7" y1="913.4" x2="634.7" y2="919" stroke="#303030" stroke-width="1" />
<line x1="639.5" y1="913.4" x2="639.5" y2="919" stroke="#303030" stroke-width="1" />
<text x="637.1" y="913.4" font-size="3" fill="#00f0ff" text-anchor="middle" font-weight="bold"  stroke="#00f0ff" stroke-width=".32">150</text>
<line x1="690.8" y1="913.4" x2="690.8" y2="919" stroke="#303030" stroke-width="1" />
<line x1="695.8" y1="913.4" x2="695.8" y2="919" stroke="#303030" stroke-width="1" />
<text x="693.3" y="913.4" font-size="3" fill="#00f0ff" text-anchor="middle" font-weight="bold"  stroke="#00f0ff" stroke-width=".32">150</text>
<text x="587" y="915.5" font-size="3.4" fill="#00f0ff" text-anchor="middle" font-weight="bold"  stroke="#00f0ff" stroke-width=".32">3075</text>
<text x="565" y="921" font-size="3" fill="#00f0ff" text-anchor="middle" font-weight="bold"  stroke="#00f0ff" stroke-width=".32">150</text>
<line x1="558" y1="920.5" x2="558" y2="926" stroke="#303030" stroke-width="1" />
<line x1="556.5" y1="925.8" x2="561" y2="925.8" stroke="#303030" stroke-width="1" />
<polyline points="637.7,925.7 644.8,935" stroke="#555" stroke-width="1" fill="none" />
<circle cx="637.7" cy="925.7" r="0.9" fill="#00f0ff"/>
<text x="678" y="938.8" font-size="3.2" fill="#00f0ff" text-anchor="middle" font-weight="bold"  stroke="#00f0ff" stroke-width=".32">COVER</text>
<text x="742" y="918.5" font-size="3" fill="#3080c0" text-anchor="middle" font-weight="normal" >150</text>
<text x="1112.8" y="883.4" font-size="5.6" fill="#10f010" text-anchor="middle" font-weight="bold" textLength="56.6" lengthAdjust="spacingAndGlyphs">PARTIAL FACADE #5</text>
<text x="1112.8" y="890.2" font-size="5.6" fill="#10f010" text-anchor="middle" font-weight="bold" textLength="49" lengthAdjust="spacingAndGlyphs">SOUTH ELEVATION</text>
<text x="1127.3" y="914.2" font-size="3.6" fill="#10f010" text-anchor="middle" font-weight="bold" >P.A.J</text>
<text x="1161" y="914.2" font-size="3.6" fill="#10f010" text-anchor="middle" font-weight="bold" >03/06</text>
<text x="1071.7" y="931.5" font-size="4" fill="#10f010" text-anchor="middle" font-weight="bold" textLength="14.6" lengthAdjust="spacingAndGlyphs">1 : 50</text>
<text x="1138.1" y="965.7" font-size="13.4" fill="#18f018" text-anchor="start" font-weight="normal" textLength="31.5" lengthAdjust="spacingAndGlyphs">4106</text></svg>
<div class="b" style="left:612px;top:895px;width:697px;height:30px;background:rgba(108,108,108,.86);border-radius:3px"></div>
<div class="b" style="left:612px;top:930px;width:60px;height:15px;background:rgba(92,92,92,.9);border-radius:3px"></div>
<div class="b" style="left:612px;top:950px;width:60px;height:15px;background:rgba(92,92,92,.9);border-radius:3px"></div>
<div class="b" style="left:553px;top:968px;width:54px;height:26px;background:rgba(100,100,100,.93);border-radius:4px 0 0 0;border-top:1px solid #8a8a8a"></div>
<div class="b" style="left:606px;top:968px;width:755px;height:26px;background:rgba(255,255,255,.72);border-top:1px solid #7a7a7a;border-right:1px solid #9a9a9a"></div>
<div class="b" style="left:7px;top:995px;width:1900px;height:2px;background:linear-gradient(#5a5a5a,#3c3c3c)"></div>
<div class="b" style="left:1449px;top:995px;width:1457px;height:29px;background:#4b4b4b;width:457px;border-top:1px solid #666"></div>
<svg width="1908" height="1024" viewBox="0 0 1908 1024"><rect x="1845" y="199.5" width="11" height="3.6" fill="#f0f0f0" stroke="#333" stroke-width="1"/>
<rect x="1868" y="193" width="8" height="8" fill="#f0f0f0" stroke="#333" stroke-width="1"/><rect x="1865.500" y="195.500" width="9" height="8.500" fill="#f0f0f0" stroke="#333" stroke-width="1"/><rect x="1868.400" y="198.300" width="3.200" height="3" fill="#555"/>
<path d="M1886 194l9 8M1895 194l-9 8" stroke="#333" stroke-width="4" /><path d="M1886.300 194.300l8.400 7.400M1894.700 194.300l-8.400 7.400" stroke="#f2f2f2" stroke-width="2.200"/>
<rect x="1870" y="443" width="33.500" height="134" rx="4" fill="#9c9c9c" stroke="#757575" stroke-width="1.400"/>
<rect x="1871.500" y="445" width="30.500" height="9" fill="#a4a4a4"/><line x1="1872" y1="454.5" x2="1902" y2="454.5" stroke="#8c8c8c" stroke-dasharray="1 1"/>
<circle cx="1896.8" cy="449.3" r="3.3" stroke="#c4c4c4" stroke-width="1" fill="#909090" />
<path d="M1895.300 447.800l3 3M1898.300 447.800l-3 3" stroke="#cfcfcf" stroke-width="1"/>
<path d="M1884 465h7.500q2.500 0 2.500 2.500v9q0 4-4 4h-7q-7.500-1-7.500-8 0-7 8.500-7.500z" fill="none" stroke="#878787" stroke-width="1.600"/>
<circle cx="1884.2" cy="473" r="4" stroke="#878787" stroke-width="1.5" fill="none" />
<line x1="1874" y1="490.5" x2="1900" y2="490.5" stroke="#8e8e8e"/>
<path d="M1881 508.500l-4.500-1.500q-1-2.500 1.500-2.500l4 1.500 1-8q0.300-2 2-1.500l1 7 .5-8.500q1-2 2.200-.2l.6 8.700 1.700-7q1.300-1.500 2 .3l-.8 8 2.300-3.500q2-.5 1.700 1.500l-3.200 7.700q-.5 6.500-5 7.500h-3q-3.500-1-5-5z" fill="#959595" stroke="#868686" stroke-width="1.200"/>
<path d="M1876 524l14 14M1890 524l-14 14" stroke="#878787" stroke-width="1.200" fill="none"/>
<path d="M1875 523h4l-4 4zM1891 523h-4l4 4zM1875 539h4l-4-4z" fill="#878787" />
<circle cx="1890.5" cy="537.5" r="4" stroke="#878787" stroke-width="1.3" fill="#a0a0a0" />
<line x1="1893.5" y1="540.5" x2="1897.5" y2="544.5" stroke="#808080" stroke-width="2" />
<path d="M1884.8 553.0h5l-2.5 3z" fill="#858585"/>
<circle cx="1897" cy="569.8" r="3.4" stroke="#8a8a8a" stroke-width="1" fill="#a0a0a0" />
<path d="M1895.0 569.3h4l-2.0 2.4z" fill="#8a8a8a"/>
<path d="M23.3 891.5V978.5H73.4z" stroke="#1c3cff" stroke-width="1.3" fill="none" />
<path d="M23.3 970.5h8.200v8" stroke="#1c3cff" stroke-width="1.3" fill="none" />
<path d="M25.5 917l5.800 7.500 6-7.500M31.300 924.500v5.200" stroke="#1c3cff" stroke-width="1.3" fill="none" />
<path d="M51.300 964.300l12.700 12.400M64.300 964.300l-13 12.400" stroke="#1c3cff" stroke-width="1.3" fill="none" />
<rect x="557" y="972.5" width="1" height="1" fill="#c8c8c8"/><rect x="559.500" y="972.5" width="1" height="1" fill="#c8c8c8"/>
<rect x="557" y="975.0" width="1" height="1" fill="#c8c8c8"/><rect x="559.500" y="975.0" width="1" height="1" fill="#c8c8c8"/>
<rect x="557" y="977.5" width="1" height="1" fill="#c8c8c8"/><rect x="559.500" y="977.5" width="1" height="1" fill="#c8c8c8"/>
<rect x="557" y="980.0" width="1" height="1" fill="#c8c8c8"/><rect x="559.500" y="980.0" width="1" height="1" fill="#c8c8c8"/>
<rect x="557" y="982.5" width="1" height="1" fill="#c8c8c8"/><rect x="559.500" y="982.5" width="1" height="1" fill="#c8c8c8"/>
<rect x="557" y="985.0" width="1" height="1" fill="#c8c8c8"/><rect x="559.500" y="985.0" width="1" height="1" fill="#c8c8c8"/>
<rect x="557" y="987.5" width="1" height="1" fill="#c8c8c8"/><rect x="559.500" y="987.5" width="1" height="1" fill="#c8c8c8"/>
<rect x="557" y="990.0" width="1" height="1" fill="#c8c8c8"/><rect x="559.500" y="990.0" width="1" height="1" fill="#c8c8c8"/>
<path d="M568.500 977l7 7M575.500 977l-7 7" stroke="#f4f4f4" stroke-width="1.8" fill="none" />
<path d="M590.500 979.500l7.500 8" stroke="#f2f2f2" stroke-width="2.800" stroke-linecap="round"/><circle cx="590" cy="978.600" r="3.400" fill="#f2f2f2"/><path d="M586 974.500l4 4.200 2-2.600z" fill="#686868"/>
<rect x="612" y="975" width="13" height="12.500" rx="1.500" fill="#dcdcdc" stroke="#8c8c8c" stroke-width="1"/><path d="M614.500 978l3.500 3-3.500 3M619 985h4" stroke="#5a5a5a" stroke-width="1.200" fill="none"/>
<path d="M629.7 979.2h5l-2.5 3z" fill="#8a8a8a"/>
<path d="M1350.500 983.500h7l-3.500-4z" fill="#3a3a3a" />
<rect x="1450.5" y="996.5" width="41.0" height="25" fill="none" stroke="#646464" stroke-width="1"/>
<rect x="1493.5" y="996.5" width="102.5" height="25" fill="none" stroke="#646464" stroke-width="1"/>
<rect x="1596" y="996.5" width="64.5" height="25" fill="none" stroke="#646464" stroke-width="1"/>
<rect x="1662.5" y="996.5" width="73.0" height="25" fill="none" stroke="#646464" stroke-width="1"/>
<rect x="1737.5" y="996.5" width="39.5" height="25" fill="none" stroke="#646464" stroke-width="1"/>
<rect x="1777" y="996.5" width="26" height="25" fill="none" stroke="#646464" stroke-width="1"/>
<rect x="1805" y="996.5" width="24.5" height="25" fill="none" stroke="#646464" stroke-width="1"/>
<rect x="1831.5" y="996.5" width="22.5" height="25" fill="none" stroke="#646464" stroke-width="1"/>
<rect x="1856" y="996.5" width="49" height="25" fill="none" stroke="#646464" stroke-width="1"/>
<rect x="1495" y="998" width="22" height="22" fill="#6a97c9"/><rect x="1622" y="998" width="22" height="22" fill="#6a97c9"/>
<path d="M1498.500 1001.500v15.200h15.500M1498.500 1012.300h4.300v4.400" stroke="#fafafa" stroke-width="1.3" fill="none" />
<circle cx="1528.7" cy="1009" r="6.5" stroke="#e8e8e8" stroke-width="1.3" fill="none" />
<path d="M1526 1009.500h10.500M1527.500 1010l8-8.500" stroke="#e8e8e8" stroke-width="1.3" fill="none" />
<path d="M1545.9 1006.8h7l-3.5 4z" fill="#f4f4f4"/>
<line x1="1568.3" y1="1001" x2="1568.3" y2="1016.5" stroke="#5fd0e8" stroke-width="1.3" />
<line x1="1562" y1="1002" x2="1575" y2="1015.2" stroke="#f06a5a" stroke-width="1.3" />
<circle cx="1568.3" cy="1008.7" r="1.6" stroke="#f4f4f4" stroke-width="1" fill="#4b4b4b" />
<path d="M1584.9 1006.8h7l-3.5 4z" fill="#f4f4f4"/>
<path d="M1613.500 1003.300l-12 11.200h15.500" stroke="#e8e8e8" stroke-width="1.3" fill="none" />
<rect x="1606" y="1007" width="3.200" height="3.200" fill="#e8e8e8"/>
<path d="M1629.500 1003.500h11v13h-13v-11" stroke="#fafafa" stroke-width="1.4" fill="none" />
<rect x="1625.300" y="1001.300" width="4" height="4" fill="#6a97c9" stroke="#fafafa" stroke-width="1.200"/>
<path d="M1649.1 1006.8h7l-3.5 4z" fill="#f4f4f4"/>
<rect x="1667.500" y="1001.500" width="15.500" height="15" fill="none" stroke="#e8e8e8" stroke-width="1.400" stroke-dasharray="3.500 2"/>
<rect x="1674.500" y="1008" width="6" height="6" fill="#4b4b4b" stroke="#e8e8e8" stroke-width="1.300"/>
<path d="M1667.500 1001.500l5.500 5.500" stroke="#e8e8e8" stroke-width="1.4" fill="none" />
<path d="M1666.500 1000.500h4.500l-4.500 4.500z" fill="#e8e8e8" />
<path d="M1698.5 1001l2.200 7.500 4.800 8-5.800-3.500-1.200 1.500-1.200-1.500-5.800 3.500 4.800-8z" fill="#d8d8d8" />
<circle cx="1704.8" cy="1004.3" r="2" stroke="#e8e8e8" stroke-width="1" fill="none" />
<path d="M1722.5 1001l2.200 7.500 4.800 8-5.800-3.500-1.200 1.500-1.200-1.500-5.800 3.500 4.800-8z" fill="#d8d8d8" />
<path d="M1729 1001l-2.800 3.500h2l-1.500 3.500 4-4.500h-2l1.800-2.500z" fill="#e8e8e8" />
<line x1="1753.4" y1="1008.4" x2="1756.6000000000001" y2="1008.4" stroke="#dcdcdc" stroke-width="2.8" />
<line x1="1752.2284271247463" y1="1011.2284271247462" x2="1754.4911688245431" y2="1013.4911688245431" stroke="#dcdcdc" stroke-width="2.8" />
<line x1="1749.4" y1="1012.4" x2="1749.4" y2="1015.6" stroke="#dcdcdc" stroke-width="2.8" />
<line x1="1746.5715728752539" y1="1011.2284271247462" x2="1744.308831175457" y2="1013.4911688245431" stroke="#dcdcdc" stroke-width="2.8" />
<line x1="1745.4" y1="1008.4" x2="1742.2" y2="1008.4" stroke="#dcdcdc" stroke-width="2.8" />
<line x1="1746.5715728752539" y1="1005.5715728752538" x2="1744.308831175457" y2="1003.3088311754568" stroke="#dcdcdc" stroke-width="2.8" />
<line x1="1749.4" y1="1004.4" x2="1749.4" y2="1001.1999999999999" stroke="#dcdcdc" stroke-width="2.8" />
<line x1="1752.2284271247463" y1="1005.5715728752538" x2="1754.4911688245431" y2="1003.3088311754568" stroke="#dcdcdc" stroke-width="2.8" />
<circle cx="1749.4" cy="1008.4" r="4.1" stroke="#dcdcdc" stroke-width="2.8" fill="none" />
<path d="M1766.2 1006.8h7l-3.5 4z" fill="#f4f4f4"/>
<path d="M1782 1008.500h16M1790 1000.500v16" stroke="#f0f0f0" stroke-width="1.8" fill="none" />
<rect x="1809.500" y="1001.500" width="5.500" height="5.500" fill="none" stroke="#e8e8e8" stroke-width="1.200"/>
<circle cx="1821.5" cy="1007.5" r="3" stroke="#e8e8e8" stroke-width="1.2" fill="none" />
<path d="M1811.500 1016.500l3-5.500 3 5.500z" stroke="#e8e8e8" stroke-width="1.2" fill="none" />
<path d="M1836 1002h9l3 3v9h-12z" fill="#62a8e8" />
<path d="M1845 1002v3h3z" fill="#f0f0f0" />
<path d="M1836 1011h9v4h-9z" fill="#f5c040" />
<circle cx="1839.5" cy="1006.5" r="1.5" stroke="#fff" stroke-width="1" fill="none" />
<path d="M1839.500 1002v12M1836 1006.500h12" stroke="#e8f4ff" stroke-width="0.8" fill="none" />
<path d="M1843.500 1012.500l3 3 4.500-5" stroke="#3a9a3a" stroke-width="2" fill="none" />
<rect x="1861.500" y="1003.500" width="15" height="11" fill="none" stroke="#e8e8e8" stroke-width="1.300"/>
<path d="M1864 1012l3.500-3M1874 1006l-3.500 3" stroke="#e8e8e8" stroke-width="1.1" fill="none" />
<path d="M1863.500 1012.500v-3l3 3zM1874.500 1005.500v3l-3-3z" fill="#e8e8e8" />
<path d="M1885.300 1002.6h15.500v2h-15.500z" fill="#ececec" />
<path d="M1885.300 1007.6h15.500v2h-15.500z" fill="#ececec" />
<path d="M1885.300 1012.6h15.500v2h-15.500z" fill="#ececec" />
<defs><linearGradient id="mtI" x1="0" y1="0" x2="0" y2="1"><stop offset="0" stop-color="#4a4a4a"/><stop offset="1" stop-color="#6c6c6c"/></linearGradient><linearGradient id="mtA" x1="0" y1="0" x2="0" y2="1"><stop offset="0" stop-color="#5c5c5c"/><stop offset="1" stop-color="#929292"/></linearGradient></defs>
<path d="M11 995c5 0 6.500 3 8 8 1.800 6 2.500 10 8.500 10h37c6 0 7-4 9-10 1.500-5 2.500-8 7.500-8z" fill="#575757" stroke="#686868" stroke-width="1"/>
<path d="M72 995c5 0 6 3 7.500 8 2 6 3 10 9 10h42c6 0 7-4 9-10 1.500-5 2.500-8 7.500-8z" fill="url(#mtA)"/>
<path d="M153 995h16.500c-2 8-3 16.500-9 16.500h-13.500c4-3 4.500-10 6-16.500z" fill="#505050"/>
<path d="M153.500 1004h8.500M157.800 999.800v8.500" stroke="#ececec" stroke-width="1.6" fill="none" /></svg>
<span class="t" style="left:1886.50px;top:477.05px;font-size:8.5px;line-height:11px;color:#888;font-family:'Liberation Sans',sans-serif;font-weight:bold;letter-spacing:0.567px;">2D</span>
<span class="t" style="left:614.30px;top:896.09px;font-size:11.6px;line-height:15px;color:#ffffff;font-family:'DejaVu Sans Mono',monospace;letter-spacing:0.016px;">Autodesk DWG.  This file is a TrustedDWG last saved by an Autodesk application or Autodesk licensed</span>
<span class="t" style="left:614.30px;top:910.49px;font-size:11.6px;line-height:15px;color:#ffffff;font-family:'DejaVu Sans Mono',monospace;letter-spacing:0.016px;">application.</span>
<span class="t" style="left:614.30px;top:931.09px;font-size:11.6px;line-height:15px;color:#ffffff;font-family:'DejaVu Sans Mono',monospace;letter-spacing:0.016px;">Command:</span>
<span class="t" style="left:614.30px;top:951.09px;font-size:11.6px;line-height:15px;color:#ffffff;font-family:'DejaVu Sans Mono',monospace;letter-spacing:0.016px;">Command:</span>
<span class="t" style="left:643.20px;top:972.99px;font-size:11.6px;line-height:15px;color:#9a9a9a;font-family:'DejaVu Sans Mono',monospace;font-style:italic;letter-spacing:-0.098px;">Type a command</span>
<span class="t" style="left:1455.10px;top:1000.84px;font-size:12px;line-height:16px;color:#f8f8f8;font-family:'Liberation Sans',sans-serif;letter-spacing:-0.318px;transform:scaleX(0.8638);transform-origin:0 50%;">PAPER</span>
<span class="t" style="left:30.20px;top:995.64px;font-size:12px;line-height:16px;color:#c4c4c4;font-family:'Liberation Sans',sans-serif;letter-spacing:0.224px;">Model</span>
<span class="t" style="left:87.20px;top:995.64px;font-size:12px;line-height:16px;color:#ffffff;font-family:'Liberation Sans',sans-serif;font-weight:bold;letter-spacing:-0.263px;transform:scaleX(0.9556);transform-origin:0 50%;">Layout1</span>
<div class="b" style="left:0;top:1016px;width:14px;height:8px;background:radial-gradient(circle at 14px 0px,transparent 7.500px,#622317 7.500px,#622317 8.500px,#1f2020 8.500px)"></div>
<div class="b" style="left:1900px;top:1016px;width:8px;height:8px;background:radial-gradient(circle at 0px 0px,transparent 6.500px,#622317 7px)"></div>
</body></html>
